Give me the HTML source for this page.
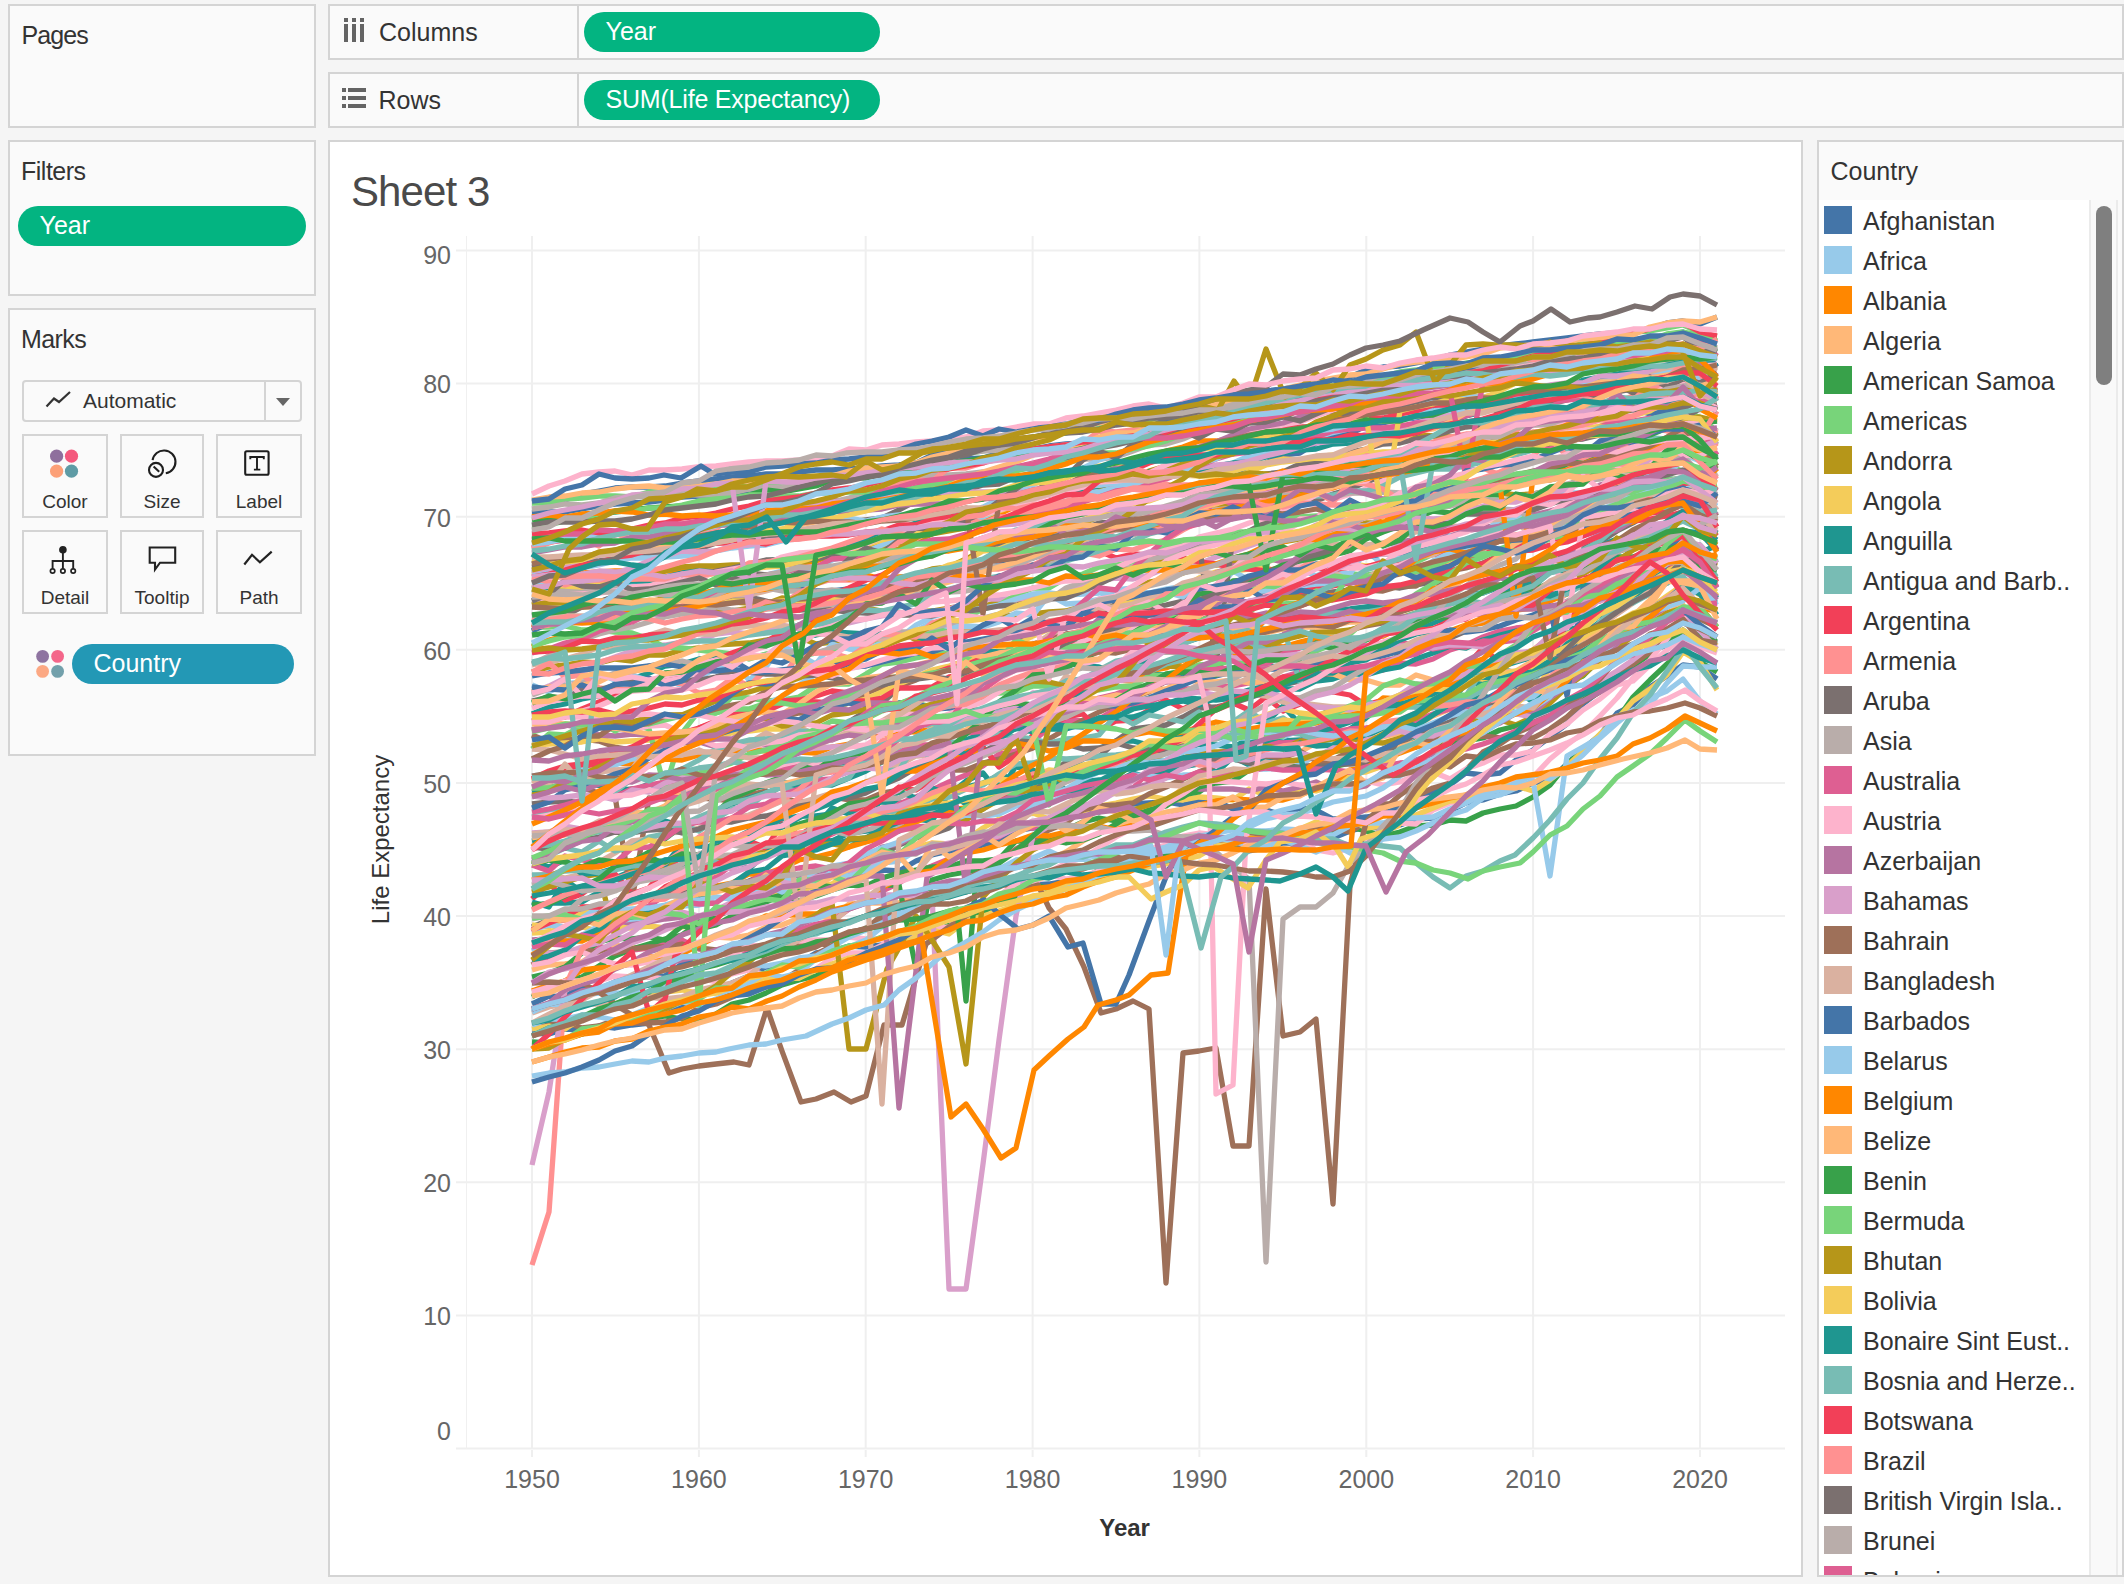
<!DOCTYPE html>
<html><head><meta charset="utf-8"><title>Sheet 3</title>
<style>
html,body{margin:0;padding:0;}
body{width:2124px;height:1584px;background:#f5f5f5;position:relative;overflow:hidden;font-family:"Liberation Sans",sans-serif;}
.b{position:absolute;}
.t{position:absolute;line-height:1;white-space:nowrap;}
svg{position:absolute;}
</style></head><body>
<div class="b" style="left:8px;top:4px;width:304px;height:120px;background:#fafafa;border:2px solid #d4d4d4;"></div>
<div class="t" style="left:21.5px;top:22.8px;font-size:25px;color:#333;letter-spacing:-0.9px;">Pages</div>
<div class="b" style="left:8px;top:140px;width:304px;height:152px;background:#fafafa;border:2px solid #d4d4d4;"></div>
<div class="t" style="left:21.0px;top:159.3px;font-size:25px;color:#333;letter-spacing:-0.5px;">Filters</div>
<div class="b" style="left:18px;top:206px;width:288px;height:40px;background:#03b481;border-radius:20px;"></div>
<div class="t" style="left:39.5px;top:212.8px;font-size:25px;color:#fff;">Year</div>
<div class="b" style="left:8px;top:308px;width:304px;height:444px;background:#fafafa;border:2px solid #d4d4d4;"></div>
<div class="t" style="left:21.0px;top:327.0px;font-size:25px;color:#333;letter-spacing:-0.6px;">Marks</div>
<div class="b" style="left:22px;top:380px;width:276px;height:38px;background:#fafafa;border:2px solid #d4d4d4;border-radius:4px;"></div>
<div class="b" style="left:264px;top:382px;width:2px;height:38px;background:#d4d4d4;"></div>
<svg style="left:275px;top:397px" width="16" height="10"><path d="M1 1 L15 1 L8 9 Z" fill="#666"/></svg>
<svg style="left:44px;top:389px" width="28" height="20"><path d="M2.5 17.5 L10 9.5 L15 13 L26 3" fill="none" stroke="#333" stroke-width="2.2"/></svg>
<div class="t" style="left:83.0px;top:390.2px;font-size:21px;color:#333;">Automatic</div>
<div class="b" style="left:22px;top:434px;width:82px;height:80px;background:#fafafa;border:2px solid #d4d4d4;"></div>
<div class="t" style="left:-435.0px;width:1000px;text-align:center;top:491.9px;font-size:19px;color:#333;">Color</div>
<div class="b" style="left:120px;top:434px;width:80px;height:80px;background:#fafafa;border:2px solid #d4d4d4;"></div>
<div class="t" style="left:-338.0px;width:1000px;text-align:center;top:491.9px;font-size:19px;color:#333;">Size</div>
<div class="b" style="left:216px;top:434px;width:82px;height:80px;background:#fafafa;border:2px solid #d4d4d4;"></div>
<div class="t" style="left:-241.0px;width:1000px;text-align:center;top:491.9px;font-size:19px;color:#333;">Label</div>
<div class="b" style="left:22px;top:530px;width:82px;height:80px;background:#fafafa;border:2px solid #d4d4d4;"></div>
<div class="t" style="left:-435.0px;width:1000px;text-align:center;top:588.2px;font-size:19px;color:#333;">Detail</div>
<div class="b" style="left:120px;top:530px;width:80px;height:80px;background:#fafafa;border:2px solid #d4d4d4;"></div>
<div class="t" style="left:-338.0px;width:1000px;text-align:center;top:588.2px;font-size:19px;color:#333;">Tooltip</div>
<div class="b" style="left:216px;top:530px;width:82px;height:80px;background:#fafafa;border:2px solid #d4d4d4;"></div>
<div class="t" style="left:-241.0px;width:1000px;text-align:center;top:588.2px;font-size:19px;color:#333;">Path</div>
<svg style="left:40px;top:440px" width="44" height="44">
<circle cx="16.6" cy="16.2" r="6.6" fill="#8e6f9d"/><circle cx="31.5" cy="16.2" r="6.6" fill="#f4587c"/>
<circle cx="16.6" cy="31.2" r="6.6" fill="#fca077"/><circle cx="31.5" cy="31.2" r="6.6" fill="#5e9ba5"/></svg>
<svg style="left:140px;top:440px" width="44" height="44">
<path d="M12.6 20.2 A11.5 11.5 0 1 1 25.8 33.3" fill="none" stroke="#1e1e1e" stroke-width="2.1"/>
<circle cx="16" cy="29.9" r="7" fill="none" stroke="#1e1e1e" stroke-width="2.1"/>
<path d="M13.6 26.6 L19.2 31.8" stroke="#1e1e1e" stroke-width="2.1"/></svg>
<svg style="left:236px;top:440px" width="44" height="44">
<rect x="9.2" y="11.2" width="23.4" height="23.5" rx="1.5" fill="none" stroke="#1e1e1e" stroke-width="2.1"/>
<path d="M14.3 19.3 V17 H27.8 V19.3 M21 17 V29.6 M17.9 29.6 H24.3" fill="none" stroke="#1e1e1e" stroke-width="1.9"/></svg>
<svg style="left:40px;top:536px" width="44" height="44">
<circle cx="22.9" cy="13.8" r="3.8" fill="#222"/>
<path d="M22.9 14 V25 M12.6 32.8 V25 H33.2 V32.8 M22.9 25 V32.8" fill="none" stroke="#222" stroke-width="1.9"/>
<circle cx="12.6" cy="35" r="2.2" fill="#fafafa" stroke="#222" stroke-width="1.7"/>
<circle cx="22.9" cy="35" r="2.2" fill="#fafafa" stroke="#222" stroke-width="1.7"/>
<circle cx="33.2" cy="35" r="2.2" fill="#fafafa" stroke="#222" stroke-width="1.7"/></svg>
<svg style="left:140px;top:536px" width="44" height="44">
<path d="M9.7 11.5 H35.2 V26.7 H20 L15 33.5 V26.7 H9.7 Z" fill="none" stroke="#222" stroke-width="2.1" stroke-linejoin="miter"/></svg>
<svg style="left:236px;top:536px" width="44" height="44">
<path d="M8.3 28.5 L16 18.8 L23.9 26.2 L35.7 15.6" fill="none" stroke="#222" stroke-width="2.2"/></svg>
<svg style="left:30px;top:644px" width="40" height="40">
<circle cx="12.6" cy="12.4" r="6.4" fill="#8e73a0"/><circle cx="27.6" cy="12.4" r="6.4" fill="#f4668a"/>
<circle cx="12.6" cy="27.4" r="6.4" fill="#fca883"/><circle cx="27.6" cy="27.4" r="6.4" fill="#72a0ab"/></svg>
<div class="b" style="left:72px;top:644px;width:222px;height:40px;background:#2398b5;border-radius:20px;"></div>
<div class="t" style="left:93.5px;top:650.6px;font-size:25px;color:#fff;">Country</div>
<div class="b" style="left:328px;top:4px;width:1792px;height:52px;background:#fafafa;border:2px solid #d4d4d4;"></div>
<div class="b" style="left:577px;top:6px;width:2px;height:52px;background:#d4d4d4;"></div>
<svg style="left:340px;top:14px" width="30" height="32" fill="#646464"><rect x="4" y="4" width="4" height="4"/><rect x="12" y="4" width="4" height="4"/><rect x="20" y="4" width="4" height="4"/><rect x="4" y="10" width="4" height="18"/><rect x="12" y="10" width="4" height="18"/><rect x="20" y="10" width="4" height="18"/></svg>
<div class="t" style="left:379.0px;top:20.3px;font-size:25px;color:#333;">Columns</div>
<div class="b" style="left:584px;top:12px;width:296px;height:40px;background:#03b481;border-radius:20px;"></div>
<div class="t" style="left:605.5px;top:18.7px;font-size:25px;color:#fff;">Year</div>
<div class="b" style="left:328px;top:72px;width:1792px;height:52px;background:#fafafa;border:2px solid #d4d4d4;"></div>
<div class="b" style="left:577px;top:74px;width:2px;height:52px;background:#d4d4d4;"></div>
<svg style="left:340px;top:84px" width="30" height="30" fill="#646464"><rect x="2" y="4" width="4" height="4"/><rect x="8" y="4" width="18" height="4"/><rect x="2" y="12" width="4" height="4"/><rect x="8" y="12" width="18" height="4"/><rect x="2" y="20" width="4" height="4"/><rect x="8" y="20" width="18" height="4"/></svg>
<div class="t" style="left:378.5px;top:88.1px;font-size:25px;color:#333;">Rows</div>
<div class="b" style="left:584px;top:80px;width:296px;height:40px;background:#03b481;border-radius:20px;"></div>
<div class="t" style="left:605.5px;top:87.0px;font-size:25px;color:#fff;letter-spacing:-0.2px;">SUM(Life Expectancy)</div>
<div class="b" style="left:328px;top:140px;width:1471px;height:1433px;background:#ffffff;border:2px solid #d4d4d4;"></div>
<div class="t" style="left:351.0px;top:170.7px;font-size:42px;color:#4a4a4a;letter-spacing:-0.9px;">Sheet 3</div>
<svg style="left:330px;top:142px" width="1471" height="1433" viewBox="330 142 1471 1433" font-family="Liberation Sans, sans-serif">
<path d="M456 1448.5H1785M456 1315.4H1785M456 1182.3H1785M456 1049.2H1785M456 916.1H1785M456 783.0H1785M456 649.8H1785M456 516.7H1785M456 383.6H1785M456 250.5H1785M532.0 236V1448M532.0 1450V1457M698.9 236V1448M698.9 1450V1457M865.7 236V1448M865.7 1450V1457M1032.6 236V1448M1032.6 1450V1457M1199.4 236V1448M1199.4 1450V1457M1366.3 236V1448M1366.3 1450V1457M1533.1 236V1448M1533.1 1450V1457M1700.0 236V1448M1700.0 1450V1457" stroke="#efefef" stroke-width="2" fill="none"/>
<path d="M466.5 236V1449" stroke="#f0f0f0" stroke-width="1" fill="none"/>
<text x="451.0" y="1440.0" font-size="25" fill="#666" text-anchor="end" >0</text>
<text x="451.0" y="1325.2" font-size="25" fill="#666" text-anchor="end" >10</text>
<text x="451.0" y="1192.1" font-size="25" fill="#666" text-anchor="end" >20</text>
<text x="451.0" y="1059.0" font-size="25" fill="#666" text-anchor="end" >30</text>
<text x="451.0" y="925.9" font-size="25" fill="#666" text-anchor="end" >40</text>
<text x="451.0" y="792.8" font-size="25" fill="#666" text-anchor="end" >50</text>
<text x="451.0" y="659.6" font-size="25" fill="#666" text-anchor="end" >60</text>
<text x="451.0" y="526.5" font-size="25" fill="#666" text-anchor="end" >70</text>
<text x="451.0" y="393.4" font-size="25" fill="#666" text-anchor="end" >80</text>
<text x="451.0" y="264.2" font-size="25" fill="#666" text-anchor="end" >90</text>
<text x="532.0" y="1488.0" font-size="25" fill="#666" text-anchor="middle" >1950</text>
<text x="698.9" y="1488.0" font-size="25" fill="#666" text-anchor="middle" >1960</text>
<text x="865.7" y="1488.0" font-size="25" fill="#666" text-anchor="middle" >1970</text>
<text x="1032.6" y="1488.0" font-size="25" fill="#666" text-anchor="middle" >1980</text>
<text x="1199.4" y="1488.0" font-size="25" fill="#666" text-anchor="middle" >1990</text>
<text x="1366.3" y="1488.0" font-size="25" fill="#666" text-anchor="middle" >2000</text>
<text x="1533.1" y="1488.0" font-size="25" fill="#666" text-anchor="middle" >2010</text>
<text x="1700.0" y="1488.0" font-size="25" fill="#666" text-anchor="middle" >2020</text>
<text x="1124.6" y="1536.0" font-size="24" fill="#333" text-anchor="middle" font-weight="bold">Year</text>
<text transform="translate(388.5 839.5) rotate(-90)" x="0" y="0" font-size="24" fill="#333" text-anchor="middle">Life Expectancy</text>
<g fill="none" stroke-width="5.3" stroke-linejoin="round" stroke-linecap="butt">
<path stroke="#de5f92" d="M532 548L549 542L565 540L582 539L599 536L615 535L632 532L649 529L665 527L682 524L699 521L716 519L732 519L749 515L766 512L782 509L799 507L816 502L832 500L849 502L866 498L882 496L899 492L916 487L932 485L949 483L966 477L983 474L999 470L1016 467L1033 463L1049 459L1066 453L1083 451L1099 446L1116 444L1133 439L1149 435L1166 428L1183 426L1199 418L1216 413L1233 411L1249 407L1266 403L1283 401L1300 397L1316 392L1333 388L1350 386L1366 384L1383 380L1400 381L1416 379L1433 378L1450 376L1466 377L1483 376L1500 374L1516 371L1533 371L1550 370L1567 367L1583 365L1600 365L1617 363L1633 362L1650 360L1667 358L1683 357L1700 351L1717 349"/>
<path stroke="#1f9690" d="M532 906L549 903L565 903L582 902L599 892L615 878L632 871L649 866L665 868L682 866L699 858L716 847L732 840L749 831L766 826L782 819L799 816L816 816L832 814L849 805L866 801L882 802L899 803L916 804L932 798L949 791L966 787L983 783L999 775L1016 779L1033 784L1049 783L1066 780L1083 776L1099 770L1116 768L1133 769L1149 766L1166 764L1183 767L1199 764L1216 760L1233 759L1249 749L1266 743L1283 741L1300 740L1316 737L1333 737L1350 729L1366 718L1383 705L1400 698L1416 692L1433 687L1450 678L1466 679L1483 669L1500 667L1516 662L1533 657L1550 642L1567 630L1583 626L1600 615L1617 603L1633 592L1650 589L1667 583L1683 572L1700 577L1717 598"/>
<path stroke="#7b706f" d="M532 804L549 802L565 801L582 803L599 798L615 791L632 789L649 791L665 788L682 786L699 779L716 777L732 773L749 768L766 761L782 759L799 750L816 745L832 729L849 722L866 711L882 703L899 688L916 678L932 672L949 667L966 660L983 653L999 653L1016 643L1033 633L1049 629L1066 628L1083 619L1099 613L1116 604L1133 606L1149 608L1166 605L1183 601L1199 592L1216 597L1233 597L1249 591L1266 593L1283 591L1300 594L1316 594L1333 592L1350 590L1366 591L1383 586L1400 588L1416 585L1433 582L1450 586L1466 577L1483 575L1500 571L1516 566L1533 568L1550 563L1567 552L1583 548L1600 542L1617 531L1633 523L1650 512L1667 503L1683 498L1700 497L1717 491"/>
<path stroke="#ff8700" d="M532 575L549 573L565 573L582 573L599 572L615 571L632 571L649 571L665 571L682 570L699 571L716 571L732 568L749 567L766 566L782 565L799 563L816 561L832 555L849 551L866 548L882 543L899 541L916 538L932 531L949 528L966 523L983 520L999 514L1016 506L1033 499L1049 492L1066 487L1083 483L1099 478L1116 469L1133 462L1149 456L1166 451L1183 447L1199 441L1216 441L1233 438L1249 436L1266 433L1283 431L1300 430L1316 423L1333 416L1350 417L1366 413L1383 410L1400 408L1416 404L1433 403L1450 398L1466 397L1483 397L1500 395L1516 396L1533 393L1550 394L1567 392L1583 389L1600 388L1617 383L1633 378L1650 375L1667 376L1683 373L1700 386L1717 391"/>
<path stroke="#9e7059" d="M532 735L549 742L565 740L582 739L599 741L615 747L632 750L649 751L665 741L682 743L699 741L716 735L732 730L749 727L766 724L782 717L799 713L816 712L832 708L849 703L866 693L882 687L899 686L916 680L932 671L949 668L966 663L983 660L999 654L1016 648L1033 644L1049 639L1066 634L1083 632L1099 628L1116 623L1133 621L1149 623L1166 618L1183 615L1199 611L1216 610L1233 604L1249 607L1266 601L1283 598L1300 596L1316 597L1333 595L1350 594L1366 590L1383 591L1400 586L1416 586L1433 575L1450 571L1466 568L1483 563L1500 555L1516 547L1533 540L1550 538L1567 531L1583 523L1600 516L1617 508L1633 503L1650 498L1667 497L1683 491L1700 497L1717 516"/>
<path stroke="#4475a8" d="M532 1033L549 1034L565 1029L582 1030L599 1026L615 1028L632 1025L649 1023L665 1010L682 1005L699 993L716 989L732 983L749 976L766 967L782 966L799 963L816 953L832 951L849 946L866 947L882 945L899 939L916 934L932 926L949 913L966 912L983 905L999 900L1016 892L1033 885L1049 884L1066 881L1083 884L1099 870L1116 868L1133 856L1149 857L1166 855L1183 856L1199 847L1216 845L1233 842L1249 851L1266 848L1283 843L1300 843L1316 839L1333 838L1350 831L1366 827L1383 828L1400 825L1416 819L1433 818L1450 811L1466 803L1483 800L1500 794L1516 791L1533 783L1550 780L1567 764L1583 749L1600 735L1617 713L1633 705L1650 687L1667 676L1683 665L1700 667L1717 679"/>
<path stroke="#de5f92" d="M532 932L549 922L565 920L582 917L599 920L615 914L632 911L649 906L665 895L682 892L699 886L716 877L732 865L749 859L766 850L782 847L799 844L816 841L832 834L849 826L866 825L882 817L899 804L916 797L932 790L949 782L966 775L983 766L999 754L1016 751L1033 741L1049 728L1066 720L1083 721L1099 719L1116 709L1133 707L1149 702L1166 695L1183 689L1199 689L1216 687L1233 686L1249 683L1266 682L1283 677L1300 672L1316 674L1333 674L1350 674L1366 671L1383 670L1400 663L1416 664L1433 659L1450 650L1466 645L1483 637L1500 631L1516 628L1533 626L1550 620L1567 610L1583 603L1600 593L1617 591L1633 584L1650 579L1667 569L1683 555L1700 562L1717 566"/>
<path stroke="#4475a8" d="M532 502L549 499L565 500L582 494L599 491L615 488L632 487L649 487L665 486L682 483L699 481L716 479L732 477L749 476L766 474L782 474L799 472L816 470L832 470L849 469L866 468L882 466L899 465L916 463L932 455L949 450L966 448L983 446L999 445L1016 442L1033 438L1049 433L1066 429L1083 429L1099 424L1116 424L1133 418L1149 415L1166 412L1183 408L1199 402L1216 403L1233 398L1249 395L1266 391L1283 389L1300 387L1316 383L1333 379L1350 377L1366 370L1383 367L1400 366L1416 363L1433 360L1450 355L1466 352L1483 349L1500 346L1516 344L1533 342L1550 340L1567 338L1583 336L1600 334L1617 333L1633 331L1650 329L1667 323L1683 321L1700 324L1717 317"/>
<path stroke="#b69619" d="M532 622L549 619L565 611L582 607L599 606L615 600L632 600L649 602L665 598L682 599L699 602L716 599L732 602L749 603L766 603L782 605L799 604L816 605L832 603L849 607L866 608L882 611L899 613L916 612L932 611L949 608L966 606L983 607L999 601L1016 599L1033 599L1049 596L1066 596L1083 588L1099 582L1116 577L1133 568L1149 564L1166 561L1183 551L1199 548L1216 541L1233 539L1249 534L1266 525L1283 523L1300 521L1316 517L1333 513L1350 513L1366 507L1383 502L1400 499L1416 493L1433 489L1450 485L1466 483L1483 479L1500 482L1516 481L1533 481L1550 480L1567 476L1583 474L1600 472L1617 465L1633 458L1650 449L1667 439L1683 437L1700 430L1717 445"/>
<path stroke="#78d47a" d="M532 503L549 503L565 499L582 498L599 496L615 496L632 497L649 492L665 492L682 492L699 489L716 489L732 488L749 486L766 485L782 483L799 481L816 481L832 480L849 477L866 473L882 472L899 468L916 464L932 461L949 457L966 454L983 451L999 448L1016 443L1033 437L1049 435L1066 433L1083 429L1099 426L1116 424L1133 421L1149 420L1166 415L1183 409L1199 408L1216 406L1233 401L1249 399L1266 395L1283 395L1300 391L1316 387L1333 386L1350 382L1366 379L1383 376L1400 372L1416 370L1433 367L1450 366L1466 363L1483 362L1500 359L1516 354L1533 355L1550 352L1567 349L1583 343L1600 340L1617 335L1633 332L1650 331L1667 328L1683 325L1700 332L1717 341"/>
<path stroke="#ffb878" d="M532 970L549 965L565 964L582 962L599 951L615 945L632 948L649 947L665 941L682 942L699 944L716 937L732 938L749 935L766 927L782 925L799 918L816 916L832 918L849 904L866 903L882 903L899 903L916 896L932 898L949 897L966 890L983 879L999 874L1016 864L1033 867L1049 860L1066 852L1083 841L1099 833L1116 828L1133 819L1149 811L1166 802L1183 788L1199 781L1216 779L1233 775L1249 769L1266 760L1283 757L1300 752L1316 743L1333 738L1350 740L1366 739L1383 737L1400 733L1416 726L1433 716L1450 709L1466 703L1483 702L1500 708L1516 697L1533 684L1550 679L1567 669L1583 662L1600 652L1617 640L1633 633L1650 616L1667 613L1683 605L1700 634L1717 646"/>
<path stroke="#f4cc5a" d="M532 745L549 744L565 743L582 742L599 739L615 742L632 741L649 740L665 740L682 742L699 739L716 737L732 733L749 731L766 729L782 729L799 724L816 714L832 708L849 703L866 699L882 692L899 684L916 677L932 670L949 666L966 661L983 655L999 650L1016 645L1033 636L1049 629L1066 624L1083 618L1099 609L1116 607L1133 600L1149 602L1166 592L1183 587L1199 578L1216 572L1233 571L1249 569L1266 568L1283 573L1300 570L1316 567L1333 564L1350 563L1366 566L1383 565L1400 572L1416 567L1433 564L1450 561L1466 553L1483 548L1500 551L1516 542L1533 540L1550 535L1567 530L1583 518L1600 514L1617 505L1633 496L1650 495L1667 484L1683 479L1700 489L1717 485"/>
<path stroke="#b69619" d="M532 604L549 603L565 603L582 603L599 605L615 606L632 608L649 610L665 611L682 612L699 612L716 611L732 611L749 608L766 604L782 598L799 600L816 599L832 597L849 594L866 589L882 586L899 581L916 574L932 569L949 567L966 559L983 550L999 543L1016 539L1033 533L1049 529L1066 527L1083 523L1099 517L1116 514L1133 512L1149 512L1166 509L1183 508L1199 505L1216 505L1233 504L1249 503L1266 501L1283 500L1300 493L1316 488L1333 486L1350 485L1366 479L1383 475L1400 470L1416 464L1433 461L1450 456L1466 450L1483 447L1500 442L1516 439L1533 440L1550 435L1567 426L1583 418L1600 408L1617 404L1633 398L1650 395L1667 393L1683 391L1700 384L1717 378"/>
<path stroke="#1f9690" d="M532 792L549 789L565 789L582 786L599 785L615 786L632 791L649 784L665 789L682 789L699 780L716 778L732 783L749 788L766 786L782 783L799 783L816 775L832 767L849 764L866 760L882 760L899 760L916 753L932 750L949 745L966 740L983 733L999 724L1016 718L1033 708L1049 705L1066 700L1083 693L1099 683L1116 678L1133 669L1149 659L1166 650L1183 643L1199 638L1216 626L1233 629L1249 624L1266 619L1283 616L1300 613L1316 615L1333 610L1350 609L1366 607L1383 605L1400 606L1416 604L1433 649L1450 602L1466 594L1483 593L1500 587L1516 585L1533 587L1550 572L1567 570L1583 554L1600 546L1617 539L1633 537L1650 534L1667 524L1683 516L1700 530L1717 540"/>
<path stroke="#f24058" d="M532 780L549 777L565 768L582 766L599 764L615 757L632 750L649 747L665 743L682 739L699 728L716 722L732 718L749 715L766 711L782 704L799 701L816 702L832 703L849 701L866 701L882 698L899 688L916 688L932 687L949 677L966 675L983 671L999 671L1016 668L1033 664L1049 660L1066 652L1083 650L1099 643L1116 640L1133 633L1149 633L1166 627L1183 623L1199 621L1216 614L1233 607L1249 602L1266 598L1283 593L1300 592L1316 586L1333 586L1350 583L1366 579L1383 577L1400 570L1416 572L1433 569L1450 566L1466 557L1483 555L1500 551L1516 551L1533 550L1550 545L1567 542L1583 536L1600 530L1617 524L1633 521L1650 519L1667 516L1683 512L1700 521L1717 536"/>
<path stroke="#9e7059" d="M532 788L549 787L565 786L582 788L599 793L615 796L632 901L649 798L665 799L682 800L699 798L716 799L732 801L749 795L766 791L782 798L799 802L816 802L832 797L849 800L866 800L882 793L899 790L916 780L932 780L949 770L966 770L983 763L999 759L1016 754L1033 748L1049 739L1066 729L1083 720L1099 712L1116 704L1133 697L1149 692L1166 681L1183 678L1199 671L1216 666L1233 658L1249 655L1266 653L1283 651L1300 645L1316 643L1333 639L1350 630L1366 626L1383 623L1400 618L1416 621L1433 620L1450 615L1466 606L1483 608L1500 606L1516 607L1533 596L1550 583L1567 577L1583 571L1600 562L1617 550L1633 544L1650 535L1667 529L1683 517L1700 514L1717 515"/>
<path stroke="#b69619" d="M532 672L549 667L565 665L582 662L599 663L615 659L632 661L649 655L665 655L682 650L699 648L716 645L732 644L749 643L766 640L782 637L799 637L816 644L832 642L849 639L866 635L882 635L899 631L916 640L932 638L949 637L966 629L983 627L999 617L1016 615L1033 614L1049 612L1066 611L1083 606L1099 602L1116 599L1133 590L1149 582L1166 579L1183 573L1199 568L1216 565L1233 563L1249 560L1266 550L1283 542L1300 539L1316 536L1333 529L1350 528L1366 523L1383 523L1400 517L1416 511L1433 505L1450 498L1466 493L1483 491L1500 493L1516 495L1533 494L1550 490L1567 487L1583 475L1600 470L1617 465L1633 461L1650 458L1667 453L1683 446L1700 445L1717 432"/>
<path stroke="#b9adaa" d="M532 573L549 568L565 567L582 563L599 555L615 553L632 549L649 542L665 537L682 535L699 530L716 526L732 521L749 518L766 517L782 513L799 507L816 506L832 502L849 498L866 493L882 490L899 486L916 481L932 475L949 475L966 474L983 472L999 471L1016 468L1033 464L1049 462L1066 460L1083 459L1099 459L1116 457L1133 451L1149 445L1166 444L1183 439L1199 432L1216 427L1233 420L1249 417L1266 410L1283 405L1300 400L1316 392L1333 388L1350 384L1366 379L1383 379L1400 377L1416 377L1433 372L1450 369L1466 370L1483 367L1500 365L1516 367L1533 365L1550 364L1567 364L1583 364L1600 364L1617 362L1633 359L1650 359L1667 360L1683 359L1700 373L1717 401"/>
<path stroke="#f24058" d="M532 899L549 883L565 900L582 894L599 881L615 874L632 894L649 888L665 868L682 857L699 864L716 866L732 869L749 841L766 848L782 824L799 835L816 826L832 815L849 811L866 808L882 800L899 787L916 790L932 780L949 769L966 758L983 747L999 767L1016 756L1033 735L1049 727L1066 717L1083 714L1099 730L1116 721L1133 720L1149 710L1166 700L1183 709L1199 702L1216 710L1233 703L1249 710L1266 697L1283 711L1300 704L1316 693L1333 692L1350 695L1366 705L1383 700L1400 700L1416 686L1433 683L1450 675L1466 666L1483 648L1500 663L1516 656L1533 654L1550 655L1567 623L1583 604L1600 601L1617 581L1633 579L1650 568L1667 566L1683 559L1700 574L1717 578"/>
<path stroke="#1f9690" d="M532 902L549 907L565 880L582 892L599 883L615 886L632 882L649 875L665 871L682 865L699 861L716 864L732 859L749 869L766 853L782 843L799 839L816 838L832 841L849 833L866 831L882 829L899 831L916 819L932 821L949 793L966 804L983 800L999 785L1016 792L1033 773L1049 773L1066 771L1083 759L1099 749L1116 741L1133 741L1149 745L1166 746L1183 733L1199 733L1216 729L1233 725L1249 720L1266 723L1283 706L1300 724L1316 718L1333 708L1350 712L1366 712L1383 707L1400 702L1416 707L1433 702L1450 705L1466 703L1483 696L1500 700L1516 690L1533 702L1550 680L1567 670L1583 659L1600 657L1617 642L1633 619L1650 616L1667 598L1683 592L1700 604L1717 599"/>
<path stroke="#d99fca" d="M532 693L549 686L565 678L582 673L599 663L615 657L632 651L649 647L665 645L682 642L699 641L716 634L732 632L749 634L766 631L782 625L799 629L816 623L832 626L849 623L866 619L882 616L899 613L916 611L932 612L949 609L966 603L983 599L999 599L1016 599L1033 599L1049 596L1066 592L1083 587L1099 580L1116 578L1133 579L1149 575L1166 568L1183 567L1199 564L1216 557L1233 552L1249 546L1266 540L1283 535L1300 534L1316 525L1333 522L1350 512L1366 506L1383 502L1400 502L1416 496L1433 490L1450 492L1466 487L1483 484L1500 480L1516 476L1533 475L1550 471L1567 466L1583 463L1600 454L1617 452L1633 456L1650 444L1667 442L1683 440L1700 438L1717 446"/>
<path stroke="#4475a8" d="M532 1004L549 996L565 997L582 986L599 990L615 982L632 976L649 977L665 976L682 964L699 956L716 951L732 947L749 938L766 929L782 918L799 908L816 888L832 887L849 882L866 877L882 870L899 871L916 861L932 855L949 851L966 849L983 845L999 841L1016 831L1033 828L1049 827L1066 819L1083 808L1099 812L1116 805L1133 804L1149 803L1166 802L1183 805L1199 801L1216 801L1233 809L1249 809L1266 810L1283 815L1300 808L1316 810L1333 819L1350 819L1366 817L1383 814L1400 807L1416 796L1433 793L1450 785L1466 773L1483 775L1500 773L1516 760L1533 750L1550 737L1567 724L1583 704L1600 691L1617 673L1633 663L1650 649L1667 646L1683 632L1700 641L1717 644"/>
<path stroke="#b674a1" d="M532 730L549 723L565 725L582 728L599 735L615 736L632 734L649 735L665 734L682 736L699 742L716 747L732 747L749 744L766 745L782 743L799 737L816 739L832 740L849 733L866 731L882 726L899 724L916 714L932 710L949 703L966 691L983 681L999 675L1016 667L1033 658L1049 651L1066 642L1083 634L1099 619L1116 613L1133 608L1149 595L1166 591L1183 589L1199 583L1216 573L1233 566L1249 564L1266 558L1283 562L1300 560L1316 551L1333 550L1350 546L1366 547L1383 544L1400 542L1416 539L1433 534L1450 536L1466 531L1483 528L1500 524L1516 519L1533 515L1550 511L1567 506L1583 495L1600 485L1617 480L1633 479L1650 474L1667 463L1683 461L1700 479L1717 491"/>
<path stroke="#78d47a" d="M532 627L549 627L565 626L582 630L599 630L615 632L632 633L649 639L665 647L682 648L699 650L716 652L732 654L749 659L766 654L782 653L799 657L816 653L832 649L849 647L866 644L882 638L899 636L916 634L932 631L949 628L966 618L983 609L999 605L1016 595L1033 588L1049 588L1066 578L1083 574L1099 567L1116 565L1133 562L1149 555L1166 547L1183 545L1199 539L1216 534L1233 532L1249 532L1266 527L1283 519L1300 517L1316 516L1333 512L1350 507L1366 507L1383 505L1400 500L1416 499L1433 492L1450 494L1466 487L1483 480L1500 480L1516 477L1533 473L1550 466L1567 460L1583 450L1600 447L1617 436L1633 426L1650 421L1667 413L1683 408L1700 418L1717 431"/>
<path stroke="#f4cc5a" d="M532 933L549 932L565 927L582 927L599 931L615 927L632 928L649 926L665 928L682 927L699 924L716 916L732 906L749 898L766 893L782 893L799 891L816 886L832 884L849 873L866 866L882 862L899 853L916 847L932 843L949 844L966 840L983 828L999 819L1016 818L1033 813L1049 819L1066 813L1083 811L1099 806L1116 803L1133 799L1149 796L1166 799L1183 800L1199 797L1216 798L1233 800L1249 789L1266 795L1283 799L1300 788L1316 791L1333 786L1350 773L1366 772L1383 766L1400 752L1416 739L1433 736L1450 732L1466 722L1483 712L1500 712L1516 699L1533 694L1550 668L1567 653L1583 635L1600 624L1617 614L1633 602L1650 587L1667 571L1683 564L1700 558L1717 566"/>
<path stroke="#dab1a0" d="M532 876L549 874L565 878L582 874L599 862L615 853L632 841L649 839L665 833L682 832L699 828L716 822L732 818L749 815L766 808L782 801L799 803L816 798L832 793L849 789L866 782L882 775L899 765L916 756L932 755L949 751L966 748L983 740L999 731L1016 727L1033 724L1049 720L1066 717L1083 708L1099 703L1116 700L1133 700L1149 700L1166 694L1183 693L1199 684L1216 689L1233 693L1249 694L1266 696L1283 702L1300 703L1316 705L1333 707L1350 707L1366 707L1383 703L1400 695L1416 686L1433 680L1450 677L1466 669L1483 672L1500 664L1516 661L1533 656L1550 650L1567 641L1583 634L1600 627L1617 614L1633 603L1650 590L1667 583L1683 572L1700 571L1717 584"/>
<path stroke="#de5f92" d="M532 961L549 957L565 954L582 949L599 946L615 951L632 950L649 948L665 944L682 940L699 949L716 951L732 950L749 951L766 948L782 941L799 930L816 924L832 921L849 909L866 903L882 891L899 883L916 872L932 866L949 859L966 847L983 841L999 837L1016 827L1033 828L1049 818L1066 811L1083 806L1099 801L1116 790L1133 788L1149 772L1166 772L1183 759L1199 755L1216 753L1233 749L1249 741L1266 742L1283 743L1300 742L1316 736L1333 732L1350 729L1366 728L1383 726L1400 727L1416 721L1433 714L1450 709L1466 708L1483 709L1500 702L1516 699L1533 694L1550 685L1567 674L1583 663L1600 646L1617 643L1633 631L1650 618L1667 604L1683 589L1700 581L1717 586"/>
<path stroke="#38a14a" d="M532 977L549 973L565 967L582 953L599 942L615 938L632 939L649 937L665 940L682 926L699 929L716 925L732 916L749 910L766 899L782 895L799 901L816 896L832 890L849 885L866 886L882 885L899 885L916 969L932 880L949 875L966 872L983 869L999 858L1016 852L1033 844L1049 842L1066 830L1083 822L1099 818L1116 821L1133 817L1149 810L1166 806L1183 795L1199 792L1216 780L1233 775L1249 770L1266 765L1283 766L1300 771L1316 769L1333 764L1350 760L1366 758L1383 755L1400 749L1416 747L1433 737L1450 727L1466 720L1483 719L1500 707L1516 713L1533 704L1550 695L1567 682L1583 676L1600 659L1617 649L1633 649L1650 640L1667 630L1683 619L1700 636L1717 642"/>
<path stroke="#7b706f" d="M532 927L549 920L565 914L582 912L599 911L615 901L632 894L649 898L665 893L682 890L699 885L716 886L732 887L749 881L766 874L782 872L799 875L816 872L832 871L849 874L866 865L882 855L899 845L916 838L932 834L949 828L966 815L983 809L999 798L1016 795L1033 787L1049 775L1066 762L1083 758L1099 757L1116 741L1133 729L1149 727L1166 725L1183 717L1199 708L1216 707L1233 703L1249 698L1266 692L1283 685L1300 681L1316 679L1333 675L1350 669L1366 669L1383 668L1400 654L1416 654L1433 644L1450 638L1466 631L1483 620L1500 610L1516 603L1533 600L1550 591L1567 577L1583 572L1600 557L1617 548L1633 542L1650 538L1667 521L1683 511L1700 519L1717 533"/>
<path stroke="#78d47a" d="M532 749L549 734L565 735L582 726L599 722L615 731L632 723L649 729L665 789L682 733L699 711L716 713L732 697L749 698L766 701L782 700L799 697L816 686L832 684L849 684L866 674L882 664L899 662L916 658L932 655L949 653L966 659L983 645L999 661L1016 640L1033 647L1049 647L1066 642L1083 644L1099 630L1116 637L1133 626L1149 635L1166 636L1183 632L1199 621L1216 615L1233 615L1249 612L1266 600L1283 604L1300 603L1316 591L1333 599L1350 574L1366 575L1383 572L1400 565L1416 562L1433 554L1450 541L1466 545L1483 547L1500 523L1516 519L1533 517L1550 520L1567 517L1583 502L1600 496L1617 483L1633 477L1650 467L1667 466L1683 471L1700 469L1717 472"/>
<path stroke="#1f9690" d="M532 841L549 838L565 833L582 829L599 830L615 829L632 828L649 822L665 821L682 826L699 821L716 815L732 804L749 798L766 793L782 787L799 786L816 784L832 785L849 778L866 771L882 762L899 755L916 751L932 753L949 748L966 741L983 738L999 729L1016 729L1033 726L1049 723L1066 726L1083 727L1099 718L1116 718L1133 717L1149 712L1166 704L1183 698L1199 699L1216 700L1233 698L1249 697L1266 692L1283 689L1300 689L1316 681L1333 679L1350 673L1366 675L1383 670L1400 667L1416 659L1433 653L1450 646L1466 648L1483 640L1500 635L1516 631L1533 628L1550 615L1567 607L1583 597L1600 588L1617 582L1633 576L1650 564L1667 556L1683 543L1700 553L1717 545"/>
<path stroke="#1f9690" d="M532 714L549 707L565 704L582 699L599 696L615 684L632 679L649 673L665 666L682 664L699 659L716 658L732 655L749 647L766 641L782 636L799 637L816 635L832 632L849 633L866 634L882 634L899 633L916 636L932 642L949 645L966 648L983 651L999 652L1016 652L1033 655L1049 658L1066 663L1083 666L1099 667L1116 672L1133 671L1149 674L1166 675L1183 673L1199 671L1216 672L1233 674L1249 668L1266 667L1283 666L1300 664L1316 661L1333 658L1350 656L1366 655L1383 651L1400 641L1416 630L1433 623L1450 616L1466 610L1483 605L1500 593L1516 587L1533 581L1550 570L1567 570L1583 561L1600 553L1617 546L1633 539L1650 530L1667 522L1683 512L1700 526L1717 534"/>
<path stroke="#b69619" d="M532 605L549 601L565 599L582 596L599 590L615 587L632 584L649 579L665 571L682 567L699 566L716 566L732 565L749 565L766 562L782 561L799 563L816 559L832 557L849 556L866 549L882 547L899 543L916 541L932 534L949 531L966 528L983 524L999 519L1016 517L1033 512L1049 508L1066 503L1083 496L1099 488L1116 482L1133 481L1149 471L1166 466L1183 464L1199 458L1216 454L1233 452L1249 449L1266 443L1283 443L1300 445L1316 442L1333 442L1350 442L1366 439L1383 435L1400 436L1416 435L1433 436L1450 437L1466 439L1483 438L1500 437L1516 435L1533 435L1550 435L1567 431L1583 431L1600 430L1617 430L1633 426L1650 424L1667 422L1683 419L1700 417L1717 421"/>
<path stroke="#ff8700" d="M532 781L549 777L565 778L582 774L599 768L615 763L632 764L649 765L665 759L682 760L699 755L716 753L732 752L749 749L766 751L782 752L799 752L816 753L832 747L849 744L866 734L882 735L899 731L916 732L932 729L949 725L966 721L983 718L999 713L1016 715L1033 708L1049 701L1066 691L1083 685L1099 682L1116 680L1133 681L1149 671L1166 668L1183 660L1199 654L1216 649L1233 654L1249 651L1266 645L1283 647L1300 642L1316 638L1333 638L1350 641L1366 637L1383 636L1400 628L1416 631L1433 629L1450 631L1466 625L1483 623L1500 617L1516 610L1533 608L1550 601L1567 594L1583 583L1600 578L1617 571L1633 560L1650 554L1667 549L1683 538L1700 560L1717 554"/>
<path stroke="#38a14a" d="M532 1042L549 1043L565 1039L582 1034L599 1028L615 1020L632 1017L649 1019L665 1016L682 1019L699 1020L716 1014L732 1004L749 1000L766 993L782 985L799 980L816 976L832 967L849 961L866 953L882 952L899 947L916 938L932 934L949 925L966 915L983 912L999 903L1016 896L1033 884L1049 889L1066 886L1083 879L1099 870L1116 867L1133 864L1149 863L1166 853L1183 848L1199 843L1216 841L1233 845L1249 838L1266 837L1283 835L1300 840L1316 834L1333 831L1350 827L1366 831L1383 836L1400 832L1416 826L1433 825L1450 820L1466 821L1483 813L1500 809L1516 806L1533 797L1550 785L1567 764L1583 750L1600 735L1617 720L1633 697L1650 680L1667 664L1683 650L1700 662L1717 672"/>
<path stroke="#7b706f" d="M532 567L549 564L565 563L582 562L599 561L615 559L632 554L649 555L665 553L682 551L699 549L716 543L732 541L749 539L766 539L782 536L799 534L816 531L832 527L849 522L866 520L882 518L899 510L916 501L932 498L949 492L966 490L983 485L999 484L1016 477L1033 473L1049 467L1066 462L1083 456L1099 448L1116 445L1133 441L1149 440L1166 436L1183 432L1199 426L1216 420L1233 420L1249 417L1266 414L1283 412L1300 411L1316 413L1333 411L1350 415L1366 413L1383 412L1400 410L1416 407L1433 408L1450 409L1466 409L1483 409L1500 407L1516 405L1533 402L1550 404L1567 400L1583 396L1600 393L1617 392L1633 389L1650 385L1667 381L1683 379L1700 389L1717 394"/>
<path stroke="#4475a8" d="M532 513L549 512L565 512L582 509L599 506L615 504L632 503L649 502L665 500L682 497L699 496L716 495L732 495L749 494L766 493L782 489L799 486L816 484L832 480L849 479L866 476L882 472L899 471L916 470L932 469L949 464L966 459L983 458L999 453L1016 451L1033 449L1049 446L1066 444L1083 443L1099 441L1116 439L1133 434L1149 427L1166 420L1183 418L1199 418L1216 415L1233 413L1249 407L1266 403L1283 400L1300 396L1316 392L1333 391L1350 388L1366 385L1383 382L1400 378L1416 376L1433 373L1450 370L1466 369L1483 363L1500 360L1516 356L1533 356L1550 353L1567 350L1583 349L1600 345L1617 343L1633 340L1650 338L1667 335L1683 332L1700 346L1717 367"/>
<path stroke="#97caea" d="M532 685L549 692L565 684L582 682L599 674L615 680L632 675L649 681L665 678L682 686L699 678L716 668L732 661L749 680L766 667L782 645L799 655L816 664L832 644L849 649L866 650L882 643L899 634L916 631L932 622L949 627L966 626L983 627L999 622L1016 613L1033 615L1049 595L1066 604L1083 603L1099 599L1116 590L1133 588L1149 595L1166 592L1183 597L1199 581L1216 592L1233 571L1249 580L1266 571L1283 569L1300 569L1316 576L1333 569L1350 574L1366 550L1383 565L1400 554L1416 541L1433 549L1450 536L1466 545L1483 535L1500 519L1516 517L1533 507L1550 491L1567 493L1583 493L1600 497L1617 485L1633 482L1650 475L1667 481L1683 454L1700 461L1717 467"/>
<path stroke="#b69619" d="M532 892L549 887L565 882L582 877L599 874L615 937L632 867L649 867L665 865L682 856L699 859L716 857L732 860L749 853L766 853L782 853L799 850L816 845L832 844L849 847L866 838L882 830L899 828L916 829L932 826L949 823L966 820L983 809L999 800L1016 792L1033 790L1049 786L1066 777L1083 768L1099 770L1116 766L1133 760L1149 757L1166 761L1183 758L1199 752L1216 752L1233 752L1249 752L1266 746L1283 749L1300 741L1316 742L1333 739L1350 738L1366 742L1383 743L1400 738L1416 732L1433 728L1450 724L1466 722L1483 720L1500 720L1516 725L1533 717L1550 703L1567 687L1583 675L1600 660L1617 648L1633 636L1650 624L1667 613L1683 608L1700 607L1717 627"/>
<path stroke="#1f9690" d="M532 861L549 867L565 860L582 874L599 873L615 868L632 867L649 856L665 865L682 844L699 846L716 847L732 841L749 841L766 830L782 825L799 825L816 826L832 808L849 814L866 815L882 800L899 792L916 798L932 788L949 795L966 781L983 773L999 793L1016 766L1033 770L1049 779L1066 790L1083 782L1099 780L1116 782L1133 773L1149 778L1166 773L1183 763L1199 755L1216 773L1233 757L1249 765L1266 758L1283 756L1300 743L1316 746L1333 745L1350 737L1366 736L1383 728L1400 721L1416 726L1433 715L1450 704L1466 683L1483 684L1500 677L1516 684L1533 668L1550 662L1567 644L1583 634L1600 622L1617 611L1633 597L1650 584L1667 564L1683 553L1700 591L1717 598"/>
<path stroke="#97caea" d="M532 573L549 571L565 570L582 568L599 565L615 561L632 558L649 558L665 557L682 556L699 554L716 551L732 548L749 546L766 545L782 541L799 538L816 534L832 533L849 534L866 533L882 530L899 529L916 528L932 525L949 525L966 518L983 517L999 510L1016 506L1033 506L1049 502L1066 495L1083 491L1099 492L1116 487L1133 483L1149 481L1166 477L1183 475L1199 473L1216 466L1233 463L1249 456L1266 453L1283 449L1300 445L1316 440L1333 435L1350 429L1366 426L1383 421L1400 414L1416 411L1433 411L1450 407L1466 405L1483 402L1500 400L1516 397L1533 394L1550 388L1567 387L1583 385L1600 382L1617 378L1633 378L1650 374L1667 372L1683 373L1700 369L1717 365"/>
<path stroke="#97caea" d="M532 585L549 585L565 587L582 585L599 584L615 582L632 583L649 580L665 582L682 583L699 585L716 581L732 581L749 578L766 575L782 571L799 569L816 570L832 560L849 556L866 552L882 545L899 537L916 531L932 526L949 521L966 515L983 507L999 499L1016 494L1033 485L1049 477L1066 471L1083 468L1099 460L1116 454L1133 449L1149 442L1166 438L1183 431L1199 424L1216 423L1233 418L1249 418L1266 417L1283 415L1300 410L1316 409L1333 407L1350 408L1366 407L1383 408L1400 405L1416 404L1433 398L1450 399L1466 397L1483 397L1500 397L1516 394L1533 392L1550 392L1567 390L1583 385L1600 385L1617 381L1633 374L1650 372L1667 366L1683 364L1700 374L1717 378"/>
<path stroke="#ff9191" d="M532 549L549 543L565 538L582 539L599 546L615 533L632 540L649 543L665 538L682 530L699 533L716 529L732 515L749 526L766 518L782 511L799 518L816 507L832 503L849 503L866 509L882 490L899 483L916 480L932 481L949 468L966 468L983 463L999 459L1016 456L1033 454L1049 447L1066 445L1083 443L1099 431L1116 432L1133 430L1149 430L1166 426L1183 424L1199 425L1216 428L1233 418L1249 419L1266 416L1283 406L1300 407L1316 405L1333 398L1350 395L1366 393L1383 391L1400 394L1416 387L1433 386L1450 381L1466 375L1483 380L1500 367L1516 371L1533 361L1550 358L1567 357L1583 356L1600 355L1617 359L1633 348L1650 348L1667 345L1683 344L1700 349L1717 357"/>
<path stroke="#4475a8" d="M532 631L549 623L565 619L582 618L599 614L615 608L632 607L649 605L665 600L682 596L699 594L716 592L732 590L749 588L766 588L782 588L799 588L816 591L832 591L849 589L866 587L882 587L899 583L916 583L932 578L949 577L966 574L983 569L999 565L1016 559L1033 558L1049 552L1066 546L1083 543L1099 537L1116 529L1133 522L1149 519L1166 512L1183 503L1199 497L1216 489L1233 479L1249 469L1266 463L1283 455L1300 453L1316 443L1333 438L1350 434L1366 426L1383 423L1400 419L1416 418L1433 415L1450 411L1466 409L1483 409L1500 409L1516 412L1533 413L1550 413L1567 410L1583 411L1600 409L1617 410L1633 409L1650 414L1667 411L1683 407L1700 401L1717 394"/>
<path stroke="#f24058" d="M532 721L549 717L565 717L582 709L599 702L615 696L632 688L649 684L665 678L682 674L699 669L716 660L732 653L749 647L766 642L782 632L799 625L816 620L832 609L849 603L866 603L882 596L899 589L916 585L932 579L949 574L966 567L983 561L999 560L1016 557L1033 554L1049 555L1066 552L1083 548L1099 551L1116 558L1133 554L1149 555L1166 554L1183 558L1199 562L1216 564L1233 568L1249 569L1266 571L1283 567L1300 569L1316 568L1333 570L1350 567L1366 567L1383 562L1400 561L1416 556L1433 554L1450 555L1466 552L1483 553L1500 550L1516 545L1533 543L1550 539L1567 537L1583 532L1600 527L1617 516L1633 516L1650 513L1667 511L1683 505L1700 523L1717 550"/>
<path stroke="#b674a1" d="M532 940L549 939L565 941L582 937L599 930L615 921L632 923L649 922L665 919L682 917L699 919L716 913L732 907L749 897L766 888L782 884L799 876L816 877L832 871L849 868L866 858L882 847L899 844L916 835L932 830L949 815L966 808L983 805L999 798L1016 797L1033 797L1049 789L1066 793L1083 790L1099 788L1116 789L1133 788L1149 784L1166 785L1183 784L1199 789L1216 789L1233 789L1249 791L1266 787L1283 791L1300 787L1316 782L1333 790L1350 789L1366 786L1383 772L1400 766L1416 760L1433 754L1450 745L1466 736L1483 729L1500 723L1516 713L1533 713L1550 698L1567 686L1583 673L1600 658L1617 644L1633 626L1650 617L1667 607L1683 596L1700 584L1717 600"/>
<path stroke="#97caea" d="M532 776L549 774L565 775L582 770L599 772L615 765L632 759L649 755L665 750L682 743L699 735L716 736L732 722L749 715L766 704L782 697L799 685L816 674L832 665L849 660L866 652L882 644L899 638L916 625L932 617L949 612L966 611L983 608L999 605L1016 599L1033 594L1049 593L1066 595L1083 594L1099 593L1116 590L1133 590L1149 593L1166 589L1183 586L1199 587L1216 592L1233 590L1249 591L1266 591L1283 589L1300 586L1316 584L1333 583L1350 577L1366 579L1383 574L1400 572L1416 571L1433 561L1450 553L1466 548L1483 546L1500 538L1516 537L1533 540L1550 529L1567 523L1583 513L1600 510L1617 503L1633 495L1650 491L1667 481L1683 478L1700 497L1717 506"/>
<path stroke="#78bcb4" d="M532 875L549 875L565 871L582 870L599 873L615 870L632 866L649 864L665 860L682 859L699 862L716 862L732 865L749 855L766 855L782 852L799 843L816 836L832 829L849 826L866 818L882 812L899 811L916 807L932 799L949 797L966 789L983 785L999 774L1016 764L1033 763L1049 758L1066 759L1083 758L1099 756L1116 755L1133 753L1149 747L1166 743L1183 739L1199 736L1216 739L1233 734L1249 736L1266 732L1283 732L1300 734L1316 740L1333 737L1350 732L1366 731L1383 725L1400 721L1416 718L1433 704L1450 701L1466 699L1483 690L1500 685L1516 680L1533 680L1550 664L1567 652L1583 639L1600 622L1617 606L1633 601L1650 594L1667 583L1683 568L1700 585L1717 573"/>
<path stroke="#f24058" d="M532 779L549 771L565 766L582 764L599 759L615 753L632 747L649 738L665 735L682 733L699 728L716 721L732 715L749 711L766 704L782 701L799 700L816 696L832 691L849 693L866 688L882 680L899 681L916 678L932 674L949 668L966 665L983 658L999 654L1016 654L1033 653L1049 649L1066 646L1083 643L1099 644L1116 636L1133 639L1149 638L1166 628L1183 624L1199 625L1216 623L1233 615L1249 610L1266 605L1283 607L1300 606L1316 600L1333 600L1350 597L1366 594L1383 587L1400 585L1416 581L1433 577L1450 571L1466 566L1483 564L1500 556L1516 552L1533 548L1550 537L1567 528L1583 519L1600 512L1617 507L1633 498L1650 495L1667 489L1683 484L1700 481L1717 473"/>
<path stroke="#7b706f" d="M532 616L549 614L565 608L582 606L599 602L615 597L632 594L649 591L665 592L682 592L699 593L716 595L732 598L749 597L766 601L782 606L799 610L816 609L832 610L849 612L866 613L882 614L899 615L916 615L932 616L949 611L966 611L983 609L999 606L1016 605L1033 602L1049 599L1066 598L1083 591L1099 584L1116 576L1133 568L1149 561L1166 554L1183 550L1199 542L1216 665L1233 537L1249 531L1266 522L1283 515L1300 505L1316 501L1333 494L1350 489L1366 482L1383 476L1400 475L1416 470L1433 468L1450 466L1466 463L1483 462L1500 457L1516 451L1533 447L1550 445L1567 440L1583 439L1600 435L1617 433L1633 431L1650 428L1667 423L1683 418L1700 409L1717 404"/>
<path stroke="#dab1a0" d="M532 780L549 785L565 764L582 784L599 772L615 770L632 769L649 747L665 752L682 755L699 750L716 757L732 750L749 743L766 733L782 740L799 727L816 735L832 728L849 735L866 731L882 721L899 711L916 717L932 729L949 719L966 715L983 718L999 715L1016 710L1033 706L1049 699L1066 676L1083 684L1099 669L1116 667L1133 658L1149 649L1166 633L1183 621L1199 628L1216 612L1233 603L1249 587L1266 574L1283 582L1300 585L1316 578L1333 572L1350 581L1366 578L1383 569L1400 565L1416 557L1433 555L1450 546L1466 542L1483 551L1500 527L1516 523L1533 535L1550 524L1567 518L1583 506L1600 509L1617 514L1633 499L1650 494L1667 495L1683 491L1700 487L1717 510"/>
<path stroke="#1f9690" d="M532 589L549 587L565 587L582 587L599 587L615 584L632 581L649 581L665 577L682 573L699 571L716 572L732 570L749 569L766 561L782 559L799 557L816 555L832 549L849 544L866 538L882 533L899 529L916 523L932 517L949 515L966 510L983 512L999 506L1016 504L1033 498L1049 495L1066 490L1083 489L1099 486L1116 482L1133 478L1149 472L1166 476L1183 474L1199 470L1216 466L1233 463L1249 462L1266 457L1283 453L1300 450L1316 449L1333 444L1350 443L1366 438L1383 437L1400 435L1416 433L1433 425L1450 423L1466 416L1483 412L1500 405L1516 399L1533 395L1550 393L1567 389L1583 380L1600 377L1617 374L1633 371L1650 369L1667 365L1683 362L1700 358L1717 366"/>
<path stroke="#dab1a0" d="M532 665L549 662L565 659L582 654L599 647L615 648L632 644L649 635L665 630L682 634L699 634L716 634L732 629L749 626L766 625L782 626L799 627L816 634L832 634L849 637L866 638L882 639L899 639L916 636L932 636L949 632L966 632L983 632L999 630L1016 629L1033 627L1049 621L1066 619L1083 617L1099 609L1116 607L1133 604L1149 597L1166 593L1183 583L1199 579L1216 573L1233 568L1249 564L1266 563L1283 555L1300 548L1316 541L1333 534L1350 530L1366 528L1383 521L1400 518L1416 514L1433 508L1450 506L1466 501L1483 493L1500 486L1516 482L1533 478L1550 480L1567 477L1583 469L1600 463L1617 461L1633 462L1650 454L1667 450L1683 448L1700 447L1717 448"/>
<path stroke="#97caea" d="M532 951L549 943L565 940L582 935L599 926L615 921L632 919L649 917L665 910L682 906L699 905L716 902L732 894L749 892L766 886L782 879L799 881L816 871L832 866L849 863L866 854L882 848L899 842L916 834L932 826L949 821L966 815L983 816L999 814L1016 806L1033 803L1049 803L1066 795L1083 787L1099 784L1116 783L1133 775L1149 776L1166 778L1183 775L1199 775L1216 773L1233 776L1249 769L1266 769L1283 768L1300 765L1316 755L1333 759L1350 760L1366 758L1383 751L1400 745L1416 738L1433 728L1450 719L1466 712L1483 718L1500 714L1516 712L1533 708L1550 697L1567 675L1583 662L1600 654L1617 641L1633 625L1650 608L1667 598L1683 588L1700 589L1717 595"/>
<path stroke="#d99fca" d="M532 571L549 568L565 567L582 560L599 555L615 554L632 551L649 546L665 543L682 534L699 530L716 525L732 522L749 519L766 515L782 509L799 504L816 503L832 502L849 502L866 500L882 495L899 496L916 491L932 491L949 493L966 492L983 492L999 492L1016 492L1033 493L1049 488L1066 489L1083 487L1099 485L1116 483L1133 479L1149 473L1166 471L1183 469L1199 468L1216 465L1233 464L1249 461L1266 456L1283 452L1300 447L1316 443L1333 441L1350 440L1366 434L1383 433L1400 430L1416 423L1433 419L1450 414L1466 411L1483 406L1500 399L1516 394L1533 388L1550 385L1567 383L1583 383L1600 376L1617 376L1633 374L1650 372L1667 368L1683 365L1700 379L1717 379"/>
<path stroke="#78bcb4" d="M532 817L549 813L565 806L582 801L599 797L615 792L632 779L649 777L665 774L682 769L699 760L716 749L732 744L749 740L766 739L782 738L799 731L816 732L832 729L849 730L866 729L882 727L899 721L916 724L932 725L949 721L966 716L983 709L999 709L1016 701L1033 694L1049 690L1066 681L1083 679L1099 670L1116 661L1133 658L1149 652L1166 649L1183 644L1199 637L1216 636L1233 632L1249 628L1266 629L1283 626L1300 683L1316 615L1333 613L1350 613L1366 612L1383 609L1400 610L1416 607L1433 609L1450 604L1466 601L1483 603L1500 600L1516 598L1533 602L1550 598L1567 594L1583 585L1600 582L1617 572L1633 563L1650 557L1667 551L1683 543L1700 545L1717 563"/>
<path stroke="#78bcb4" d="M532 863L549 856L565 848L582 852L599 841L615 851L632 847L649 837L665 834L682 825L699 831L716 819L732 809L749 807L766 793L782 787L799 792L816 786L832 784L849 778L866 754L882 771L899 770L916 745L932 759L949 742L966 743L983 738L999 734L1016 737L1033 739L1049 743L1066 739L1083 738L1099 735L1116 715L1133 724L1149 715L1166 718L1183 722L1199 712L1216 730L1233 722L1249 711L1266 723L1283 718L1300 730L1316 714L1333 719L1350 711L1366 700L1383 709L1400 707L1416 707L1433 708L1450 705L1466 696L1483 669L1500 668L1516 673L1533 669L1550 647L1567 634L1583 627L1600 633L1617 590L1633 603L1650 594L1667 578L1683 577L1700 593L1717 576"/>
<path stroke="#b9adaa" d="M532 509L549 507L565 504L582 505L599 503L615 498L632 496L649 497L665 496L682 494L699 495L716 495L732 493L749 489L766 487L782 488L799 483L816 480L832 479L849 477L866 474L882 473L899 468L916 463L932 460L949 457L966 453L983 451L999 450L1016 444L1033 438L1049 434L1066 430L1083 427L1099 422L1116 419L1133 415L1149 413L1166 411L1183 409L1199 407L1216 405L1233 403L1249 400L1266 396L1283 395L1300 392L1316 391L1333 388L1350 385L1366 382L1383 381L1400 381L1416 381L1433 379L1450 379L1466 378L1483 374L1500 368L1516 364L1533 365L1550 362L1567 358L1583 354L1600 352L1617 346L1633 344L1650 340L1667 337L1683 335L1700 342L1717 348"/>
<path stroke="#de5f92" d="M532 812L549 809L565 805L582 800L599 793L615 797L632 789L649 785L665 782L682 781L699 778L716 779L732 777L749 773L766 770L782 769L799 766L816 763L832 759L849 762L866 760L882 752L899 752L916 745L932 745L949 736L966 733L983 731L999 721L1016 715L1033 713L1049 710L1066 703L1083 703L1099 698L1116 694L1133 688L1149 686L1166 681L1183 671L1199 669L1216 669L1233 668L1249 665L1266 665L1283 654L1300 648L1316 644L1333 644L1350 644L1366 646L1383 643L1400 643L1416 645L1433 649L1450 646L1466 647L1483 641L1500 642L1516 640L1533 631L1550 621L1567 609L1583 601L1600 595L1617 586L1633 575L1650 568L1667 554L1683 544L1700 559L1717 570"/>
<path stroke="#ffb878" d="M532 838L549 835L565 835L582 832L599 826L615 823L632 812L649 813L665 806L682 790L699 786L716 789L732 784L749 785L766 785L782 784L799 780L816 775L832 770L849 768L866 757L882 754L899 746L916 738L932 729L949 733L966 730L983 717L999 717L1016 719L1033 713L1049 713L1066 702L1083 698L1099 699L1116 695L1133 697L1149 691L1166 689L1183 680L1199 681L1216 682L1233 680L1249 683L1266 681L1283 679L1300 676L1316 672L1333 674L1350 680L1366 680L1383 685L1400 685L1416 675L1433 680L1450 681L1466 674L1483 669L1500 673L1516 671L1533 661L1550 656L1567 647L1583 639L1600 630L1617 621L1633 616L1650 600L1667 581L1683 581L1700 581L1717 596"/>
<path stroke="#78d47a" d="M532 788L549 788L565 783L582 783L599 780L615 779L632 780L649 776L665 775L682 776L699 773L716 768L732 763L749 754L766 750L782 744L799 737L816 729L832 721L849 723L866 719L882 711L899 703L916 703L932 707L949 706L966 701L983 697L999 693L1016 692L1033 686L1049 686L1066 687L1083 686L1099 690L1116 687L1133 686L1149 676L1166 675L1183 670L1199 665L1216 664L1233 661L1249 662L1266 658L1283 659L1300 656L1316 651L1333 644L1350 634L1366 620L1383 614L1400 609L1416 594L1433 584L1450 574L1466 563L1483 557L1500 549L1516 543L1533 533L1550 527L1567 521L1583 512L1600 504L1617 494L1633 492L1650 486L1667 480L1683 478L1700 489L1717 490"/>
<path stroke="#7b706f" d="M532 626L549 623L565 616L582 607L599 602L615 596L632 588L649 589L665 584L682 580L699 574L716 571L732 568L749 564L766 560L782 560L799 559L816 559L832 555L849 551L866 551L882 552L899 553L916 554L932 552L949 548L966 547L983 547L999 544L1016 542L1033 537L1049 535L1066 532L1083 529L1099 523L1116 522L1133 517L1149 515L1166 508L1183 502L1199 493L1216 488L1233 486L1249 479L1266 474L1283 472L1300 464L1316 462L1333 458L1350 452L1366 449L1383 444L1400 443L1416 439L1433 436L1450 431L1466 427L1483 425L1500 426L1516 425L1533 423L1550 425L1567 423L1583 418L1600 416L1617 413L1633 410L1650 408L1667 406L1683 408L1700 401L1717 410"/>
<path stroke="#4475a8" d="M532 808L549 802L565 790L582 786L599 781L615 774L632 769L649 758L665 750L682 743L699 734L716 735L732 730L749 726L766 719L782 718L799 720L816 710L832 707L849 703L866 705L882 707L899 703L916 703L932 709L949 708L966 708L983 712L999 706L1016 705L1033 708L1049 709L1066 711L1083 708L1099 705L1116 706L1133 703L1149 698L1166 691L1183 685L1199 678L1216 676L1233 672L1249 675L1266 669L1283 669L1300 667L1316 663L1333 660L1350 659L1366 658L1383 656L1400 651L1416 641L1433 635L1450 630L1466 632L1483 630L1500 626L1516 620L1533 615L1550 606L1567 696L1583 588L1600 580L1617 572L1633 564L1650 556L1667 548L1683 538L1700 553L1717 562"/>
<path stroke="#f4cc5a" d="M532 925L549 927L565 917L582 914L599 906L615 902L632 903L649 897L665 889L682 881L699 874L716 872L732 860L749 857L766 854L782 847L799 843L816 831L832 819L849 819L866 814L882 808L899 807L916 804L932 797L949 792L966 789L983 783L999 779L1016 781L1033 777L1049 770L1066 772L1083 767L1099 764L1116 760L1133 755L1149 759L1166 750L1183 745L1199 735L1216 729L1233 726L1249 730L1266 727L1283 720L1300 722L1316 719L1333 710L1350 712L1366 710L1383 702L1400 698L1416 696L1433 698L1450 688L1466 677L1483 679L1500 676L1516 671L1533 667L1550 654L1567 647L1583 637L1600 627L1617 622L1633 613L1650 608L1667 596L1683 585L1700 595L1717 588"/>
<path stroke="#38a14a" d="M532 520L549 518L565 519L582 517L599 515L615 512L632 510L649 508L665 507L682 506L699 504L716 502L732 499L749 495L766 490L782 492L799 489L816 486L832 480L849 477L866 478L882 474L899 472L916 467L932 466L949 463L966 461L983 458L999 456L1016 456L1033 452L1049 448L1066 446L1083 445L1099 442L1116 438L1133 436L1149 434L1166 429L1183 429L1199 427L1216 427L1233 424L1249 422L1266 420L1283 417L1300 410L1316 407L1333 404L1350 397L1366 393L1383 393L1400 389L1416 387L1433 381L1450 380L1466 377L1483 376L1500 372L1516 370L1533 366L1550 363L1567 360L1583 355L1600 351L1617 348L1633 346L1650 345L1667 342L1683 335L1700 354L1717 348"/>
<path stroke="#d99fca" d="M532 796L549 798L565 797L582 795L599 796L615 800L632 790L649 792L665 783L682 778L699 779L716 779L732 773L749 771L766 768L782 760L799 751L816 748L832 747L849 746L866 746L882 749L899 747L916 737L932 733L949 727L966 720L983 715L999 713L1016 705L1033 693L1049 694L1066 689L1083 682L1099 679L1116 675L1133 664L1149 656L1166 651L1183 647L1199 649L1216 647L1233 658L1249 658L1266 655L1283 656L1300 654L1316 658L1333 657L1350 654L1366 654L1383 648L1400 646L1416 646L1433 648L1450 645L1466 645L1483 647L1500 640L1516 637L1533 626L1550 617L1567 611L1583 601L1600 601L1617 595L1633 582L1650 575L1667 564L1683 554L1700 562L1717 557"/>
<path stroke="#38a14a" d="M532 997L549 988L565 981L582 977L599 966L615 956L632 949L649 944L665 939L682 935L699 923L716 916L732 910L749 908L766 902L782 895L799 887L816 885L832 887L849 885L866 886L882 878L899 873L916 870L932 867L949 867L966 861L983 861L999 859L1016 841L1033 841L1049 840L1066 843L1083 840L1099 834L1116 824L1133 813L1149 812L1166 803L1183 797L1199 787L1216 783L1233 781L1249 770L1266 767L1283 764L1300 768L1316 772L1333 767L1350 763L1366 757L1383 753L1400 750L1416 741L1433 744L1450 745L1466 741L1483 738L1500 730L1516 726L1533 720L1550 715L1567 707L1583 699L1600 686L1617 678L1633 666L1650 654L1667 643L1683 630L1700 643L1717 641"/>
<path stroke="#38a14a" d="M532 905L549 904L565 896L582 887L599 879L615 866L632 862L649 852L665 839L682 826L699 821L716 813L732 798L749 791L766 783L782 777L799 770L816 764L832 761L849 756L866 752L882 745L899 737L916 729L932 719L949 715L966 712L983 709L999 706L1016 703L1033 705L1049 705L1066 702L1083 708L1099 707L1116 700L1133 690L1149 684L1166 674L1183 672L1199 672L1216 675L1233 668L1249 666L1266 660L1283 660L1300 659L1316 643L1333 649L1350 640L1366 640L1383 633L1400 629L1416 623L1433 617L1450 618L1466 610L1483 604L1500 595L1516 592L1533 590L1550 583L1567 579L1583 571L1600 561L1617 557L1633 557L1650 551L1667 549L1683 545L1700 566L1717 570"/>
<path stroke="#b9adaa" d="M532 695L549 689L565 685L582 683L599 679L615 673L632 672L649 666L665 664L682 661L699 665L716 660L732 658L749 658L766 655L782 652L799 652L816 653L832 648L849 643L866 639L882 636L899 632L916 632L932 628L949 624L966 618L983 618L999 614L1016 607L1033 605L1049 600L1066 588L1083 582L1099 576L1116 570L1133 567L1149 560L1166 556L1183 554L1199 548L1216 542L1233 539L1249 539L1266 535L1283 534L1300 533L1316 531L1333 528L1350 525L1366 526L1383 518L1400 515L1416 513L1433 508L1450 506L1466 502L1483 499L1500 501L1516 498L1533 494L1550 490L1567 484L1583 480L1600 479L1617 475L1633 473L1650 471L1667 459L1683 451L1700 445L1717 445"/>
<path stroke="#f4cc5a" d="M532 628L549 624L565 622L582 620L599 616L615 613L632 612L649 610L665 609L682 611L699 608L716 605L732 601L749 601L766 603L782 601L799 600L816 602L832 599L849 598L866 594L882 591L899 584L916 578L932 572L949 565L966 561L983 551L999 549L1016 542L1033 534L1049 529L1066 523L1083 520L1099 514L1116 507L1133 504L1149 501L1166 495L1183 491L1199 487L1216 481L1233 479L1249 472L1266 465L1283 462L1300 460L1316 457L1333 455L1350 455L1366 454L1383 452L1400 452L1416 452L1433 452L1450 452L1466 450L1483 451L1500 447L1516 444L1533 443L1550 440L1567 437L1583 436L1600 435L1617 434L1633 432L1650 430L1667 427L1683 423L1700 424L1717 419"/>
<path stroke="#7b706f" d="M532 847L549 849L565 848L582 840L599 837L615 832L632 833L649 830L665 829L682 833L699 829L716 822L732 822L749 818L766 816L782 812L799 806L816 803L832 798L849 798L866 793L882 785L899 778L916 768L932 762L949 756L966 754L983 752L999 743L1016 741L1033 742L1049 744L1066 744L1083 749L1099 748L1116 743L1133 748L1149 750L1166 751L1183 746L1199 756L1216 760L1233 759L1249 763L1266 767L1283 768L1300 767L1316 765L1333 764L1350 764L1366 763L1383 755L1400 744L1416 734L1433 728L1450 722L1466 713L1483 708L1500 702L1516 693L1533 675L1550 666L1567 649L1583 633L1600 624L1617 612L1633 602L1650 593L1667 576L1683 560L1700 562L1717 565"/>
<path stroke="#dab1a0" d="M532 616L549 616L565 616L582 616L599 617L615 616L632 613L649 611L665 607L682 607L699 603L716 601L732 595L749 595L766 591L782 587L799 585L816 578L832 575L849 572L866 567L882 564L899 562L916 558L932 555L949 550L966 547L983 541L999 539L1016 538L1033 533L1049 532L1066 529L1083 530L1099 528L1116 523L1133 520L1149 516L1166 512L1183 504L1199 499L1216 497L1233 493L1249 488L1266 483L1283 479L1300 476L1316 472L1333 467L1350 461L1366 456L1383 456L1400 450L1416 447L1433 444L1450 441L1466 436L1483 430L1500 424L1516 418L1533 410L1550 400L1567 392L1583 389L1600 385L1617 384L1633 380L1650 376L1667 369L1683 365L1700 364L1717 371"/>
<path stroke="#b9adaa" d="M532 919L549 916L565 914L582 899L599 896L615 891L632 883L649 880L665 875L682 869L699 866L716 856L732 855L749 847L766 845L782 841L799 834L816 831L832 831L849 835L866 830L882 826L899 825L916 813L932 811L949 809L966 813L983 816L999 811L1016 803L1033 800L1049 792L1066 782L1083 775L1099 768L1116 762L1133 756L1149 758L1166 754L1183 747L1199 742L1216 739L1233 725L1249 714L1266 705L1283 697L1300 698L1316 691L1333 688L1350 677L1366 668L1383 661L1400 657L1416 648L1433 638L1450 635L1466 630L1483 629L1500 619L1516 617L1533 618L1550 610L1567 601L1583 593L1600 585L1617 580L1633 575L1650 565L1667 563L1683 562L1700 583L1717 580"/>
<path stroke="#fdb3cc" d="M532 717L549 714L565 712L582 715L599 719L615 728L632 730L649 726L665 725L682 733L699 739L716 746L732 744L749 748L766 743L782 741L799 735L816 734L832 731L849 730L866 725L882 721L899 718L916 712L932 704L949 699L966 693L983 688L999 679L1016 670L1033 668L1049 658L1066 650L1083 641L1099 634L1116 629L1133 627L1149 617L1166 615L1183 603L1199 597L1216 599L1233 592L1249 578L1266 574L1283 569L1300 566L1316 567L1333 564L1350 562L1366 568L1383 568L1400 565L1416 556L1433 551L1450 545L1466 539L1483 540L1500 530L1516 526L1533 521L1550 513L1567 502L1583 493L1600 488L1617 478L1633 468L1650 460L1667 451L1683 443L1700 443L1717 428"/>
<path stroke="#ff9191" d="M532 627L549 625L565 621L582 618L599 615L615 611L632 606L649 602L665 602L682 598L699 598L716 594L732 593L749 590L766 587L782 586L799 584L816 580L832 580L849 580L866 579L882 581L899 578L916 575L932 577L949 576L966 573L983 569L999 569L1016 566L1033 565L1049 562L1066 554L1083 553L1099 556L1116 549L1133 550L1149 544L1166 540L1183 530L1199 522L1216 514L1233 511L1249 505L1266 500L1283 492L1300 489L1316 482L1333 476L1350 473L1366 465L1383 460L1400 454L1416 449L1433 442L1450 437L1466 434L1483 434L1500 429L1516 426L1533 420L1550 414L1567 409L1583 408L1600 405L1617 402L1633 396L1650 387L1667 386L1683 384L1700 385L1717 388"/>
<path stroke="#b69619" d="M532 795L549 792L565 782L582 775L599 767L615 760L632 750L649 747L665 741L682 736L699 731L716 730L732 723L749 725L766 720L782 726L799 725L816 723L832 715L849 713L866 709L882 709L899 708L916 709L932 704L949 700L966 695L983 692L999 689L1016 687L1033 681L1049 682L1066 686L1083 688L1099 685L1116 678L1133 676L1149 669L1166 666L1183 667L1199 659L1216 652L1233 648L1249 646L1266 647L1283 640L1300 636L1316 632L1333 632L1350 630L1366 625L1383 621L1400 618L1416 613L1433 612L1450 614L1466 609L1483 603L1500 604L1516 599L1533 593L1550 584L1567 580L1583 574L1600 564L1617 561L1633 550L1650 542L1667 538L1683 530L1700 535L1717 545"/>
<path stroke="#fdb3cc" d="M532 818L549 815L565 813L582 809L599 799L615 796L632 795L649 790L665 793L682 789L699 786L716 780L732 778L749 775L766 770L782 765L799 761L816 764L832 752L849 747L866 745L882 735L899 728L916 727L932 720L949 714L966 708L983 702L999 692L1016 681L1033 675L1049 669L1066 660L1083 664L1099 660L1116 647L1133 635L1149 629L1166 621L1183 613L1199 595L1216 585L1233 569L1249 554L1266 545L1283 532L1300 523L1316 519L1333 500L1350 494L1366 489L1383 481L1400 473L1416 463L1433 454L1450 447L1466 443L1483 441L1500 431L1516 427L1533 425L1550 425L1567 423L1583 417L1600 418L1617 410L1633 403L1650 396L1667 386L1683 383L1700 399L1717 408"/>
<path stroke="#b9adaa" d="M532 590L549 593L565 591L582 589L599 590L615 588L632 588L649 593L665 595L682 594L699 596L716 595L732 593L749 593L766 588L782 591L799 591L816 592L832 590L849 592L866 592L882 590L899 586L916 581L932 577L949 576L966 573L983 567L999 566L1016 565L1033 558L1049 554L1066 547L1083 541L1099 536L1116 530L1133 529L1149 522L1166 518L1183 513L1199 507L1216 503L1233 500L1249 497L1266 491L1283 487L1300 489L1316 486L1333 480L1350 480L1366 476L1383 475L1400 471L1416 462L1433 457L1450 456L1466 453L1483 449L1500 449L1516 446L1533 443L1550 438L1567 434L1583 431L1600 428L1617 426L1633 425L1650 420L1667 416L1683 413L1700 427L1717 444"/>
<path stroke="#ff8700" d="M532 955L549 945L565 941L582 941L599 933L615 925L632 912L649 909L665 908L682 905L699 898L716 886L732 883L749 874L766 874L782 868L799 860L816 857L832 853L849 847L866 842L882 838L899 830L916 822L932 815L949 810L966 808L983 795L999 787L1016 775L1033 765L1049 757L1066 745L1083 734L1099 723L1116 712L1133 698L1149 688L1166 680L1183 667L1199 654L1216 650L1233 647L1249 637L1266 619L1283 609L1300 602L1316 595L1333 596L1350 590L1366 584L1383 577L1400 573L1416 559L1433 552L1450 549L1466 553L1483 547L1500 541L1516 535L1533 535L1550 539L1567 529L1583 532L1600 523L1617 524L1633 522L1650 513L1667 501L1683 496L1700 512L1717 520"/>
<path stroke="#78d47a" d="M532 526L549 525L565 521L582 518L599 514L615 511L632 511L649 508L665 508L682 505L699 501L716 499L732 498L749 495L766 495L782 496L799 496L816 493L832 493L849 492L866 492L882 493L899 491L916 488L932 485L949 483L966 484L983 479L999 476L1016 471L1033 467L1049 465L1066 463L1083 459L1099 453L1116 453L1133 449L1149 446L1166 441L1183 434L1199 431L1216 428L1233 423L1249 419L1266 416L1283 410L1300 405L1316 399L1333 396L1350 389L1366 386L1383 380L1400 379L1416 372L1433 369L1450 368L1466 364L1483 360L1500 358L1516 356L1533 352L1550 350L1567 352L1583 350L1600 347L1617 344L1633 340L1650 340L1667 334L1683 332L1700 335L1717 336"/>
<path stroke="#9e7059" d="M532 965L549 953L565 952L582 950L599 952L615 953L632 949L649 947L665 947L682 944L699 948L716 950L732 948L749 948L766 958L782 953L799 945L816 943L832 946L849 934L866 928L882 920L899 912L916 903L932 898L949 890L966 879L983 871L999 862L1016 849L1033 839L1049 830L1066 823L1083 810L1099 806L1116 805L1133 803L1149 794L1166 787L1183 779L1199 772L1216 765L1233 756L1249 755L1266 756L1283 758L1300 751L1316 761L1333 760L1350 751L1366 757L1383 756L1400 752L1416 745L1433 739L1450 739L1466 737L1483 736L1500 738L1516 737L1533 738L1550 729L1567 717L1583 702L1600 692L1617 679L1633 664L1650 652L1667 636L1683 622L1700 619L1717 627"/>
<path stroke="#b9adaa" d="M532 664L549 656L565 649L582 640L599 634L615 630L632 627L649 622L665 617L682 614L699 613L716 607L732 610L749 611L766 609L782 608L799 608L816 606L832 604L849 605L866 601L882 597L899 595L916 592L932 592L949 592L966 591L983 588L999 582L1016 572L1033 569L1049 563L1066 555L1083 552L1099 545L1116 539L1133 535L1149 531L1166 523L1183 517L1199 513L1216 510L1233 508L1249 505L1266 500L1283 495L1300 496L1316 495L1333 497L1350 493L1366 493L1383 492L1400 493L1416 491L1433 495L1450 501L1466 502L1483 510L1500 509L1516 510L1533 518L1550 519L1567 519L1583 518L1600 514L1617 515L1633 512L1650 505L1667 503L1683 499L1700 508L1717 521"/>
<path stroke="#f4cc5a" d="M532 588L549 586L565 586L582 587L599 581L615 582L632 579L649 577L665 581L682 581L699 577L716 573L732 571L749 569L766 567L782 566L799 562L816 557L832 551L849 550L866 545L882 540L899 536L916 534L932 530L949 524L966 517L983 515L999 511L1016 505L1033 500L1049 493L1066 489L1083 485L1099 485L1116 482L1133 481L1149 477L1166 476L1183 475L1199 476L1216 476L1233 471L1249 467L1266 463L1283 459L1300 460L1316 458L1333 459L1350 458L1366 458L1383 454L1400 452L1416 453L1433 452L1450 451L1466 445L1483 444L1500 441L1516 441L1533 433L1550 430L1567 431L1583 429L1600 426L1617 420L1633 416L1650 411L1667 401L1683 394L1700 386L1717 396"/>
<path stroke="#ff9191" d="M532 945L549 943L565 934L582 922L599 916L615 908L632 902L649 900L665 899L682 889L699 882L716 871L732 861L749 852L766 845L782 837L799 833L816 832L832 827L849 818L866 818L882 812L899 808L916 801L932 793L949 787L966 789L983 791L999 787L1016 781L1033 774L1049 773L1066 771L1083 771L1099 765L1116 766L1133 764L1149 764L1166 766L1183 760L1199 765L1216 764L1233 754L1249 754L1266 750L1283 746L1300 744L1316 741L1333 737L1350 731L1366 732L1383 722L1400 720L1416 713L1433 706L1450 705L1466 702L1483 702L1500 699L1516 692L1533 685L1550 677L1567 662L1583 651L1600 641L1617 633L1633 621L1650 610L1667 598L1683 587L1700 607L1717 605"/>
<path stroke="#dab1a0" d="M532 749L549 750L565 754L582 759L599 756L615 755L632 754L649 757L665 756L682 755L699 752L716 752L732 755L749 758L766 758L782 755L799 747L816 746L832 739L849 732L866 730L882 723L899 715L916 704L932 693L949 682L966 672L983 666L999 662L1016 655L1033 646L1049 635L1066 627L1083 618L1099 610L1116 597L1133 591L1149 585L1166 579L1183 570L1199 571L1216 574L1233 569L1249 561L1266 560L1283 551L1300 544L1316 543L1333 544L1350 546L1366 545L1383 543L1400 537L1416 532L1433 529L1450 526L1466 527L1483 521L1500 519L1516 513L1533 505L1550 501L1567 499L1583 494L1600 488L1617 481L1633 472L1650 465L1667 460L1683 453L1700 459L1717 477"/>
<path stroke="#78bcb4" d="M532 662L549 658L565 659L582 657L599 655L615 650L632 647L649 646L665 646L682 642L699 641L716 641L732 639L749 635L766 633L782 631L799 625L816 625L832 621L849 615L866 610L882 611L899 607L916 604L932 595L949 589L966 585L983 579L999 576L1016 575L1033 566L1049 567L1066 561L1083 556L1099 551L1116 545L1133 541L1149 534L1166 530L1183 528L1199 521L1216 519L1233 513L1249 512L1266 508L1283 503L1300 497L1316 496L1333 495L1350 491L1366 491L1383 486L1400 477L1416 473L1433 469L1450 469L1466 466L1483 462L1500 456L1516 455L1533 450L1550 450L1567 449L1583 448L1600 445L1617 447L1633 444L1650 438L1667 439L1683 434L1700 443L1717 458"/>
<path stroke="#de5f92" d="M532 653L549 649L565 643L582 639L599 631L615 626L632 622L649 614L665 612L682 606L699 599L716 591L732 587L749 580L766 575L782 573L799 568L816 567L832 559L849 558L866 555L882 552L899 550L916 544L932 540L949 539L966 534L983 531L999 525L1016 516L1033 514L1049 513L1066 507L1083 502L1099 497L1116 491L1133 489L1149 484L1166 479L1183 472L1199 466L1216 459L1233 454L1249 452L1266 448L1283 441L1300 438L1316 437L1333 431L1350 429L1366 428L1383 428L1400 426L1416 423L1433 423L1450 419L1466 416L1483 410L1500 408L1516 407L1533 404L1550 403L1567 400L1583 398L1600 402L1617 402L1633 400L1650 400L1667 396L1683 396L1700 402L1717 398"/>
<path stroke="#97caea" d="M532 544L549 542L565 539L582 536L599 534L615 534L632 531L649 528L665 530L682 531L699 530L716 526L732 523L749 521L766 520L782 522L799 520L816 521L832 522L849 518L866 521L882 517L899 515L916 515L932 513L949 513L966 510L983 509L999 508L1016 500L1033 498L1049 494L1066 491L1083 486L1099 485L1116 483L1133 485L1149 478L1166 473L1183 471L1199 464L1216 459L1233 450L1249 447L1266 442L1283 438L1300 434L1316 431L1333 429L1350 425L1366 421L1383 421L1400 420L1416 417L1433 412L1450 410L1466 411L1483 406L1500 403L1516 397L1533 395L1550 389L1567 389L1583 386L1600 384L1617 384L1633 382L1650 377L1667 373L1683 371L1700 379L1717 375"/>
<path stroke="#f24058" d="M532 577L549 574L565 570L582 565L599 563L615 557L632 555L649 550L665 546L682 545L699 546L716 543L732 543L749 542L766 544L782 539L799 536L816 536L832 536L849 535L866 532L882 531L899 525L916 525L932 519L949 517L966 514L983 509L999 505L1016 501L1033 497L1049 492L1066 489L1083 483L1099 478L1116 470L1133 466L1149 462L1166 457L1183 454L1199 449L1216 444L1233 440L1249 436L1266 432L1283 429L1300 427L1316 427L1333 425L1350 419L1366 418L1383 418L1400 414L1416 411L1433 405L1450 405L1466 402L1483 402L1500 399L1516 394L1533 392L1550 390L1567 389L1583 388L1600 384L1617 382L1633 381L1650 380L1667 376L1683 376L1700 384L1717 391"/>
<path stroke="#ffb878" d="M532 724L549 723L565 724L582 725L599 728L615 728L632 731L649 734L665 733L682 732L699 730L716 725L732 718L749 714L766 712L782 714L799 704L816 692L832 684L849 682L866 678L882 676L899 668L916 665L932 661L949 655L966 653L983 657L999 653L1016 651L1033 650L1049 645L1066 638L1083 634L1099 636L1116 634L1133 623L1149 625L1166 626L1183 625L1199 624L1216 624L1233 628L1249 625L1266 633L1283 629L1300 627L1316 627L1333 626L1350 622L1366 622L1383 614L1400 610L1416 601L1433 593L1450 589L1466 578L1483 568L1500 555L1516 543L1533 535L1550 525L1567 520L1583 509L1600 497L1617 486L1633 473L1650 465L1667 460L1683 452L1700 453L1717 469"/>
<path stroke="#d99fca" d="M532 960L549 953L565 953L582 947L599 943L615 935L632 926L649 921L665 915L682 912L699 916L716 910L732 902L749 894L766 891L782 882L799 885L816 877L832 874L849 871L866 867L882 857L899 858L916 850L932 846L949 843L966 840L983 840L999 836L1016 828L1033 821L1049 818L1066 808L1083 806L1099 802L1116 792L1133 791L1149 786L1166 778L1183 768L1199 761L1216 766L1233 759L1249 760L1266 755L1283 755L1300 753L1316 757L1333 748L1350 748L1366 740L1383 736L1400 731L1416 736L1433 736L1450 729L1466 726L1483 723L1500 714L1516 714L1533 717L1550 710L1567 705L1583 694L1600 681L1617 671L1633 660L1650 647L1667 633L1683 616L1700 631L1717 649"/>
<path stroke="#de5f92" d="M532 865L549 871L565 856L582 860L599 863L615 863L632 848L649 847L665 838L682 826L699 822L716 822L732 818L749 807L766 804L782 795L799 789L816 780L832 779L849 764L866 765L882 753L899 739L916 728L932 722L949 722L966 697L983 690L999 678L1016 663L1033 648L1049 638L1066 618L1083 602L1099 588L1116 590L1133 568L1149 554L1166 539L1183 528L1199 524L1216 497L1233 504L1249 500L1266 493L1283 485L1300 484L1316 475L1333 470L1350 465L1366 473L1383 471L1400 472L1416 468L1433 464L1450 457L1466 450L1483 457L1500 443L1516 433L1533 450L1550 449L1567 442L1583 438L1600 427L1617 420L1633 421L1650 418L1667 422L1683 427L1700 430L1717 455"/>
<path stroke="#ffb878" d="M532 559L549 558L565 556L582 557L599 553L615 554L632 550L649 547L665 545L682 545L699 546L716 542L732 540L749 535L766 532L782 530L799 525L816 522L832 519L849 514L866 509L882 507L899 503L916 498L932 494L949 486L966 478L983 472L999 467L1016 462L1033 455L1049 450L1066 447L1083 443L1099 437L1116 433L1133 433L1149 428L1166 427L1183 422L1199 419L1216 418L1233 417L1249 414L1266 409L1283 407L1300 404L1316 401L1333 398L1350 394L1366 388L1383 390L1400 386L1416 385L1433 382L1450 382L1466 378L1483 374L1500 371L1516 371L1533 368L1550 367L1567 365L1583 362L1600 359L1617 358L1633 356L1650 353L1667 350L1683 347L1700 364L1717 379"/>
<path stroke="#fdb3cc" d="M532 600L549 597L565 595L582 594L599 593L615 591L632 587L649 586L665 581L682 580L699 578L716 572L732 569L749 566L766 564L782 557L799 553L816 552L832 550L849 549L866 544L882 537L899 533L916 528L932 524L949 522L966 517L983 515L999 510L1016 505L1033 500L1049 495L1066 492L1083 487L1099 482L1116 481L1133 479L1149 473L1166 465L1183 458L1199 451L1216 446L1233 440L1249 432L1266 429L1283 425L1300 422L1316 416L1333 410L1350 406L1366 401L1383 398L1400 394L1416 388L1433 387L1450 385L1466 380L1483 376L1500 373L1516 368L1533 365L1550 362L1567 360L1583 356L1600 359L1617 359L1633 355L1650 353L1667 352L1683 351L1700 366L1717 365"/>
<path stroke="#1f9690" d="M532 960L549 956L565 950L582 936L599 929L615 919L632 917L649 912L665 910L682 904L699 899L716 887L732 884L749 872L766 869L782 856L799 853L816 850L832 844L849 840L866 838L882 829L899 822L916 814L932 815L949 807L966 811L983 805L999 802L1016 800L1033 794L1049 794L1066 791L1083 790L1099 781L1116 772L1133 768L1149 763L1166 761L1183 752L1199 744L1216 745L1233 747L1249 739L1266 741L1283 736L1300 729L1316 732L1333 728L1350 722L1366 716L1383 706L1400 705L1416 699L1433 694L1450 685L1466 681L1483 677L1500 679L1516 674L1533 672L1550 661L1567 658L1583 651L1600 641L1617 635L1633 621L1650 608L1667 600L1683 586L1700 594L1717 615"/>
<path stroke="#b674a1" d="M532 797L549 792L565 787L582 791L599 784L615 781L632 782L649 775L665 776L682 780L699 777L716 775L732 775L749 774L766 766L782 760L799 753L816 745L832 739L849 735L866 737L882 729L899 724L916 714L932 707L949 703L966 699L983 683L999 676L1016 669L1033 658L1049 656L1066 653L1083 646L1099 646L1116 645L1133 640L1149 635L1166 636L1183 634L1199 631L1216 624L1233 617L1249 617L1266 613L1283 615L1300 612L1316 613L1333 608L1350 603L1366 601L1383 603L1400 601L1416 595L1433 594L1450 590L1466 587L1483 587L1500 578L1516 581L1533 578L1550 568L1567 556L1583 543L1600 535L1617 530L1633 520L1650 509L1667 503L1683 496L1700 503L1717 515"/>
<path stroke="#97caea" d="M532 930L549 925L565 927L582 918L599 907L615 910L632 909L649 908L665 905L682 900L699 900L716 897L732 899L749 891L766 885L782 892L799 884L816 883L832 872L849 876L866 871L882 863L899 861L916 851L932 847L949 847L966 841L983 834L999 828L1016 817L1033 805L1049 795L1066 789L1083 779L1099 772L1116 769L1133 762L1149 763L1166 760L1183 752L1199 750L1216 746L1233 738L1249 738L1266 734L1283 737L1300 730L1316 734L1333 736L1350 733L1366 734L1383 727L1400 726L1416 730L1433 723L1450 716L1466 712L1483 711L1500 705L1516 700L1533 697L1550 683L1567 670L1583 654L1600 645L1617 635L1633 621L1650 613L1667 607L1683 601L1700 588L1717 605"/>
<path stroke="#ff8700" d="M532 991L549 985L565 981L582 970L599 968L615 967L632 964L649 957L665 957L682 954L699 945L716 937L732 932L749 924L766 916L782 916L799 914L816 914L832 910L849 906L866 901L882 888L899 878L916 873L932 871L949 859L966 853L983 850L999 845L1016 841L1033 835L1049 836L1066 832L1083 827L1099 826L1116 830L1133 825L1149 824L1166 819L1183 810L1199 805L1216 801L1233 799L1249 800L1266 800L1283 800L1300 795L1316 789L1333 783L1350 770L1366 768L1383 758L1400 753L1416 747L1433 744L1450 737L1466 732L1483 728L1500 719L1516 714L1533 708L1550 694L1567 681L1583 662L1600 652L1617 638L1633 628L1650 617L1667 602L1683 596L1700 607L1717 612"/>
<path stroke="#fdb3cc" d="M532 965L549 962L565 955L582 952L599 959L615 964L632 965L649 962L665 964L682 958L699 957L716 952L732 956L749 945L766 947L782 937L799 941L816 940L832 940L849 937L866 939L882 939L899 935L916 928L932 923L949 920L966 918L983 902L999 896L1016 883L1033 883L1049 875L1066 879L1083 876L1099 871L1116 870L1133 862L1149 849L1166 845L1183 836L1199 833L1216 835L1233 842L1249 844L1266 845L1283 839L1300 840L1316 850L1333 853L1350 848L1366 842L1383 829L1400 823L1416 824L1433 810L1450 803L1466 801L1483 790L1500 784L1516 779L1533 777L1550 759L1567 745L1583 733L1600 716L1617 698L1633 678L1650 660L1667 639L1683 616L1700 615L1717 622"/>
<path stroke="#f24058" d="M532 534L549 533L565 531L582 530L599 533L615 532L632 529L649 525L665 523L682 518L699 516L716 513L732 509L749 506L766 501L782 499L799 497L816 493L832 490L849 488L866 485L882 481L899 477L916 472L932 470L949 469L966 466L983 463L999 456L1016 451L1033 449L1049 447L1066 445L1083 442L1099 441L1116 438L1133 436L1149 436L1166 434L1183 430L1199 425L1216 422L1233 419L1249 414L1266 407L1283 403L1300 401L1316 399L1333 394L1350 392L1366 390L1383 390L1400 388L1416 383L1433 380L1450 377L1466 373L1483 371L1500 365L1516 361L1533 356L1550 353L1567 348L1583 346L1600 341L1617 336L1633 333L1650 329L1667 324L1683 323L1700 332L1717 336"/>
<path stroke="#b674a1" d="M532 553L549 550L565 547L582 547L599 544L615 543L632 537L649 537L665 533L682 530L699 527L716 525L732 525L749 520L766 518L782 518L799 516L816 513L832 511L849 512L866 510L882 509L899 505L916 504L932 504L949 504L966 501L983 499L999 497L1016 495L1033 490L1049 486L1066 484L1083 478L1099 474L1116 468L1133 465L1149 462L1166 456L1183 450L1199 447L1216 442L1233 435L1249 429L1266 426L1283 423L1300 417L1316 407L1333 405L1350 404L1366 400L1383 396L1400 393L1416 389L1433 387L1450 385L1466 381L1483 379L1500 378L1516 374L1533 369L1550 367L1567 365L1583 364L1600 362L1617 361L1633 357L1650 355L1667 351L1683 351L1700 362L1717 376"/>
<path stroke="#ff9191" d="M532 910L549 902L565 895L582 889L599 884L615 879L632 873L649 872L665 863L682 851L699 837L716 828L732 818L749 817L766 808L782 800L799 790L816 774L832 772L849 767L866 757L882 741L899 735L916 720L932 711L949 706L966 704L983 696L999 685L1016 678L1033 672L1049 670L1066 665L1083 658L1099 652L1116 640L1133 634L1149 625L1166 619L1183 615L1199 607L1216 599L1233 590L1249 584L1266 577L1283 577L1300 569L1316 557L1333 553L1350 544L1366 535L1383 520L1400 514L1416 511L1433 503L1450 493L1466 483L1483 478L1500 472L1516 465L1533 462L1550 458L1567 458L1583 453L1600 456L1617 461L1633 459L1650 457L1667 446L1683 444L1700 457L1717 443"/>
<path stroke="#ff9191" d="M532 578L549 582L565 585L582 580L599 580L615 578L632 579L649 579L665 579L682 574L699 576L716 573L732 573L749 563L766 562L782 560L799 557L816 552L832 548L849 542L866 536L882 529L899 533L916 538L932 529L949 524L966 519L983 523L999 517L1016 517L1033 511L1049 508L1066 504L1083 494L1099 497L1116 492L1133 488L1149 488L1166 484L1183 488L1199 484L1216 485L1233 477L1249 481L1266 483L1283 481L1300 469L1316 476L1333 472L1350 464L1366 456L1383 458L1400 457L1416 451L1433 443L1450 439L1466 448L1483 427L1500 432L1516 431L1533 416L1550 411L1567 410L1583 401L1600 391L1617 383L1633 385L1650 377L1667 378L1683 364L1700 373L1717 399"/>
<path stroke="#38a14a" d="M532 864L549 860L565 862L582 867L599 860L615 862L632 861L649 860L665 862L682 854L699 855L716 847L732 845L749 835L766 830L782 827L799 824L816 819L832 813L849 804L866 802L882 797L899 791L916 780L932 767L949 749L966 734L983 719L999 702L1016 690L1033 675L1049 674L1066 668L1083 659L1099 651L1116 641L1133 633L1149 623L1166 621L1183 608L1199 594L1216 593L1233 581L1249 580L1266 573L1283 565L1300 561L1316 558L1333 555L1350 551L1366 539L1383 532L1400 526L1416 518L1433 511L1450 513L1466 505L1483 494L1500 495L1516 484L1533 481L1550 473L1567 464L1583 461L1600 458L1617 453L1633 439L1650 435L1667 428L1683 424L1700 423L1717 421"/>
<path stroke="#ffb878" d="M532 500L549 497L565 496L582 493L599 492L615 489L632 487L649 486L665 488L682 488L699 486L716 484L732 481L749 481L766 480L782 477L799 477L816 479L832 476L849 471L866 468L882 467L899 466L916 463L932 457L949 453L966 451L983 446L999 444L1016 439L1033 438L1049 436L1066 432L1083 427L1099 423L1116 420L1133 420L1149 417L1166 415L1183 412L1199 407L1216 404L1233 399L1249 396L1266 393L1283 389L1300 385L1316 381L1333 378L1350 375L1366 374L1383 369L1400 364L1416 362L1433 361L1450 360L1466 357L1483 354L1500 348L1516 346L1533 345L1550 346L1567 341L1583 339L1600 338L1617 335L1633 335L1650 327L1667 323L1683 321L1700 322L1717 317"/>
<path stroke="#ff8700" d="M532 880L549 876L565 870L582 867L599 867L615 862L632 861L649 856L665 851L682 846L699 843L716 837L732 830L749 826L766 822L782 816L799 809L816 803L832 792L849 788L866 782L882 779L899 771L916 771L932 764L949 758L966 751L983 752L999 749L1016 743L1033 746L1049 751L1066 748L1083 741L1099 741L1116 742L1133 735L1149 732L1166 735L1183 732L1199 727L1216 722L1233 725L1249 729L1266 726L1283 725L1300 724L1316 723L1333 718L1350 715L1366 712L1383 698L1400 699L1416 694L1433 686L1450 685L1466 671L1483 667L1500 662L1516 657L1533 650L1550 637L1567 621L1583 611L1600 598L1617 590L1633 584L1650 576L1667 562L1683 561L1700 573L1717 580"/>
<path stroke="#78bcb4" d="M532 846L549 845L565 841L582 835L599 832L615 829L632 830L649 826L665 825L682 825L699 817L716 810L732 803L749 799L766 793L782 787L799 782L816 777L832 769L849 767L866 763L882 756L899 747L916 737L932 730L949 725L966 714L983 708L999 702L1016 697L1033 694L1049 690L1066 689L1083 685L1099 684L1116 676L1133 669L1149 672L1166 664L1183 660L1199 655L1216 652L1233 648L1249 642L1266 650L1283 648L1300 647L1316 649L1333 642L1350 638L1366 638L1383 628L1400 619L1416 613L1433 608L1450 604L1466 596L1483 593L1500 585L1516 582L1533 572L1550 565L1567 560L1583 550L1600 541L1617 526L1633 519L1650 508L1667 507L1683 506L1700 513L1717 510"/>
<path stroke="#ff9191" d="M532 672L549 663L565 677L582 675L599 688L615 690L632 689L649 683L665 681L682 684L699 693L716 690L732 678L749 686L766 670L782 678L799 654L816 653L832 653L849 658L866 646L882 634L899 635L916 637L932 623L949 618L966 600L983 587L999 581L1016 579L1033 565L1049 557L1066 551L1083 549L1099 541L1116 528L1133 530L1149 530L1166 524L1183 515L1199 504L1216 518L1233 512L1249 504L1266 500L1283 515L1300 483L1316 491L1333 502L1350 482L1366 484L1383 489L1400 500L1416 490L1433 493L1450 477L1466 474L1483 468L1500 475L1516 467L1533 456L1550 439L1567 456L1583 458L1600 451L1617 445L1633 446L1650 428L1667 431L1683 432L1700 437L1717 411"/>
<path stroke="#7b706f" d="M532 601L549 594L565 580L582 586L599 587L615 582L632 590L649 589L665 586L682 582L699 578L716 585L732 579L749 573L766 575L782 580L799 573L816 574L832 575L849 559L866 548L882 553L899 540L916 528L932 529L949 528L966 520L983 513L999 501L1016 489L1033 477L1049 490L1066 477L1083 460L1099 451L1116 458L1133 444L1149 435L1166 438L1183 431L1199 438L1216 429L1233 431L1249 423L1266 422L1283 417L1300 421L1316 414L1333 407L1350 413L1366 408L1383 409L1400 407L1416 402L1433 397L1450 398L1466 407L1483 404L1500 413L1516 409L1533 399L1550 401L1567 394L1583 392L1600 397L1617 385L1633 393L1650 377L1667 387L1683 379L1700 383L1717 373"/>
<path stroke="#9e7059" d="M532 1023L549 1023L565 1022L582 1028L599 1026L615 1020L632 1023L649 1023L665 1022L682 1018L699 1008L716 1004L732 997L749 990L766 987L782 981L799 970L816 954L832 946L849 932L866 929L882 915L899 913L916 906L932 906L949 893L966 892L983 888L999 884L1016 887L1033 878L1049 872L1066 870L1083 869L1099 863L1116 857L1133 860L1149 863L1166 860L1183 853L1199 848L1216 845L1233 837L1249 835L1266 834L1283 834L1300 833L1316 829L1333 829L1350 832L1366 822L1383 804L1400 804L1416 796L1433 788L1450 783L1466 770L1483 752L1500 744L1516 733L1533 726L1550 718L1567 705L1583 694L1600 679L1617 659L1633 648L1650 634L1667 629L1683 619L1700 640L1717 643"/>
<path stroke="#78d47a" d="M532 732L549 728L565 724L582 725L599 724L615 726L632 724L649 724L665 720L682 716L699 712L716 713L732 709L749 709L766 703L782 703L799 706L816 705L832 701L849 695L866 685L882 680L899 676L916 676L932 673L949 670L966 666L983 661L999 658L1016 650L1033 645L1049 646L1066 647L1083 646L1099 645L1116 637L1133 633L1149 626L1166 617L1183 610L1199 604L1216 602L1233 596L1249 589L1266 586L1283 587L1300 583L1316 580L1333 576L1350 578L1366 577L1383 577L1400 572L1416 572L1433 567L1450 559L1466 555L1483 554L1500 553L1516 551L1533 545L1550 539L1567 534L1583 519L1600 511L1617 504L1633 497L1650 493L1667 488L1683 481L1700 485L1717 484"/>
<path stroke="#7b706f" d="M532 701L549 697L565 698L582 690L599 690L615 685L632 682L649 680L665 680L682 680L699 680L716 677L732 671L749 672L766 674L782 674L799 676L816 675L832 678L849 681L866 683L882 685L899 681L916 679L932 677L949 679L966 673L983 669L999 669L1016 664L1033 658L1049 652L1066 643L1083 635L1099 632L1116 628L1133 622L1149 615L1166 614L1183 610L1199 600L1216 594L1233 587L1249 578L1266 571L1283 570L1300 559L1316 555L1333 550L1350 543L1366 534L1383 529L1400 528L1416 527L1433 526L1450 522L1466 514L1483 514L1500 514L1516 510L1533 510L1550 504L1567 499L1583 495L1600 491L1617 488L1633 486L1650 479L1667 475L1683 470L1700 474L1717 475"/>
<path stroke="#b9adaa" d="M532 885L549 881L565 886L582 891L599 889L615 890L632 886L649 875L665 870L682 864L699 854L716 848L732 845L749 847L766 846L782 845L799 837L816 826L832 818L849 808L866 804L882 799L899 798L916 789L932 776L949 769L966 763L983 756L999 749L1016 739L1033 727L1049 723L1066 717L1083 709L1099 707L1116 704L1133 700L1149 699L1166 695L1183 692L1199 686L1216 684L1233 679L1249 671L1266 669L1283 665L1300 658L1316 656L1333 652L1350 646L1366 639L1383 635L1400 624L1416 616L1433 616L1450 596L1466 586L1483 574L1500 565L1516 559L1533 542L1550 531L1567 520L1583 514L1600 503L1617 499L1633 488L1650 477L1667 466L1683 456L1700 473L1717 473"/>
<path stroke="#fdb3cc" d="M532 718L549 717L565 715L582 711L599 706L615 699L632 691L649 683L665 681L682 678L699 672L716 664L732 659L749 652L766 646L782 638L799 634L816 631L832 626L849 620L866 619L882 615L899 613L916 612L932 602L949 601L966 599L983 596L999 595L1016 592L1033 588L1049 584L1066 581L1083 580L1099 575L1116 568L1133 560L1149 555L1166 550L1183 546L1199 537L1216 533L1233 529L1249 523L1266 518L1283 512L1300 504L1316 495L1333 488L1350 482L1366 481L1383 470L1400 464L1416 458L1433 455L1450 452L1466 449L1483 447L1500 445L1516 440L1533 435L1550 434L1567 433L1583 430L1600 430L1617 428L1633 429L1650 425L1667 426L1683 424L1700 423L1717 441"/>
<path stroke="#b9adaa" d="M532 597L549 596L565 594L582 595L599 592L615 592L632 594L649 591L665 587L682 585L699 584L716 581L732 583L749 578L766 575L782 572L799 567L816 568L832 566L849 563L866 560L882 559L899 557L916 552L932 551L949 548L966 548L983 544L999 540L1016 535L1033 532L1049 524L1066 523L1083 520L1099 518L1116 514L1133 514L1149 512L1166 506L1183 501L1199 495L1216 493L1233 489L1249 486L1266 483L1283 483L1300 480L1316 477L1333 471L1350 468L1366 464L1383 459L1400 458L1416 452L1433 449L1450 446L1466 442L1483 437L1500 437L1516 428L1533 425L1550 424L1567 418L1583 413L1600 405L1617 403L1633 398L1650 397L1667 389L1683 386L1700 385L1717 390"/>
<path stroke="#4475a8" d="M532 676L549 673L565 672L582 670L599 668L615 668L632 668L649 666L665 664L682 667L699 670L716 671L732 669L749 672L766 672L782 670L799 668L816 669L832 669L849 667L866 666L882 662L899 658L916 653L932 652L949 646L966 642L983 639L999 636L1016 631L1033 627L1049 626L1066 621L1083 613L1099 602L1116 600L1133 597L1149 593L1166 590L1183 588L1199 589L1216 586L1233 583L1249 576L1266 572L1283 570L1300 570L1316 564L1333 566L1350 561L1366 557L1383 554L1400 553L1416 551L1433 548L1450 548L1466 546L1483 543L1500 541L1516 540L1533 539L1550 532L1567 528L1583 527L1600 521L1617 517L1633 512L1650 503L1667 492L1683 488L1700 495L1717 499"/>
<path stroke="#9e7059" d="M532 759L549 751L565 746L582 736L599 736L615 725L632 727L649 723L665 716L682 715L699 714L716 709L732 705L749 702L766 691L782 687L799 686L816 685L832 684L849 681L866 680L882 678L899 677L916 676L932 675L949 670L966 671L983 665L999 660L1016 656L1033 662L1049 653L1066 655L1083 656L1099 652L1116 653L1133 649L1149 648L1166 641L1183 638L1199 630L1216 629L1233 625L1249 621L1266 617L1283 612L1300 606L1316 600L1333 597L1350 591L1366 586L1383 578L1400 574L1416 567L1433 562L1450 558L1466 553L1483 548L1500 541L1516 539L1533 537L1550 532L1567 533L1583 524L1600 520L1617 511L1633 507L1650 502L1667 499L1683 494L1700 491L1717 498"/>
<path stroke="#ffb878" d="M532 692L549 687L565 687L582 685L599 682L615 674L632 670L649 667L665 661L682 655L699 648L716 646L732 638L749 632L766 627L782 621L799 617L816 614L832 610L849 606L866 600L882 599L899 596L916 589L932 587L949 582L966 577L983 572L999 567L1016 562L1033 556L1049 549L1066 541L1083 540L1099 533L1116 529L1133 525L1149 521L1166 516L1183 515L1199 508L1216 504L1233 498L1249 493L1266 488L1283 484L1300 477L1316 470L1333 468L1350 454L1366 449L1383 441L1400 439L1416 432L1433 429L1450 422L1466 413L1483 410L1500 406L1516 403L1533 401L1550 399L1567 391L1583 388L1600 382L1617 382L1633 376L1650 378L1667 375L1683 376L1700 386L1717 381"/>
<path stroke="#1f9690" d="M532 896L549 893L565 890L582 886L599 885L615 880L632 874L649 869L665 860L682 859L699 857L716 841L732 839L749 834L766 831L782 827L799 818L816 809L832 803L849 794L866 789L882 786L899 774L916 764L932 758L949 750L966 754L983 744L999 739L1016 728L1033 732L1049 729L1066 729L1083 724L1099 718L1116 717L1133 709L1149 706L1166 703L1183 701L1199 705L1216 698L1233 695L1249 690L1266 686L1283 685L1300 679L1316 673L1333 673L1350 663L1366 660L1383 649L1400 640L1416 634L1433 631L1450 623L1466 614L1483 609L1500 597L1516 595L1533 594L1550 596L1567 589L1583 584L1600 568L1617 552L1633 546L1650 539L1667 538L1683 531L1700 533L1717 551"/>
<path stroke="#fdb3cc" d="M532 992L549 987L565 981L582 981L599 981L615 976L632 977L649 977L665 979L682 978L699 978L716 982L732 974L749 970L766 975L782 979L799 978L816 969L832 958L849 953L866 953L882 945L899 934L916 936L932 929L949 927L966 916L983 905L999 896L1016 884L1033 878L1049 872L1066 863L1083 858L1099 848L1116 837L1133 828L1149 819L1166 804L1183 794L1199 783L1216 781L1233 782L1249 783L1266 784L1283 782L1300 785L1316 786L1333 783L1350 789L1366 781L1383 785L1400 782L1416 775L1433 772L1450 779L1466 769L1483 763L1500 755L1516 755L1533 751L1550 734L1567 724L1583 710L1600 699L1617 685L1633 681L1650 665L1667 650L1683 637L1700 647L1717 653"/>
<path stroke="#ff8700" d="M532 647L549 640L565 636L582 635L599 624L615 616L632 612L649 609L665 606L682 599L699 594L716 590L732 584L749 583L766 584L782 581L799 579L816 578L832 576L849 579L866 575L882 579L899 577L916 576L932 574L949 574L966 576L983 577L999 580L1016 580L1033 580L1049 583L1066 576L1083 577L1099 575L1116 571L1133 570L1149 570L1166 570L1183 569L1199 567L1216 564L1233 558L1249 554L1266 546L1283 542L1300 537L1316 540L1333 535L1350 529L1366 527L1383 521L1400 517L1416 511L1433 506L1450 501L1466 496L1483 490L1500 485L1516 616L1533 477L1550 474L1567 470L1583 464L1600 458L1617 451L1633 450L1650 448L1667 445L1683 443L1700 453L1717 472"/>
<path stroke="#f4cc5a" d="M532 560L549 563L565 562L582 560L599 554L615 554L632 550L649 545L665 541L682 544L699 540L716 538L732 534L749 532L766 531L782 529L799 523L816 520L832 518L849 515L866 511L882 507L899 504L916 502L932 499L949 497L966 494L983 493L999 491L1016 485L1033 483L1049 482L1066 478L1083 471L1099 466L1116 463L1133 462L1149 459L1166 457L1183 454L1199 449L1216 448L1233 445L1249 441L1266 437L1283 435L1300 432L1316 429L1333 426L1350 420L1366 416L1383 517L1400 411L1416 407L1433 404L1450 399L1466 400L1483 398L1500 391L1516 383L1533 375L1550 374L1567 371L1583 367L1600 366L1617 361L1633 360L1650 357L1667 357L1683 354L1700 357L1717 356"/>
<path stroke="#9e7059" d="M532 564L549 559L565 557L582 557L599 553L615 550L632 547L649 543L665 540L682 539L699 536L716 533L732 531L749 527L766 525L782 522L799 523L816 521L832 522L849 522L866 524L882 521L899 520L916 518L932 514L949 512L966 508L983 614L999 502L1016 499L1033 498L1049 491L1066 485L1083 476L1099 474L1116 471L1133 463L1149 460L1166 455L1183 450L1199 448L1216 442L1233 439L1249 435L1266 432L1283 431L1300 428L1316 426L1333 421L1350 417L1366 415L1383 412L1400 410L1416 407L1433 403L1450 403L1466 400L1483 398L1500 398L1516 392L1533 391L1550 389L1567 387L1583 387L1600 385L1617 383L1633 381L1650 380L1667 377L1683 370L1700 369L1717 365"/>
<path stroke="#f4cc5a" d="M532 1029L549 1026L565 1029L582 1018L599 1010L615 1009L632 1005L649 993L665 992L682 990L699 993L716 993L732 989L749 984L766 980L782 979L799 978L816 970L832 964L849 958L866 955L882 950L899 945L916 937L932 930L949 934L966 921L983 916L999 911L1016 905L1033 898L1049 892L1066 884L1083 881L1099 880L1116 871L1133 868L1149 867L1166 864L1183 860L1199 856L1216 846L1233 844L1249 838L1266 840L1283 838L1300 829L1316 822L1333 826L1350 819L1366 828L1383 826L1400 816L1416 815L1433 808L1450 801L1466 800L1483 794L1500 785L1516 786L1533 791L1550 780L1567 766L1583 751L1600 734L1617 719L1633 701L1650 689L1667 675L1683 652L1700 662L1717 690"/>
<path stroke="#9e7059" d="M532 607L549 608L565 609L582 607L599 606L615 607L632 606L649 607L665 607L682 607L699 604L716 605L732 603L749 601L766 602L782 602L799 599L816 598L832 594L849 596L866 593L882 589L899 584L916 581L932 575L949 573L966 565L983 563L999 560L1016 558L1033 552L1049 549L1066 542L1083 536L1099 533L1116 529L1133 529L1149 526L1166 522L1183 521L1199 518L1216 517L1233 515L1249 510L1266 511L1283 514L1300 512L1316 509L1333 513L1350 512L1366 511L1383 511L1400 506L1416 502L1433 496L1450 491L1466 486L1483 483L1500 479L1516 475L1533 471L1550 468L1567 463L1583 464L1600 459L1617 455L1633 451L1650 446L1667 437L1683 428L1700 444L1717 466"/>
<path stroke="#ff8700" d="M532 628L549 622L565 622L582 623L599 622L615 618L632 617L649 612L665 611L682 609L699 606L716 601L732 594L749 591L766 589L782 586L799 585L816 577L832 575L849 569L866 567L882 566L899 562L916 557L932 551L949 551L966 548L983 546L999 541L1016 539L1033 537L1049 533L1066 526L1083 526L1099 527L1116 523L1133 524L1149 526L1166 522L1183 519L1199 514L1216 511L1233 508L1249 505L1266 502L1283 498L1300 496L1316 491L1333 488L1350 482L1366 479L1383 475L1400 473L1416 470L1433 464L1450 460L1466 452L1483 449L1500 442L1516 440L1533 433L1550 432L1567 425L1583 424L1600 412L1617 405L1633 402L1650 397L1667 397L1683 394L1700 409L1717 418"/>
<path stroke="#dab1a0" d="M532 557L549 557L565 556L582 555L599 555L615 554L632 552L649 551L665 549L682 547L699 545L716 543L732 540L749 536L766 534L782 533L799 530L816 527L832 524L849 523L866 523L882 520L899 518L916 518L932 515L949 512L966 508L983 508L999 506L1016 502L1033 499L1049 494L1066 489L1083 485L1099 480L1116 480L1133 480L1149 481L1166 477L1183 475L1199 475L1216 470L1233 468L1249 464L1266 463L1283 461L1300 459L1316 456L1333 455L1350 448L1366 442L1383 438L1400 433L1416 427L1433 421L1450 417L1466 413L1483 413L1500 408L1516 403L1533 400L1550 397L1567 396L1583 395L1600 390L1617 388L1633 384L1650 384L1667 381L1683 376L1700 394L1717 401"/>
<path stroke="#ff9191" d="M532 621L549 620L565 617L582 617L599 619L615 618L632 616L649 619L665 623L682 619L699 616L716 615L732 612L749 610L766 602L782 606L799 606L816 605L832 603L849 599L866 598L882 593L899 586L916 577L932 575L949 574L966 567L983 560L999 556L1016 554L1033 550L1049 543L1066 541L1083 535L1099 532L1116 527L1133 524L1149 517L1166 512L1183 510L1199 507L1216 502L1233 500L1249 501L1266 506L1283 507L1300 503L1316 504L1333 505L1350 505L1366 505L1383 503L1400 498L1416 496L1433 495L1450 492L1466 489L1483 486L1500 487L1516 484L1533 480L1550 477L1567 476L1583 474L1600 470L1617 468L1633 460L1650 453L1667 449L1683 444L1700 441L1717 430"/>
<path stroke="#ff8700" d="M532 517L549 515L565 517L582 514L599 513L615 511L632 512L649 515L665 514L682 516L699 515L716 516L732 515L749 514L766 511L782 509L799 509L816 508L832 504L849 502L866 502L882 500L899 497L916 493L932 490L949 486L966 480L983 479L999 477L1016 476L1033 474L1049 469L1066 464L1083 457L1099 457L1116 454L1133 448L1149 442L1166 438L1183 433L1199 430L1216 427L1233 425L1249 421L1266 418L1283 415L1300 411L1316 410L1333 409L1350 406L1366 404L1383 402L1400 397L1416 395L1433 394L1450 390L1466 384L1483 384L1500 384L1516 381L1533 379L1550 374L1567 371L1583 369L1600 366L1617 365L1633 363L1650 359L1667 352L1683 353L1700 359L1717 377"/>
<path stroke="#b674a1" d="M532 860L549 854L565 848L582 841L599 839L615 826L632 822L649 816L665 809L682 796L699 790L716 787L732 779L749 771L766 775L782 774L799 772L816 768L832 765L849 760L866 758L882 753L899 754L916 748L932 749L949 743L966 891L983 730L999 728L1016 726L1033 720L1049 717L1066 712L1083 706L1099 702L1116 703L1133 698L1149 687L1166 682L1183 680L1199 667L1216 660L1233 651L1249 642L1266 642L1283 635L1300 627L1316 621L1333 617L1350 611L1366 615L1383 614L1400 617L1416 617L1433 614L1450 615L1466 613L1483 615L1500 610L1516 609L1533 609L1550 606L1567 603L1583 595L1600 589L1617 579L1633 570L1650 562L1667 558L1683 548L1700 560L1717 588"/>
<path stroke="#de5f92" d="M532 540L549 537L565 534L582 534L599 530L615 531L632 529L649 528L665 524L682 524L699 522L716 525L732 523L749 519L766 517L782 514L799 511L816 509L832 508L849 502L866 498L882 491L899 487L916 482L932 480L949 478L966 476L983 474L999 471L1016 467L1033 464L1049 460L1066 454L1083 449L1099 447L1116 442L1133 438L1149 438L1166 438L1183 436L1199 433L1216 429L1233 427L1249 421L1266 418L1283 414L1300 412L1316 409L1333 406L1350 404L1366 397L1383 398L1400 398L1416 394L1433 393L1450 391L1466 478L1483 382L1500 377L1516 374L1533 372L1550 369L1567 363L1583 360L1600 358L1617 358L1633 356L1650 353L1667 351L1683 346L1700 339L1717 356"/>
<path stroke="#4475a8" d="M532 687L549 689L565 690L582 685L599 692L615 684L632 684L649 678L665 686L682 681L699 667L716 663L732 660L749 670L766 660L782 663L799 655L816 645L832 639L849 639L866 631L882 627L899 604L916 614L932 611L949 611L966 601L983 586L999 576L1016 573L1033 565L1049 569L1066 559L1083 557L1099 545L1116 549L1133 533L1149 530L1166 533L1183 521L1199 513L1216 514L1233 507L1249 513L1266 515L1283 516L1300 506L1316 503L1333 513L1350 500L1366 508L1383 508L1400 502L1416 501L1433 489L1450 489L1466 471L1483 469L1500 465L1516 464L1533 460L1550 453L1567 446L1583 455L1600 441L1617 439L1633 444L1650 433L1667 429L1683 429L1700 425L1717 437"/>
<path stroke="#7b706f" d="M532 525L549 522L565 522L582 522L599 521L615 521L632 519L649 515L665 510L682 508L699 506L716 504L732 500L749 497L766 496L782 492L799 487L816 483L832 479L849 476L866 474L882 472L899 469L916 465L932 462L949 458L966 455L983 449L999 445L1016 443L1033 438L1049 433L1066 433L1083 432L1099 429L1116 425L1133 423L1149 418L1166 418L1183 415L1199 412L1216 411L1233 412L1249 410L1266 407L1283 406L1300 404L1316 401L1333 398L1350 396L1366 392L1383 389L1400 389L1416 387L1433 385L1450 380L1466 376L1483 373L1500 371L1516 369L1533 366L1550 361L1567 359L1583 358L1600 354L1617 350L1633 347L1650 346L1667 341L1683 337L1700 348L1717 351"/>
<path stroke="#97caea" d="M532 1025L549 1019L565 1019L582 1015L599 1017L615 1020L632 1015L649 1008L665 1009L682 1002L699 1006L716 999L732 991L749 983L766 973L782 977L799 973L816 959L832 950L849 947L866 940L882 927L899 916L916 906L932 895L949 894L966 883L983 878L999 872L1016 865L1033 863L1049 860L1066 860L1083 859L1099 865L1116 864L1133 857L1149 851L1166 847L1183 840L1199 835L1216 838L1233 841L1249 845L1266 847L1283 840L1300 846L1316 852L1333 844L1350 853L1366 852L1383 839L1400 837L1416 831L1433 823L1450 815L1466 810L1483 798L1500 795L1516 788L1533 781L1550 876L1567 756L1583 747L1600 737L1617 716L1633 712L1650 698L1667 691L1683 679L1700 701L1717 714"/>
<path stroke="#b69619" d="M532 746L549 741L565 736L582 731L599 726L615 720L632 722L649 717L665 715L682 715L699 708L716 701L732 695L749 692L766 687L782 684L799 678L816 670L832 662L849 658L866 652L882 647L899 640L916 634L932 626L949 617L966 610L983 597L999 587L1016 578L1033 570L1049 559L1066 554L1083 539L1099 531L1116 523L1133 511L1149 499L1166 488L1183 479L1199 466L1216 457L1233 454L1249 446L1266 442L1283 437L1300 432L1316 422L1333 416L1350 409L1366 408L1383 402L1400 401L1416 399L1433 395L1450 396L1466 393L1483 390L1500 388L1516 383L1533 385L1550 387L1567 386L1583 389L1600 388L1617 389L1633 389L1650 391L1667 392L1683 389L1700 394L1717 389"/>
<path stroke="#ff9191" d="M532 673L549 674L565 668L582 664L599 662L615 658L632 656L649 651L665 649L682 641L699 633L716 629L732 620L749 616L766 609L782 604L799 593L816 584L832 579L849 571L866 562L882 555L899 542L916 539L932 530L949 521L966 517L983 515L999 507L1016 509L1033 505L1049 505L1066 501L1083 499L1099 499L1116 494L1133 489L1149 491L1166 487L1183 485L1199 485L1216 485L1233 482L1249 478L1266 478L1283 482L1300 478L1316 475L1333 478L1350 476L1366 473L1383 470L1400 466L1416 464L1433 459L1450 461L1466 455L1483 451L1500 447L1516 440L1533 432L1550 431L1567 427L1583 425L1600 420L1617 418L1633 416L1650 409L1667 405L1683 401L1700 392L1717 398"/>
<path stroke="#de5f92" d="M532 947L549 944L565 945L582 935L599 938L615 927L632 915L649 916L665 910L682 902L699 904L716 903L732 891L749 882L766 873L782 871L799 868L816 866L832 869L849 863L866 849L882 841L899 831L916 827L932 826L949 823L966 824L983 821L999 821L1016 813L1033 800L1049 796L1066 791L1083 786L1099 783L1116 780L1133 775L1149 780L1166 775L1183 778L1199 772L1216 776L1233 773L1249 771L1266 768L1283 770L1300 770L1316 769L1333 770L1350 772L1366 767L1383 766L1400 763L1416 762L1433 761L1450 750L1466 749L1483 744L1500 738L1516 731L1533 723L1550 716L1567 700L1583 691L1600 677L1617 660L1633 655L1650 637L1667 622L1683 614L1700 605L1717 603"/>
<path stroke="#f24058" d="M532 652L549 651L565 648L582 641L599 642L615 638L632 638L649 635L665 634L682 633L699 630L716 629L732 624L749 622L766 618L782 612L799 610L816 603L832 595L849 588L866 580L882 575L899 565L916 557L932 556L949 547L966 536L983 528L999 520L1016 513L1033 506L1049 501L1066 495L1083 494L1099 481L1116 475L1133 470L1149 463L1166 458L1183 455L1199 455L1216 455L1233 448L1249 444L1266 441L1283 442L1300 442L1316 440L1333 440L1350 435L1366 436L1383 435L1400 436L1416 433L1433 427L1450 424L1466 422L1483 419L1500 414L1516 410L1533 402L1550 400L1567 397L1583 394L1600 393L1617 387L1633 382L1650 380L1667 377L1683 373L1700 373L1717 386"/>
<path stroke="#fdb3cc" d="M532 708L549 702L565 699L582 696L599 696L615 691L632 691L649 690L665 689L682 690L699 685L716 678L732 677L749 672L766 670L782 671L799 670L816 674L832 676L849 669L866 665L882 660L899 655L916 653L932 648L949 647L966 645L983 643L999 638L1016 636L1033 630L1049 628L1066 619L1083 608L1099 599L1116 596L1133 586L1149 576L1166 561L1183 554L1199 549L1216 545L1233 540L1249 535L1266 534L1283 529L1300 519L1316 519L1333 516L1350 513L1366 509L1383 503L1400 493L1416 487L1433 479L1450 477L1466 473L1483 467L1500 464L1516 460L1533 456L1550 461L1567 454L1583 452L1600 450L1617 452L1633 447L1650 443L1667 440L1683 439L1700 438L1717 436"/>
<path stroke="#b69619" d="M532 650L549 648L565 650L582 649L599 647L615 643L632 640L649 640L665 637L682 635L699 629L716 626L732 621L749 617L766 607L782 604L799 596L816 584L832 577L849 569L866 564L882 557L899 549L916 538L932 529L949 522L966 512L983 509L999 505L1016 501L1033 495L1049 492L1066 485L1083 481L1099 480L1116 478L1133 474L1149 476L1166 473L1183 473L1199 476L1216 474L1233 476L1249 473L1266 474L1283 476L1300 474L1316 475L1333 470L1350 472L1366 469L1383 469L1400 467L1416 463L1433 460L1450 462L1466 457L1483 450L1500 442L1516 435L1533 433L1550 429L1567 426L1583 421L1600 419L1617 416L1633 408L1650 407L1667 407L1683 403L1700 403L1717 410"/>
<path stroke="#fdb3cc" d="M532 722L549 722L565 717L582 717L599 719L615 717L632 715L649 714L665 716L682 717L699 715L716 719L732 721L749 724L766 724L782 721L799 723L816 726L832 728L849 728L866 730L882 732L899 729L916 723L932 721L949 721L966 714L983 711L999 706L1016 702L1033 696L1049 694L1066 688L1083 682L1099 675L1116 667L1133 651L1149 646L1166 639L1183 635L1199 626L1216 620L1233 609L1249 602L1266 596L1283 589L1300 577L1316 569L1333 563L1350 556L1366 554L1383 554L1400 553L1416 547L1433 543L1450 541L1466 541L1483 535L1500 534L1516 535L1533 530L1550 526L1567 628L1583 517L1600 515L1617 512L1633 509L1650 504L1667 494L1683 490L1700 493L1717 492"/>
<path stroke="#d99fca" d="M532 833L549 832L565 826L582 829L599 826L615 831L632 831L649 828L665 824L682 823L699 821L716 813L732 811L749 801L766 796L782 795L799 794L816 786L832 778L849 772L866 768L882 769L899 760L916 755L932 753L949 749L966 744L983 743L999 742L1016 739L1033 725L1049 718L1066 709L1083 707L1099 702L1116 703L1133 699L1149 700L1166 695L1183 695L1199 692L1216 695L1233 691L1249 692L1266 692L1283 697L1300 703L1316 707L1333 708L1350 710L1366 705L1383 702L1400 695L1416 684L1433 686L1450 680L1466 674L1483 663L1500 659L1516 653L1533 651L1550 635L1567 627L1583 615L1600 599L1617 592L1633 587L1650 569L1667 558L1683 541L1700 545L1717 563"/>
<path stroke="#f24058" d="M532 930L549 923L565 917L582 907L599 907L615 910L632 898L649 900L665 887L682 879L699 873L716 865L732 856L749 852L766 843L782 842L799 838L816 830L832 826L849 833L866 823L882 823L899 822L916 820L932 815L949 816L966 813L983 804L999 796L1016 789L1033 778L1049 774L1066 770L1083 774L1099 768L1116 762L1133 755L1149 753L1166 747L1183 739L1199 724L1216 709L1233 701L1249 694L1266 686L1283 677L1300 677L1316 669L1333 659L1350 651L1366 648L1383 634L1400 632L1416 631L1433 629L1450 621L1466 619L1483 609L1500 610L1516 606L1533 605L1550 590L1567 583L1583 579L1600 573L1617 560L1633 558L1650 547L1667 542L1683 536L1700 557L1717 582"/>
<path stroke="#4475a8" d="M532 740L549 737L565 748L582 736L599 728L615 727L632 729L649 721L665 714L682 717L699 714L716 707L732 694L749 683L766 684L782 682L799 672L816 668L832 666L849 663L866 659L882 651L899 650L916 649L932 638L949 649L966 636L983 625L999 618L1016 628L1033 618L1049 624L1066 628L1083 613L1099 615L1116 619L1133 614L1149 615L1166 612L1183 612L1199 600L1216 607L1233 607L1249 589L1266 600L1283 598L1300 590L1316 593L1333 598L1350 592L1366 587L1383 584L1400 571L1416 578L1433 571L1450 566L1466 557L1483 546L1500 549L1516 553L1533 548L1550 537L1567 527L1583 515L1600 508L1617 508L1633 505L1650 509L1667 499L1683 501L1700 506L1717 493"/>
<path stroke="#78d47a" d="M532 858L549 851L565 843L582 837L599 830L615 826L632 820L649 810L665 809L682 800L699 797L716 794L732 781L749 769L766 757L782 749L799 738L816 734L832 730L849 724L866 723L882 723L899 720L916 718L932 717L949 716L966 711L983 717L999 716L1016 721L1033 725L1049 805L1066 726L1083 726L1099 727L1116 729L1133 733L1149 728L1166 731L1183 731L1199 730L1216 732L1233 729L1249 733L1266 730L1283 729L1300 729L1316 722L1333 718L1350 716L1366 716L1383 713L1400 712L1416 701L1433 700L1450 696L1466 695L1483 685L1500 681L1516 678L1533 674L1550 668L1567 659L1583 653L1600 640L1617 632L1633 625L1650 622L1667 617L1683 607L1700 608L1717 627"/>
<path stroke="#9e7059" d="M532 776L549 773L565 773L582 772L599 777L615 779L632 775L649 777L665 776L682 769L699 775L716 778L732 777L749 775L766 774L782 772L799 775L816 773L832 768L849 769L866 766L882 762L899 755L916 753L932 743L949 738L966 732L983 727L999 723L1016 721L1033 711L1049 705L1066 696L1083 688L1099 684L1116 678L1133 673L1149 672L1166 662L1183 656L1199 649L1216 641L1233 641L1249 634L1266 632L1283 628L1300 625L1316 625L1333 627L1350 620L1366 619L1383 614L1400 612L1416 607L1433 604L1450 600L1466 594L1483 585L1500 585L1516 583L1533 578L1550 658L1567 564L1583 554L1600 546L1617 541L1633 530L1650 522L1667 512L1683 504L1700 515L1717 522"/>
<path stroke="#d99fca" d="M532 577L549 575L565 574L582 574L599 571L615 572L632 572L649 574L665 577L682 574L699 571L716 573L732 571L749 579L766 578L782 577L799 579L816 578L832 578L849 578L866 578L882 580L899 583L916 585L932 582L949 580L966 581L983 580L999 580L1016 574L1033 571L1049 569L1066 566L1083 567L1099 563L1116 560L1133 557L1149 552L1166 553L1183 548L1199 542L1216 540L1233 538L1249 533L1266 532L1283 535L1300 535L1316 531L1333 528L1350 529L1366 530L1383 528L1400 524L1416 518L1433 519L1450 518L1466 512L1483 506L1500 502L1516 502L1533 496L1550 493L1567 489L1583 482L1600 476L1617 470L1633 471L1650 461L1667 455L1683 446L1700 447L1717 441"/>
<path stroke="#fdb3cc" d="M532 693L549 689L565 679L582 696L599 675L615 679L632 677L649 680L665 676L682 673L699 663L716 660L732 667L749 655L766 656L782 643L799 645L816 633L832 636L849 644L866 644L882 634L899 628L916 617L932 615L949 613L966 616L983 618L999 619L1016 620L1033 609L1049 679L1066 612L1083 608L1099 604L1116 613L1133 608L1149 602L1166 612L1183 607L1199 584L1216 590L1233 587L1249 585L1266 581L1283 574L1300 580L1316 580L1333 567L1350 568L1366 568L1383 564L1400 551L1416 547L1433 541L1450 537L1466 532L1483 524L1500 514L1516 515L1533 502L1550 505L1567 494L1583 476L1600 489L1617 469L1633 471L1650 466L1667 446L1683 455L1700 456L1717 447"/>
<path stroke="#b674a1" d="M532 787L549 780L565 782L582 775L599 771L615 761L632 755L649 747L665 745L682 742L699 741L716 739L732 739L749 730L766 724L782 717L799 710L816 714L832 709L849 710L866 703L882 703L899 704L916 698L932 699L949 695L966 690L983 683L999 677L1016 670L1033 667L1049 663L1066 660L1083 654L1099 646L1116 641L1133 638L1149 635L1166 626L1183 618L1199 608L1216 604L1233 592L1249 586L1266 578L1283 568L1300 556L1316 546L1333 537L1350 535L1366 534L1383 528L1400 519L1416 511L1433 506L1450 502L1466 495L1483 491L1500 486L1516 480L1533 472L1550 464L1567 461L1583 455L1600 454L1617 446L1633 440L1650 433L1667 424L1683 424L1700 430L1717 428"/>
<path stroke="#d99fca" d="M532 588L549 586L565 582L582 581L599 579L615 573L632 568L649 561L665 556L682 551L699 552L716 551L732 546L749 545L766 541L782 540L799 539L816 536L832 534L849 534L866 532L882 532L899 529L916 528L932 525L949 524L966 526L983 524L999 525L1016 524L1033 521L1049 521L1066 519L1083 514L1099 510L1116 509L1133 509L1149 508L1166 507L1183 505L1199 497L1216 496L1233 497L1249 495L1266 494L1283 489L1300 484L1316 480L1333 477L1350 468L1366 465L1383 462L1400 457L1416 451L1433 446L1450 441L1466 435L1483 432L1500 427L1516 422L1533 421L1550 417L1567 415L1583 412L1600 409L1617 404L1633 400L1650 399L1667 399L1683 396L1700 390L1717 400"/>
<path stroke="#ff8700" d="M532 824L549 817L565 810L582 802L599 791L615 783L632 772L649 766L665 759L682 750L699 743L716 736L732 728L749 718L766 708L782 696L799 685L816 681L832 674L849 669L866 656L882 652L899 654L916 651L932 657L949 655L966 648L983 647L999 645L1016 644L1033 644L1049 641L1066 640L1083 633L1099 638L1116 635L1133 639L1149 642L1166 640L1183 638L1199 638L1216 636L1233 637L1249 633L1266 629L1283 625L1300 620L1316 623L1333 622L1350 617L1366 614L1383 610L1400 602L1416 602L1433 589L1450 584L1466 579L1483 575L1500 571L1516 567L1533 560L1550 550L1567 537L1583 532L1600 525L1617 522L1633 520L1650 513L1667 505L1683 503L1700 527L1717 552"/>
<path stroke="#78d47a" d="M532 918L549 916L565 915L582 919L599 923L615 916L632 917L649 917L665 913L682 915L699 924L716 907L732 909L749 904L766 899L782 901L799 880L816 880L832 876L849 883L866 866L882 850L899 855L916 838L932 828L949 822L966 807L983 802L999 792L1016 793L1033 784L1049 776L1066 779L1083 772L1099 765L1116 759L1133 751L1149 744L1166 747L1183 749L1199 737L1216 733L1233 739L1249 736L1266 738L1283 736L1300 717L1316 717L1333 714L1350 706L1366 700L1383 686L1400 680L1416 684L1433 686L1450 675L1466 666L1483 666L1500 655L1516 645L1533 628L1550 614L1567 612L1583 597L1600 595L1617 584L1633 578L1650 566L1667 544L1683 531L1700 553L1717 559"/>
<path stroke="#38a14a" d="M532 703L549 696L565 699L582 694L599 690L615 701L632 690L649 689L665 673L682 672L699 667L716 662L732 660L749 645L766 646L782 640L799 634L816 632L832 628L849 619L866 604L882 603L899 594L916 604L932 580L949 592L966 584L983 588L999 586L1016 584L1033 581L1049 572L1066 567L1083 578L1099 575L1116 568L1133 575L1149 568L1166 564L1183 567L1199 556L1216 552L1233 558L1249 554L1266 550L1283 547L1300 555L1316 545L1333 549L1350 539L1366 534L1383 546L1400 540L1416 525L1433 529L1450 523L1466 514L1483 508L1500 508L1516 494L1533 497L1550 487L1567 485L1583 484L1600 469L1617 475L1633 480L1650 468L1667 450L1683 450L1700 460L1717 469"/>
<path stroke="#ffb878" d="M532 931L549 919L565 920L582 920L599 925L615 914L632 913L649 918L665 907L682 898L699 894L716 892L732 888L749 890L766 875L782 887L799 886L816 886L832 877L849 869L866 860L882 852L899 856L916 875L932 843L949 857L966 850L983 835L999 845L1016 834L1033 825L1049 821L1066 831L1083 822L1099 808L1116 812L1133 821L1149 818L1166 812L1183 809L1199 805L1216 805L1233 797L1249 808L1266 807L1283 797L1300 796L1316 787L1333 778L1350 770L1366 783L1383 778L1400 747L1416 742L1433 747L1450 731L1466 729L1483 720L1500 701L1516 684L1533 690L1550 693L1567 671L1583 669L1600 646L1617 627L1633 627L1650 606L1667 581L1683 583L1700 586L1717 619"/>
<path stroke="#dab1a0" d="M532 834L549 832L565 830L582 830L599 821L615 821L632 817L649 815L665 812L682 806L699 801L716 794L732 790L749 784L766 786L782 783L799 924L816 775L832 770L849 769L866 765L882 757L899 746L916 743L932 736L949 736L966 722L983 722L999 715L1016 711L1033 710L1049 702L1066 692L1083 687L1099 685L1116 679L1133 680L1149 679L1166 680L1183 679L1199 676L1216 674L1233 674L1249 674L1266 680L1283 670L1300 664L1316 660L1333 656L1350 658L1366 658L1383 653L1400 648L1416 640L1433 635L1450 636L1466 625L1483 620L1500 610L1516 603L1533 594L1550 581L1567 574L1583 563L1600 553L1617 544L1633 540L1650 533L1667 524L1683 516L1700 518L1717 530"/>
<path stroke="#d99fca" d="M532 518L549 513L565 510L582 507L599 503L615 501L632 495L649 494L665 493L682 489L699 488L716 484L732 483L749 610L766 481L782 482L799 482L816 478L832 476L849 475L866 473L882 471L899 468L916 467L932 466L949 463L966 462L983 462L999 460L1016 459L1033 455L1049 453L1066 452L1083 449L1099 444L1116 441L1133 437L1149 434L1166 430L1183 426L1199 421L1216 420L1233 415L1249 412L1266 410L1283 403L1300 401L1316 395L1333 392L1350 391L1366 388L1383 385L1400 384L1416 385L1433 384L1450 382L1466 381L1483 376L1500 375L1516 373L1533 371L1550 371L1567 370L1583 368L1600 365L1617 363L1633 361L1650 361L1667 358L1683 356L1700 355L1717 359"/>
<path stroke="#ffb878" d="M532 702L549 701L565 695L582 676L599 673L615 676L632 671L649 669L665 674L682 671L699 660L716 653L732 661L749 658L766 656L782 655L799 663L816 667L832 665L849 679L866 689L882 796L899 670L916 674L932 677L949 681L966 662L983 675L999 664L1016 656L1033 658L1049 655L1066 658L1083 661L1099 659L1116 647L1133 635L1149 635L1166 629L1183 617L1199 616L1216 600L1233 596L1249 594L1266 583L1283 583L1300 573L1316 565L1333 558L1350 541L1366 550L1383 544L1400 533L1416 522L1433 522L1450 516L1466 507L1483 500L1500 506L1516 497L1533 502L1550 492L1567 476L1583 480L1600 476L1617 473L1633 464L1650 457L1667 462L1683 445L1700 450L1717 448"/>
<path stroke="#78bcb4" d="M532 664L549 658L565 652L582 801L599 647L615 643L632 642L649 639L665 636L682 630L699 627L716 623L732 618L749 612L766 608L782 605L799 598L816 595L832 592L849 591L866 588L882 583L899 578L916 573L932 570L949 568L966 563L983 559L999 550L1016 544L1033 544L1049 545L1066 541L1083 538L1099 536L1116 537L1133 531L1149 526L1166 520L1183 516L1199 505L1216 497L1233 492L1249 487L1266 484L1283 480L1300 471L1316 468L1333 463L1350 462L1366 459L1383 456L1400 453L1416 445L1433 436L1450 426L1466 422L1483 423L1500 417L1516 415L1533 408L1550 406L1567 408L1583 405L1600 404L1617 397L1633 399L1650 394L1667 393L1683 393L1700 390L1717 392"/>
<path stroke="#b674a1" d="M532 628L549 624L565 624L582 620L599 619L615 612L632 616L649 614L665 614L682 609L699 612L716 613L732 618L749 614L766 616L782 616L799 617L816 613L832 611L849 607L866 605L882 602L899 599L916 596L932 593L949 590L966 584L983 581L999 577L1016 569L1033 566L1049 558L1066 556L1083 546L1099 542L1116 539L1133 533L1149 533L1166 530L1183 524L1199 524L1216 520L1233 519L1249 516L1266 518L1283 521L1300 521L1316 517L1333 522L1350 525L1366 530L1383 529L1400 527L1416 528L1433 532L1450 528L1466 529L1483 529L1500 526L1516 526L1533 526L1550 521L1567 515L1583 506L1600 495L1617 489L1633 480L1650 477L1667 465L1683 459L1700 472L1717 479"/>
<path stroke="#f24058" d="M532 715L549 712L565 711L582 712L599 710L615 714L632 711L649 708L665 704L682 705L699 700L716 699L732 691L749 684L766 682L782 679L799 674L816 671L832 669L849 662L866 651L882 652L899 646L916 644L932 643L949 638L966 636L983 632L999 633L1016 626L1033 628L1049 622L1066 618L1083 620L1099 613L1116 616L1133 613L1149 613L1166 611L1183 612L1199 613L1216 612L1233 611L1249 614L1266 618L1283 620L1300 617L1316 618L1333 620L1350 619L1366 620L1383 610L1400 609L1416 607L1433 599L1450 593L1466 586L1483 581L1500 576L1516 569L1533 565L1550 556L1567 551L1583 543L1600 536L1617 525L1633 515L1650 507L1667 503L1683 496L1700 500L1717 527"/>
<path stroke="#b674a1" d="M532 731L549 728L565 726L582 722L599 721L615 717L632 717L649 701L665 693L682 690L699 676L716 665L732 658L749 649L766 641L782 638L799 625L816 615L832 612L849 599L866 592L882 588L899 569L916 559L932 546L949 549L966 544L983 538L999 533L1016 535L1033 532L1049 523L1066 535L1083 531L1099 528L1116 517L1133 522L1149 517L1166 526L1183 528L1199 519L1216 527L1233 518L1249 504L1266 512L1283 502L1300 489L1316 492L1333 499L1350 490L1366 494L1383 499L1400 501L1416 487L1433 484L1450 475L1466 458L1483 461L1500 444L1516 439L1533 424L1550 421L1567 419L1583 421L1600 411L1617 393L1633 409L1650 401L1667 403L1683 387L1700 407L1717 409"/>
<path stroke="#b9adaa" d="M532 836L549 835L565 834L582 835L599 830L615 828L632 828L649 821L665 815L682 812L699 811L716 801L732 794L749 788L766 783L782 779L799 766L816 758L832 753L849 744L866 736L882 728L899 727L916 718L932 709L949 706L966 699L983 694L999 688L1016 686L1033 679L1049 676L1066 672L1083 668L1099 669L1116 665L1133 657L1149 653L1166 652L1183 653L1199 651L1216 651L1233 651L1249 652L1266 651L1283 648L1300 647L1316 644L1333 642L1350 648L1366 638L1383 632L1400 629L1416 625L1433 618L1450 612L1466 604L1483 605L1500 601L1516 599L1533 594L1550 585L1567 576L1583 572L1600 562L1617 552L1633 546L1650 539L1667 528L1683 520L1700 525L1717 515"/>
<path stroke="#38a14a" d="M532 615L549 613L565 611L582 605L599 601L615 603L632 597L649 594L665 591L682 588L699 586L716 582L732 584L749 581L766 579L782 577L799 576L816 576L832 576L849 572L866 571L882 567L899 564L916 559L932 556L949 549L966 547L983 541L999 538L1016 531L1033 528L1049 524L1066 517L1083 514L1099 509L1116 503L1133 499L1149 496L1166 492L1183 489L1199 488L1216 485L1233 484L1249 485L1266 570L1283 474L1300 476L1316 471L1333 469L1350 465L1366 465L1383 464L1400 463L1416 463L1433 459L1450 457L1466 451L1483 448L1500 448L1516 446L1533 443L1550 443L1567 438L1583 435L1600 434L1617 434L1633 431L1650 431L1667 427L1683 426L1700 440L1717 460"/>
<path stroke="#b674a1" d="M532 760L549 761L565 756L582 754L599 751L615 749L632 749L649 747L665 745L682 741L699 737L716 735L732 727L749 725L766 717L782 713L799 710L816 706L832 697L849 691L866 685L882 676L899 667L916 665L932 662L949 659L966 654L983 651L999 640L1016 637L1033 634L1049 629L1066 628L1083 625L1099 623L1116 625L1133 624L1149 622L1166 615L1183 609L1199 606L1216 598L1233 601L1249 602L1266 597L1283 595L1300 585L1316 581L1333 581L1350 583L1366 581L1383 573L1400 567L1416 558L1433 551L1450 547L1466 543L1483 540L1500 535L1516 528L1533 521L1550 516L1567 510L1583 501L1600 496L1617 490L1633 483L1650 482L1667 471L1683 472L1700 479L1717 467"/>
<path stroke="#dab1a0" d="M532 1013L549 1007L565 1004L582 1004L599 1004L615 1004L632 998L649 997L665 999L682 997L699 990L716 986L732 983L749 976L766 960L782 950L799 940L816 931L832 923L849 908L866 898L882 886L899 878L916 873L932 854L949 849L966 844L983 836L999 824L1016 825L1033 811L1049 812L1066 804L1083 796L1099 791L1116 794L1133 792L1149 787L1166 785L1183 786L1199 776L1216 773L1233 769L1249 770L1266 762L1283 765L1300 759L1316 757L1333 759L1350 758L1366 760L1383 754L1400 752L1416 742L1433 730L1450 725L1466 718L1483 714L1500 709L1516 706L1533 708L1550 690L1567 674L1583 663L1600 650L1617 632L1633 619L1650 609L1667 599L1683 588L1700 605L1717 610"/>
<path stroke="#78bcb4" d="M532 778L549 778L565 776L582 782L599 782L615 781L632 775L649 781L665 773L682 772L699 768L716 766L732 762L749 765L766 766L782 762L799 759L816 760L832 758L849 754L866 749L882 745L899 739L916 739L932 735L949 730L966 724L983 720L999 719L1016 713L1033 705L1049 698L1066 689L1083 681L1099 681L1116 674L1133 667L1149 666L1166 661L1183 655L1199 651L1216 647L1233 642L1249 638L1266 638L1283 636L1300 631L1316 636L1333 639L1350 640L1366 636L1383 630L1400 628L1416 617L1433 613L1450 610L1466 608L1483 604L1500 597L1516 592L1533 586L1550 573L1567 568L1583 561L1600 555L1617 551L1633 543L1650 537L1667 528L1683 521L1700 529L1717 534"/>
<path stroke="#f4cc5a" d="M532 717L549 717L565 713L582 711L599 715L615 714L632 704L649 701L665 697L682 698L699 695L716 693L732 689L749 684L766 681L782 679L799 671L816 665L832 661L849 657L866 650L882 645L899 637L916 630L932 627L949 620L966 621L983 619L999 614L1016 606L1033 600L1049 595L1066 593L1083 589L1099 580L1116 574L1133 568L1149 565L1166 564L1183 561L1199 553L1216 551L1233 544L1249 539L1266 539L1283 534L1300 531L1316 526L1333 516L1350 514L1366 513L1383 508L1400 501L1416 493L1433 487L1450 483L1466 477L1483 466L1500 459L1516 452L1533 447L1550 443L1567 443L1583 437L1600 427L1617 429L1633 425L1650 425L1667 420L1683 417L1700 419L1717 442"/>
<path stroke="#f4cc5a" d="M532 864L549 859L565 857L582 855L599 851L615 848L632 848L649 840L665 844L682 841L699 839L716 838L732 837L749 839L766 833L782 833L799 827L816 823L832 822L849 818L866 813L882 818L899 816L916 808L932 805L949 803L966 800L983 796L999 791L1016 785L1033 781L1049 773L1066 772L1083 765L1099 761L1116 757L1133 751L1149 741L1166 741L1183 739L1199 729L1216 728L1233 722L1249 721L1266 715L1283 709L1300 713L1316 715L1333 711L1350 707L1366 709L1383 702L1400 695L1416 691L1433 689L1450 690L1466 683L1483 676L1500 665L1516 655L1533 653L1550 643L1567 634L1583 629L1600 614L1617 606L1633 595L1650 582L1667 572L1683 569L1700 574L1717 596"/>
<path stroke="#78bcb4" d="M532 623L549 622L565 622L582 619L599 612L615 608L632 608L649 604L665 600L682 599L699 597L716 590L732 590L749 588L766 588L782 586L799 585L816 582L832 576L849 573L866 572L882 566L899 561L916 554L932 552L949 549L966 545L983 544L999 537L1016 530L1033 527L1049 519L1066 511L1083 508L1099 505L1116 502L1133 501L1149 496L1166 492L1183 489L1199 487L1216 483L1233 481L1249 478L1266 476L1283 474L1300 474L1316 475L1333 473L1350 474L1366 470L1383 464L1400 463L1416 559L1433 462L1450 460L1466 460L1483 456L1500 452L1516 447L1533 442L1550 439L1567 438L1583 434L1600 428L1617 426L1633 422L1650 419L1667 415L1683 412L1700 409L1717 398"/>
<path stroke="#78d47a" d="M532 646L549 641L565 637L582 635L599 627L615 622L632 613L649 608L665 605L682 593L699 587L716 578L732 574L749 567L766 564L782 560L799 558L816 556L832 551L849 554L866 553L882 551L899 551L916 544L932 544L949 544L966 547L983 549L999 550L1016 552L1033 550L1049 547L1066 547L1083 548L1099 548L1116 546L1133 543L1149 541L1166 543L1183 540L1199 539L1216 538L1233 537L1249 531L1266 528L1283 527L1300 524L1316 519L1333 512L1350 507L1366 505L1383 500L1400 498L1416 494L1433 488L1450 482L1466 484L1483 483L1500 477L1516 474L1533 472L1550 472L1567 472L1583 471L1600 471L1617 471L1633 470L1650 466L1667 464L1683 463L1700 468L1717 461"/>
<path stroke="#78bcb4" d="M532 551L549 549L565 546L582 544L599 538L615 535L632 532L649 532L665 529L682 529L699 526L716 525L732 523L749 521L766 519L782 515L799 515L816 512L832 511L849 509L866 507L882 501L899 498L916 497L932 492L949 488L966 483L983 481L999 475L1016 468L1033 469L1049 464L1066 457L1083 453L1099 448L1116 443L1133 440L1149 436L1166 426L1183 423L1199 420L1216 418L1233 411L1249 407L1266 403L1283 399L1300 395L1316 393L1333 390L1350 387L1366 386L1383 381L1400 380L1416 380L1433 378L1450 376L1466 373L1483 374L1500 377L1516 377L1533 374L1550 376L1567 374L1583 370L1600 369L1617 368L1633 368L1650 366L1667 366L1683 363L1700 359L1717 358"/>
<path stroke="#b69619" d="M532 960L549 946L565 934L582 937L599 941L615 921L632 912L649 915L665 908L682 907L699 883L716 886L732 892L749 886L766 888L782 878L799 849L816 857L832 860L849 839L866 838L882 833L899 814L916 809L932 807L949 791L966 784L983 763L999 763L1016 738L1033 789L1049 727L1066 707L1083 698L1099 689L1116 683L1133 664L1149 643L1166 646L1183 631L1199 625L1216 635L1233 616L1249 623L1266 617L1283 598L1300 597L1316 606L1333 599L1350 588L1366 591L1383 561L1400 573L1416 568L1433 577L1450 580L1466 559L1483 570L1500 576L1516 567L1533 567L1550 555L1567 567L1583 564L1600 559L1617 538L1633 546L1650 549L1667 536L1683 516L1700 530L1717 535"/>
<path stroke="#ffb878" d="M532 594L549 599L565 600L582 599L599 601L615 601L632 603L649 600L665 601L682 601L699 602L716 600L732 595L749 592L766 588L782 582L799 579L816 573L832 570L849 564L866 559L882 554L899 552L916 551L932 549L949 547L966 542L983 540L999 538L1016 533L1033 531L1049 530L1066 528L1083 525L1099 526L1116 526L1133 524L1149 520L1166 521L1183 521L1199 516L1216 512L1233 512L1249 511L1266 510L1283 505L1300 499L1316 494L1333 487L1350 484L1366 478L1383 470L1400 467L1416 460L1433 454L1450 444L1466 438L1483 428L1500 422L1516 418L1533 415L1550 412L1567 408L1583 406L1600 398L1617 391L1633 387L1650 384L1667 378L1683 377L1700 387L1717 396"/>
<path stroke="#d99fca" d="M532 880L549 880L565 879L582 878L599 886L615 886L632 881L649 877L665 878L682 877L699 876L716 869L732 868L749 861L766 858L782 851L799 841L816 837L832 833L849 819L866 813L882 808L899 806L916 799L932 784L949 770L966 761L983 753L999 747L1016 736L1033 727L1049 715L1066 706L1083 696L1099 685L1116 681L1133 679L1149 662L1166 650L1183 639L1199 632L1216 631L1233 626L1249 625L1266 621L1283 626L1300 623L1316 622L1333 621L1350 618L1366 620L1383 618L1400 619L1416 615L1433 612L1450 609L1466 611L1483 609L1500 605L1516 609L1533 599L1550 587L1567 581L1583 565L1600 553L1617 545L1633 535L1650 531L1667 524L1683 515L1700 527L1717 532"/>
<path stroke="#38a14a" d="M532 539L549 538L565 541L582 541L599 541L615 541L632 541L649 543L665 542L682 542L699 539L716 537L732 535L749 535L766 533L782 532L799 532L816 532L832 529L849 525L866 522L882 520L899 516L916 511L932 508L949 501L966 501L983 499L999 491L1016 487L1033 481L1049 478L1066 475L1083 473L1099 467L1116 463L1133 458L1149 454L1166 451L1183 449L1199 448L1216 443L1233 440L1249 436L1266 432L1283 431L1300 429L1316 425L1333 424L1350 424L1366 420L1383 421L1400 421L1416 416L1433 415L1450 409L1466 405L1483 401L1500 396L1516 391L1533 387L1550 386L1567 383L1583 374L1600 371L1617 369L1633 366L1650 361L1667 359L1683 357L1700 359L1717 357"/>
<path stroke="#de5f92" d="M532 817L549 819L565 815L582 811L599 814L615 811L632 809L649 803L665 797L682 798L699 791L716 789L732 780L749 777L766 768L782 755L799 747L816 739L832 732L849 726L866 713L882 704L899 704L916 698L932 691L949 686L966 678L983 671L999 663L1016 663L1033 660L1049 652L1066 655L1083 654L1099 649L1116 649L1133 647L1149 648L1166 651L1183 652L1199 656L1216 658L1233 661L1249 670L1266 669L1283 666L1300 666L1316 668L1333 671L1350 668L1366 666L1383 661L1400 658L1416 654L1433 645L1450 642L1466 643L1483 644L1500 638L1516 634L1533 627L1550 614L1567 603L1583 594L1600 585L1617 575L1633 566L1650 560L1667 556L1683 550L1700 562L1717 587"/>
<path stroke="#ff9191" d="M532 580L549 577L565 577L582 576L599 576L615 577L632 575L649 571L665 567L682 562L699 558L716 551L732 547L749 542L766 542L782 540L799 539L816 537L832 532L849 529L866 524L882 520L899 517L916 515L932 510L949 507L966 502L983 498L999 497L1016 495L1033 490L1049 487L1066 483L1083 479L1099 477L1116 474L1133 468L1149 473L1166 472L1183 467L1199 462L1216 453L1233 450L1249 443L1266 444L1283 442L1300 433L1316 427L1333 423L1350 419L1366 411L1383 407L1400 404L1416 400L1433 395L1450 391L1466 388L1483 384L1500 381L1516 376L1533 371L1550 366L1567 364L1583 361L1600 359L1617 354L1633 353L1650 348L1667 345L1683 346L1700 349L1717 339"/>
<path stroke="#97caea" d="M532 1012L549 1004L565 1005L582 995L599 993L615 993L632 994L649 984L665 986L682 980L699 979L716 975L732 971L749 964L766 966L782 963L799 958L816 956L832 947L849 937L866 930L882 923L899 913L916 910L932 896L949 888L966 887L983 879L999 869L1016 860L1033 858L1049 851L1066 859L1083 855L1099 857L1116 848L1133 852L1149 853L1166 851L1183 850L1199 841L1216 837L1233 838L1249 831L1266 831L1283 829L1300 830L1316 835L1333 835L1350 826L1366 823L1383 823L1400 818L1416 818L1433 817L1450 809L1466 803L1483 794L1500 790L1516 783L1533 775L1550 779L1567 768L1583 755L1600 738L1617 723L1633 710L1650 705L1667 683L1683 666L1700 667L1717 667"/>
<path stroke="#ff9191" d="M532 1265L549 1212L565 987L582 949L599 937L615 924L632 913L649 899L665 889L682 876L699 863L716 850L732 839L749 832L766 822L782 810L799 798L816 787L832 781L849 765L866 756L882 747L899 736L916 724L932 713L949 703L966 693L983 680L999 672L1016 661L1033 650L1049 643L1066 635L1083 630L1099 624L1116 615L1133 608L1149 606L1166 594L1183 593L1199 583L1216 578L1233 570L1249 563L1266 556L1283 551L1300 545L1316 536L1333 528L1350 525L1366 517L1383 516L1400 510L1416 507L1433 502L1450 494L1466 492L1483 488L1500 485L1516 480L1533 477L1550 474L1567 471L1583 466L1600 464L1617 459L1633 454L1650 453L1667 445L1683 444L1700 462L1717 479"/>
<path stroke="#d99fca" d="M532 1165L549 1092L565 987L582 963L599 950L615 942L632 933L649 919L665 912L682 900L699 889L716 881L732 873L749 867L766 857L782 847L799 838L816 833L832 828L849 819L866 810L882 798L899 790L916 777L932 767L949 758L966 746L983 737L999 725L1016 715L1033 703L1049 695L1066 688L1083 677L1099 673L1116 663L1133 656L1149 647L1166 639L1183 629L1199 623L1216 617L1233 610L1249 601L1266 599L1283 589L1300 585L1316 578L1333 571L1350 562L1366 557L1383 552L1400 546L1416 542L1433 537L1450 529L1466 524L1483 521L1500 514L1516 509L1533 503L1550 499L1567 498L1583 496L1600 489L1617 489L1633 482L1650 481L1667 482L1683 477L1700 490L1717 503"/>
<path stroke="#d99fca" d="M532 983L549 972L565 969L582 965L599 957L615 951L632 943L649 937L665 930L682 922L699 916L716 913L732 912L749 911L766 907L782 905L799 903L816 903L832 899L849 899L866 896L882 895L899 895L916 896L932 893L949 1289L966 1289L983 1164L999 1040L1016 916L1033 836L1049 826L1066 819L1083 808L1099 797L1116 791L1133 781L1149 770L1166 761L1183 750L1199 743L1216 737L1233 726L1249 723L1266 716L1283 709L1300 703L1316 696L1333 692L1350 685L1366 676L1383 664L1400 657L1416 645L1433 635L1450 621L1466 611L1483 602L1500 591L1516 581L1533 570L1550 562L1567 557L1583 551L1600 546L1617 543L1633 536L1650 525L1667 523L1683 517L1700 518L1717 523"/>
<path stroke="#9e7059" d="M532 983L549 982L565 983L582 983L599 992L622 1009L649 1025L669 1073L682 1069L699 1066L716 1064L734 1062L749 1065L767 1008L782 1051L801 1102L816 1099L834 1092L851 1102L866 1096L884 1025L902 1025L926 944L949 927L966 916L983 907L999 896L1016 891L1038 885L1049 908L1066 929L1084 967L1101 1013L1116 1009L1133 1001L1149 1009L1166 1283L1183 1053L1199 1051L1216 1048L1233 1146L1249 1146L1266 889L1283 1036L1300 1032L1316 1019L1333 1204L1350 885L1366 823L1383 810L1400 795L1416 784L1433 767L1450 756L1466 744L1483 726L1500 709L1516 694L1533 676L1550 667L1567 654L1583 645L1600 635L1617 623L1633 617L1650 610L1667 602L1683 597L1700 604L1717 610"/>
<path stroke="#b9adaa" d="M532 916L549 916L565 909L582 909L599 904L615 903L632 901L649 896L665 896L682 896L699 889L716 888L732 883L749 882L766 877L782 876L799 874L816 871L832 866L849 866L866 863L882 855L899 854L916 854L932 844L949 845L966 836L983 832L999 833L1016 828L1033 823L1049 827L1066 825L1083 827L1099 827L1116 831L1133 831L1149 830L1166 835L1183 837L1199 836L1216 852L1233 867L1249 879L1266 1262L1283 919L1300 907L1316 907L1333 893L1350 863L1366 846L1383 826L1400 810L1416 783L1433 762L1450 737L1466 717L1483 695L1500 669L1516 646L1533 623L1550 614L1567 604L1583 591L1600 581L1617 567L1633 562L1650 549L1667 539L1683 530L1700 550L1717 570"/>
<path stroke="#fdb3cc" d="M532 943L549 935L565 926L582 919L599 914L615 901L632 895L649 888L665 880L682 873L699 863L716 855L732 845L749 839L766 829L782 826L799 816L816 807L832 797L849 792L866 783L882 777L899 769L916 763L932 758L949 748L966 743L983 739L999 728L1016 723L1033 716L1049 712L1066 707L1083 707L1099 699L1116 701L1133 692L1149 689L1166 681L1183 681L1199 676L1208 716L1216 1094L1233 1085L1246 840L1266 703L1283 695L1300 686L1316 679L1333 668L1350 658L1366 650L1383 642L1400 637L1416 633L1433 630L1450 624L1466 618L1483 612L1500 609L1516 601L1533 597L1550 588L1567 588L1583 580L1600 580L1617 573L1633 569L1650 567L1667 560L1683 557L1700 572L1717 583"/>
<path stroke="#b69619" d="M532 1049L549 1048L565 1039L582 1034L599 1029L615 1023L632 1015L649 1012L665 1009L682 1001L699 996L716 986L732 972L749 962L766 947L782 937L799 924L816 915L832 903L849 1049L866 1049L887 969L899 948L916 916L932 940L949 967L966 1064L983 897L999 880L1016 863L1033 850L1049 842L1066 836L1083 831L1099 823L1116 816L1133 810L1149 805L1166 799L1183 790L1199 783L1216 780L1233 775L1249 771L1266 766L1283 761L1300 760L1316 754L1333 752L1350 749L1366 743L1383 734L1400 724L1416 718L1433 706L1450 696L1466 686L1483 675L1500 671L1516 659L1533 650L1550 644L1567 637L1583 632L1600 626L1617 622L1633 614L1650 609L1667 600L1683 597L1700 601L1717 610"/>
<path stroke="#dab1a0" d="M532 1023L549 1014L565 1006L582 1000L599 991L615 983L632 975L649 967L665 959L682 951L699 943L716 935L732 929L749 925L766 918L782 912L799 903L816 895L832 890L849 884L866 879L882 1104L899 840L916 832L932 823L949 821L966 811L983 804L999 796L1016 787L1033 783L1049 774L1066 766L1083 759L1099 750L1116 745L1133 735L1149 728L1166 718L1183 710L1199 703L1216 695L1233 685L1249 678L1266 671L1283 663L1300 655L1316 646L1333 638L1350 632L1366 623L1383 617L1400 606L1416 600L1433 591L1450 581L1466 576L1483 569L1500 559L1516 551L1533 543L1550 537L1567 531L1583 524L1600 522L1617 517L1633 506L1650 502L1667 497L1683 490L1700 496L1717 503"/>
<path stroke="#b674a1" d="M532 1009L549 1003L565 990L582 984L599 979L615 969L632 962L649 952L665 947L682 935L699 929L716 923L732 920L749 913L766 909L782 903L799 894L816 893L832 887L849 880L866 876L882 876L899 1108L916 971L927 877L949 863L966 852L983 842L999 830L1016 817L1033 810L1049 804L1066 797L1083 793L1099 788L1116 785L1133 780L1149 772L1166 767L1183 764L1199 756L1216 755L1233 750L1249 745L1266 739L1283 735L1300 731L1316 729L1333 722L1350 721L1366 716L1383 707L1400 697L1416 689L1433 680L1450 672L1466 661L1483 652L1500 642L1516 632L1533 623L1550 617L1567 608L1583 605L1600 599L1617 595L1633 588L1650 580L1667 576L1683 570L1700 583L1717 597"/>
<path stroke="#38a14a" d="M532 1036L549 1028L565 1023L582 1017L599 1009L615 1004L632 997L649 992L665 981L682 979L699 969L716 965L732 960L749 959L766 954L782 949L799 948L816 942L832 940L849 934L866 929L882 926L899 920L916 919L932 916L957 909L966 1001L976 879L999 863L1016 851L1033 836L1049 822L1066 813L1083 801L1099 789L1116 777L1133 764L1149 753L1166 739L1183 729L1199 716L1216 710L1233 702L1249 697L1266 691L1283 683L1300 675L1316 669L1333 665L1350 658L1366 650L1383 645L1400 636L1416 626L1433 618L1450 611L1466 603L1483 592L1500 586L1516 576L1533 570L1550 568L1567 564L1583 558L1600 549L1617 546L1633 543L1650 540L1667 532L1683 530L1700 536L1717 543"/>
<path stroke="#f24058" d="M532 1049L549 1034L565 1017L582 999L599 983L615 967L632 952L649 1013L665 999L675 956L699 932L716 920L732 903L749 891L766 881L782 867L799 855L816 845L832 832L849 822L866 810L882 799L899 788L916 782L932 773L949 764L966 756L983 743L999 737L1016 724L1033 716L1049 707L1066 699L1083 687L1099 678L1116 669L1133 661L1149 652L1166 643L1183 633L1199 623L1216 619L1233 614L1249 603L1266 600L1283 591L1300 584L1316 577L1333 569L1350 561L1366 557L1383 553L1400 547L1416 539L1433 535L1450 530L1466 526L1483 517L1500 514L1516 511L1533 503L1550 497L1567 496L1583 492L1600 488L1617 482L1633 475L1650 471L1667 466L1683 463L1700 477L1717 490"/>
<path stroke="#78d47a" d="M532 889L549 881L565 869L582 859L599 853L615 841L632 829L649 816L665 810L682 796L699 1005L716 796L732 786L749 778L766 772L782 762L799 749L816 742L832 734L849 724L866 716L882 706L899 704L916 697L932 689L949 683L966 678L983 671L999 662L1016 657L1033 650L1049 644L1066 635L1083 632L1099 623L1116 619L1133 609L1149 605L1166 599L1183 587L1199 583L1216 578L1233 572L1249 566L1266 562L1283 556L1300 551L1316 545L1333 540L1350 537L1366 530L1383 526L1400 521L1416 513L1433 509L1450 505L1466 496L1483 492L1500 490L1516 482L1533 477L1550 473L1567 472L1583 468L1600 468L1617 464L1633 459L1650 455L1667 455L1683 450L1700 458L1717 463"/>
<path stroke="#b9adaa" d="M532 863L549 859L565 843L582 836L599 825L615 819L632 810L649 799L665 789L682 783L699 889L716 770L732 760L749 747L766 742L782 734L799 726L816 716L832 704L849 700L866 690L882 682L899 677L916 671L932 664L949 654L966 646L983 641L999 637L1016 628L1033 623L1049 614L1066 612L1083 606L1099 600L1116 597L1133 591L1149 586L1166 582L1183 573L1199 570L1216 565L1233 558L1249 557L1266 546L1283 541L1300 538L1316 531L1333 527L1350 523L1366 517L1383 513L1400 508L1416 506L1433 497L1450 490L1466 485L1483 479L1500 475L1516 468L1533 463L1550 458L1567 457L1583 447L1600 447L1617 440L1633 435L1650 429L1667 426L1683 424L1700 428L1717 437"/>
<path stroke="#97caea" d="M532 1076L549 1073L565 1072L582 1068L599 1067L615 1064L632 1061L649 1062L665 1058L682 1056L699 1053L716 1052L729 1049L749 1045L766 1044L782 1040L806 1036L832 1024L849 1018L866 1010L884 1005L899 990L916 978L941 956L966 942L983 932L999 920L1018 909L1033 902L1049 895L1066 889L1083 883L1099 876L1116 867L1129 863L1149 855L1166 849L1183 844L1199 836L1216 833L1233 830L1249 827L1266 819L1283 815L1300 814L1316 808L1333 802L1350 799L1366 796L1383 788L1400 776L1416 768L1433 759L1450 749L1466 742L1483 733L1500 722L1516 713L1533 703L1550 695L1567 687L1583 685L1600 674L1617 663L1633 654L1650 650L1667 645L1683 637L1700 644L1717 650"/>
<path stroke="#4475a8" d="M532 1082L549 1077L565 1073L582 1067L599 1060L615 1051L632 1046L649 1034L665 1026L682 1016L699 1011L716 1001L729 996L749 994L766 987L782 984L799 975L816 969L832 968L846 963L866 953L882 947L899 940L916 930L932 923L949 916L966 908L984 900L999 914L1018 929L1033 925L1049 916L1068 947L1083 943L1101 1004L1116 1004L1129 975L1149 921L1169 869L1189 850L1216 830L1233 817L1249 810L1266 790L1283 783L1300 776L1316 774L1333 764L1350 762L1366 756L1383 749L1400 741L1416 732L1433 725L1450 715L1466 705L1483 701L1500 691L1516 685L1533 676L1550 670L1567 660L1583 656L1600 648L1617 641L1633 632L1650 627L1667 617L1683 610L1700 625L1717 637"/>
<path stroke="#ff8700" d="M532 1062L549 1057L565 1052L582 1048L599 1047L615 1041L632 1039L649 1031L665 1027L682 1024L699 1017L716 1014L732 1007L749 1009L767 1001L782 996L799 987L816 980L832 972L846 967L866 960L882 955L899 948L922 940L951 1117L966 1104L983 1129L1001 1158L1016 1148L1034 1070L1049 1056L1068 1039L1084 1027L1098 1005L1116 1000L1129 995L1151 975L1168 973L1186 855L1199 843L1216 834L1233 819L1249 807L1266 795L1283 783L1300 774L1316 762L1333 752L1350 738L1366 730L1383 719L1400 709L1416 701L1433 690L1450 680L1466 665L1483 659L1500 644L1516 632L1533 623L1550 618L1567 610L1583 610L1600 598L1617 594L1633 587L1650 581L1667 577L1683 570L1700 577L1717 583"/>
<path stroke="#78bcb4" d="M532 1036L549 1028L565 1023L582 1015L599 1015L615 1005L632 1001L649 991L665 989L682 982L699 975L716 973L732 966L749 957L766 951L782 944L799 937L816 934L832 927L849 921L866 916L882 911L899 906L916 904L932 898L949 891L966 889L983 881L999 880L1016 876L1033 869L1049 865L1066 856L1083 857L1099 852L1116 845L1133 845L1149 839L1166 832L1183 827L1199 823L1216 824L1233 826L1249 831L1266 832L1283 833L1300 837L1316 839L1333 839L1350 846L1366 844L1383 846L1400 848L1416 863L1433 877L1450 888L1466 876L1483 871L1500 861L1515 855L1533 838L1550 820L1567 799L1583 783L1600 759L1617 738L1633 713L1650 695L1667 671L1685 646L1700 667L1717 688"/>
<path stroke="#78d47a" d="M532 1049L549 1043L565 1040L582 1029L599 1027L615 1022L632 1019L649 1014L665 1006L682 1002L699 999L716 988L732 988L749 977L766 973L782 965L799 967L816 959L832 951L849 946L866 943L882 937L899 932L916 926L932 918L949 911L966 908L983 904L999 894L1016 890L1033 880L1049 876L1066 868L1083 866L1099 860L1116 853L1133 847L1149 842L1166 836L1183 829L1199 823L1216 827L1233 827L1249 831L1266 833L1283 834L1300 836L1316 842L1333 846L1350 847L1366 850L1383 853L1400 861L1416 863L1433 870L1450 873L1468 879L1483 871L1500 867L1520 863L1533 852L1550 835L1567 826L1583 809L1600 796L1617 777L1633 766L1650 754L1667 738L1685 720L1700 731L1717 742"/>
<path stroke="#ff8700" d="M532 1049L549 1044L565 1040L582 1034L599 1032L615 1024L632 1023L649 1017L665 1014L682 1010L699 1003L716 1000L732 995L749 988L766 983L782 980L799 973L816 970L832 968L849 960L866 956L882 951L899 945L916 941L932 935L949 930L966 922L983 920L999 913L1016 907L1033 904L1049 898L1066 895L1083 887L1099 881L1116 877L1133 870L1149 864L1166 861L1183 856L1199 850L1216 849L1233 844L1249 839L1266 839L1283 837L1300 833L1316 832L1333 827L1350 825L1366 823L1383 816L1400 815L1416 808L1433 803L1450 798L1466 795L1483 787L1500 783L1516 777L1538 774L1550 772L1567 768L1583 763L1600 760L1617 756L1633 744L1650 738L1667 729L1685 716L1700 723L1717 731"/>
<path stroke="#ffb878" d="M532 1062L549 1057L565 1054L582 1050L599 1045L615 1041L632 1038L649 1034L665 1030L682 1029L699 1023L716 1018L732 1013L749 1010L766 1008L782 1006L799 998L816 992L832 990L849 986L866 983L882 975L899 970L916 966L932 957L949 953L966 947L983 937L999 932L1016 930L1033 925L1049 918L1066 908L1083 904L1099 900L1116 893L1133 888L1149 884L1166 874L1183 870L1199 863L1216 860L1233 853L1249 845L1266 841L1283 835L1300 828L1316 825L1333 821L1350 812L1366 810L1383 808L1400 803L1416 803L1433 799L1450 797L1466 795L1483 790L1500 787L1516 788L1533 783L1550 774L1567 773L1583 770L1600 765L1623 759L1650 753L1667 748L1685 740L1700 749L1717 750"/>
<path stroke="#9e7059" d="M532 1009L549 1004L565 1000L582 996L599 992L615 988L632 982L649 975L665 970L682 967L699 962L716 957L732 951L749 948L766 944L782 938L799 934L816 927L832 922L849 922L866 916L882 909L899 905L916 900L932 893L949 890L966 883L983 879L999 875L1016 867L1033 865L1049 857L1066 853L1083 850L1099 842L1116 835L1133 829L1149 827L1166 821L1183 815L1199 810L1216 809L1233 806L1249 802L1266 796L1283 795L1300 794L1316 788L1333 784L1350 784L1366 783L1383 776L1400 775L1416 771L1433 764L1450 767L1466 756L1483 758L1500 750L1516 744L1533 743L1550 740L1567 733L1583 730L1600 721L1617 716L1633 712L1650 711L1667 708L1685 703L1700 708L1717 716"/>
<path stroke="#fdb3cc" d="M532 996L549 991L565 986L582 980L599 975L615 967L632 963L649 958L665 954L682 950L699 942L716 938L732 935L749 926L766 922L782 919L799 909L816 907L832 902L849 893L866 889L882 883L899 882L916 876L932 873L949 870L966 867L983 866L999 857L1016 853L1033 848L1049 846L1066 839L1083 839L1099 833L1116 830L1133 827L1149 820L1166 817L1183 814L1199 810L1216 812L1233 814L1249 812L1266 812L1283 818L1300 816L1316 817L1333 820L1350 820L1366 823L1383 813L1400 813L1416 800L1433 797L1450 789L1466 784L1483 775L1500 765L1516 762L1533 756L1550 750L1567 743L1583 735L1600 725L1617 718L1633 715L1650 706L1667 699L1685 690L1700 701L1717 711"/>
<path stroke="#f24058" d="M532 850L549 841L565 834L582 828L599 823L615 816L632 809L649 799L665 796L682 788L699 780L716 776L732 770L749 764L766 756L782 748L799 742L816 738L832 729L849 724L866 716L882 710L899 708L916 696L932 693L949 689L966 678L983 672L999 666L1016 660L1033 656L1049 647L1066 640L1083 636L1099 629L1116 623L1133 619L1149 622L1166 620L1183 622L1199 623L1216 638L1233 648L1249 663L1266 675L1283 690L1300 702L1316 713L1333 726L1350 743L1366 756L1393 775L1416 762L1433 751L1450 743L1466 724L1483 707L1500 690L1516 674L1533 664L1550 650L1567 637L1583 623L1600 610L1617 594L1633 578L1650 562L1667 573L1683 595L1700 613L1717 630"/>
<path stroke="#b69619" d="M532 570L549 566L565 561L582 559L599 552L615 550L632 545L649 542L665 538L682 534L699 530L716 525L732 520L749 520L766 513L782 512L799 504L816 501L832 497L849 491L866 490L882 486L899 479L916 476L932 470L949 468L966 465L983 458L999 455L1016 448L1033 444L1049 440L1066 432L1083 426L1099 417L1116 414L1129 410L1149 409L1166 409L1183 407L1199 405L1218 410L1234 381L1249 402L1266 349L1285 397L1300 388L1316 373L1333 390L1350 365L1366 359L1383 350L1400 345L1416 332L1435 382L1450 365L1466 345L1483 344L1495 345L1516 345L1533 346L1550 342L1567 346L1583 345L1600 343L1617 347L1633 345L1650 342L1667 344L1680 345L1700 396L1717 377"/>
<path stroke="#7b706f" d="M532 583L549 576L565 575L582 568L599 562L615 559L632 549L649 546L665 540L682 537L699 530L716 521L732 519L749 512L766 505L782 503L799 499L816 493L832 484L849 481L866 477L882 475L899 468L916 464L932 460L949 457L966 451L983 446L999 445L1016 439L1033 437L1049 434L1066 431L1083 428L1099 422L1116 418L1133 416L1149 410L1166 410L1183 410L1199 404L1216 399L1233 393L1249 390L1266 387L1283 374L1300 375L1316 369L1333 364L1350 355L1366 348L1383 345L1400 341L1423 330L1450 318L1468 322L1483 332L1500 342L1520 326L1533 321L1551 309L1570 322L1588 318L1600 317L1617 312L1635 306L1652 309L1670 297L1683 294L1700 296L1717 305"/>
<path stroke="#fdb3cc" d="M532 494L549 486L565 481L582 474L599 472L615 471L632 475L649 470L665 470L682 469L697 467L716 466L732 464L749 462L766 461L782 461L799 460L816 458L832 456L849 449L866 450L882 445L899 444L916 442L932 441L949 439L966 437L983 431L999 430L1016 427L1033 424L1049 424L1066 418L1083 416L1099 413L1116 410L1133 406L1149 404L1166 408L1183 403L1199 397L1216 397L1233 390L1249 384L1266 385L1283 381L1300 379L1316 378L1333 370L1350 369L1366 366L1383 368L1400 363L1416 360L1433 358L1450 355L1466 355L1483 350L1500 347L1516 349L1533 344L1550 343L1567 341L1583 336L1600 334L1617 332L1633 329L1650 329L1667 325L1683 324L1700 329L1717 330"/>
<path stroke="#4475a8" d="M532 501L549 499L565 489L582 485L599 474L615 478L632 479L649 478L664 475L681 478L701 466L714 474L732 472L749 472L766 467L782 466L799 464L816 463L832 460L849 459L866 457L882 455L899 450L916 444L932 441L949 437L966 430L983 436L999 429L1016 432L1038 428L1049 427L1076 422L1099 420L1116 414L1133 410L1149 408L1166 407L1183 404L1199 400L1216 398L1233 395L1249 394L1266 392L1283 389L1300 386L1316 384L1333 380L1350 382L1366 377L1383 375L1400 373L1416 371L1433 364L1450 363L1466 364L1483 358L1500 357L1516 354L1533 350L1550 350L1567 348L1583 347L1600 345L1617 339L1633 340L1650 336L1667 336L1683 333L1700 338L1717 344"/>
<path stroke="#b9adaa" d="M532 530L549 527L565 518L582 518L599 510L615 503L632 498L649 494L665 492L682 483L699 481L716 471L729 469L749 467L766 463L782 462L799 460L816 455L832 456L846 453L866 452L882 452L899 450L916 449L932 446L949 442L966 439L983 438L999 436L1016 433L1033 430L1049 429L1066 424L1083 423L1099 419L1116 418L1133 419L1149 416L1166 414L1183 413L1199 410L1216 410L1233 407L1249 403L1266 398L1283 397L1300 393L1316 395L1333 387L1350 386L1366 384L1383 383L1400 380L1416 375L1433 372L1450 369L1466 366L1483 364L1500 362L1516 362L1533 357L1550 357L1567 354L1583 351L1600 349L1617 349L1633 345L1650 345L1667 338L1683 337L1700 344L1717 350"/>
<path stroke="#b69619" d="M532 543L549 538L565 532L582 524L599 519L615 511L632 508L649 499L665 498L691 495L716 491L732 484L749 480L766 477L782 476L799 477L816 476L832 475L846 477L866 461L882 470L899 466L922 453L949 447L966 444L983 439L999 439L1016 434L1033 430L1049 427L1066 425L1083 419L1099 418L1116 418L1133 414L1149 413L1166 411L1183 407L1199 404L1216 399L1233 399L1249 399L1266 396L1283 391L1300 393L1316 388L1333 386L1350 383L1366 384L1383 384L1400 378L1416 372L1433 373L1450 371L1466 367L1483 361L1500 361L1516 361L1533 357L1550 357L1567 352L1583 352L1600 350L1617 351L1633 348L1650 346L1667 348L1683 344L1700 351L1717 357"/>
<path stroke="#b69619" d="M532 589L549 594L569 549L582 537L599 525L615 524L632 529L647 529L665 502L682 497L697 489L716 491L732 487L747 487L766 480L784 473L799 467L816 464L832 462L849 465L866 459L882 459L899 453L916 453L932 449L949 448L966 446L983 444L999 443L1016 439L1033 437L1049 435L1066 432L1083 430L1099 430L1116 422L1133 425L1149 424L1166 424L1183 420L1199 417L1216 413L1233 415L1249 411L1266 408L1283 406L1300 405L1316 405L1333 400L1350 401L1366 397L1383 393L1400 394L1416 389L1433 386L1450 383L1466 381L1483 378L1500 376L1516 371L1533 370L1550 369L1567 369L1583 368L1600 363L1617 364L1633 361L1650 360L1667 357L1683 357L1700 368L1717 377"/>
<path stroke="#1f9690" d="M532 554L549 565L565 573L582 568L599 563L615 562L632 565L649 567L665 553L682 545L699 537L716 533L732 530L749 533L766 526L782 523L799 518L816 516L832 513L849 507L866 503L882 503L899 498L916 494L932 494L949 489L966 489L983 481L999 479L1016 480L1033 477L1049 473L1066 471L1083 469L1099 467L1116 461L1133 463L1149 459L1166 454L1183 453L1199 450L1216 445L1233 445L1249 441L1266 441L1283 438L1300 437L1316 432L1333 426L1350 425L1366 424L1383 420L1400 420L1416 416L1433 413L1450 409L1466 406L1483 406L1500 403L1516 400L1533 397L1550 394L1567 393L1583 390L1600 387L1617 383L1633 382L1650 379L1667 380L1683 377L1700 386L1717 397"/>
<path stroke="#38a14a" d="M532 635L549 633L565 634L582 633L599 625L615 628L632 618L647 617L665 608L682 596L697 591L716 582L731 574L749 572L766 565L782 565L799 667L816 555L832 552L849 548L866 543L882 537L899 536L916 536L932 534L949 529L966 528L983 523L999 521L1016 518L1033 517L1049 516L1066 511L1083 508L1099 507L1116 502L1133 500L1149 498L1166 495L1183 493L1199 490L1216 486L1233 486L1249 488L1266 486L1283 483L1300 481L1316 478L1333 479L1350 482L1366 477L1383 474L1400 471L1416 470L1433 468L1450 463L1466 459L1483 457L1500 457L1516 451L1533 450L1550 451L1567 446L1583 447L1600 447L1617 443L1633 440L1650 442L1667 438L1683 437L1700 448L1717 457"/>
<path stroke="#1f9690" d="M532 623L549 613L565 607L582 600L599 593L615 583L632 573L649 565L665 557L682 547L699 545L716 538L732 527L749 525L767 517L786 542L806 517L832 509L849 503L866 497L882 494L899 490L916 492L932 490L949 487L966 486L983 484L999 480L1016 479L1033 477L1049 473L1066 472L1083 468L1099 471L1116 470L1133 466L1149 461L1166 461L1183 459L1199 457L1216 452L1233 452L1249 452L1266 449L1283 447L1300 447L1316 441L1333 441L1350 440L1366 437L1383 434L1400 433L1416 430L1433 426L1450 425L1466 422L1483 420L1500 417L1516 411L1533 410L1550 407L1567 408L1583 401L1600 403L1617 402L1633 402L1650 401L1667 401L1683 397L1700 405L1717 410"/>
<path stroke="#ff8700" d="M532 847L549 834L565 821L582 808L599 794L614 784L632 770L649 752L665 737L682 721L709 699L732 684L749 672L766 663L782 646L804 633L816 621L832 615L849 598L866 589L882 576L899 563L916 557L932 548L949 543L966 537L983 530L994 525L1016 520L1033 517L1049 514L1066 511L1083 507L1099 505L1119 499L1133 497L1149 494L1166 491L1183 487L1199 483L1216 481L1233 480L1249 477L1266 478L1283 471L1300 474L1316 468L1333 468L1350 466L1366 463L1383 461L1400 460L1416 456L1433 452L1450 450L1466 447L1483 442L1500 445L1516 440L1533 437L1550 435L1567 434L1583 433L1600 431L1617 430L1633 427L1650 425L1667 426L1683 424L1700 431L1717 437"/>
<path stroke="#9e7059" d="M532 956L549 945L565 935L582 927L599 914L614 907L632 882L649 858L665 833L677 815L699 786L716 765L732 743L749 723L772 690L799 666L816 647L832 636L849 621L867 605L882 600L899 592L916 589L932 582L949 573L966 570L983 565L999 555L1016 550L1033 543L1049 539L1066 535L1083 533L1099 528L1116 522L1133 520L1149 518L1166 514L1183 509L1199 503L1216 500L1233 497L1249 496L1266 495L1283 490L1300 486L1316 487L1333 485L1350 478L1366 477L1383 474L1400 472L1416 465L1433 460L1450 462L1466 462L1483 454L1500 450L1516 444L1533 444L1550 439L1567 443L1583 437L1600 431L1617 432L1633 429L1650 425L1667 426L1683 424L1700 430L1717 437"/>
<path stroke="#ffb878" d="M532 996L549 993L565 986L582 980L599 974L615 968L632 963L649 959L665 951L682 949L699 943L716 936L732 930L749 921L766 917L782 909L799 903L816 894L832 890L849 882L866 876L882 866L899 854L916 845L932 834L949 822L962 815L983 795L999 778L1024 752L1049 715L1066 687L1088 651L1099 633L1119 601L1133 595L1149 585L1166 574L1183 567L1199 557L1216 551L1233 549L1249 544L1266 538L1283 536L1300 533L1316 530L1333 525L1350 519L1366 517L1383 512L1400 508L1416 507L1433 503L1450 497L1466 496L1483 495L1500 487L1516 487L1533 483L1550 480L1567 475L1583 478L1600 476L1617 471L1633 469L1650 466L1667 464L1683 463L1700 475L1717 483"/>
<path stroke="#fdb3cc" d="M532 850L549 834L565 824L582 811L599 801L615 789L632 779L649 766L665 753L682 744L699 730L716 721L732 710L749 699L766 695L782 683L799 675L816 664L832 657L849 644L866 637L882 627L899 616L916 610L932 599L946 593L957 704L966 543L983 538L999 532L1016 531L1033 523L1049 518L1066 516L1083 513L1099 512L1116 505L1133 503L1149 500L1166 495L1183 495L1199 490L1216 487L1233 482L1249 481L1266 476L1283 473L1300 469L1316 467L1333 463L1350 459L1366 457L1383 454L1400 451L1416 443L1433 444L1450 440L1466 435L1483 432L1500 432L1516 425L1533 424L1550 419L1567 417L1583 416L1600 413L1617 408L1633 409L1650 404L1667 400L1683 397L1700 406L1717 410"/>
<path stroke="#f4cc5a" d="M532 1049L549 1042L565 1040L582 1033L599 1028L615 1023L632 1016L649 1010L665 1004L682 1000L699 996L716 993L732 987L749 978L766 975L782 968L799 964L816 958L832 955L849 948L866 943L882 938L899 934L916 932L932 926L949 920L966 915L983 908L999 905L1016 901L1033 896L1049 894L1066 889L1083 885L1099 882L1116 877L1129 877L1151 899L1166 892L1183 885L1199 870L1214 867L1233 879L1248 888L1266 860L1280 842L1300 839L1316 832L1336 848L1348 867L1361 839L1383 832L1398 826L1416 797L1428 782L1450 762L1466 747L1483 731L1500 717L1516 704L1533 690L1550 685L1567 678L1583 669L1600 666L1617 657L1633 649L1650 644L1667 636L1683 630L1700 642L1717 650"/>
<path stroke="#9e7059" d="M532 1036L549 1031L565 1026L582 1021L599 1014L615 1009L632 1006L649 999L665 993L682 987L699 983L716 978L732 973L749 967L766 960L782 955L799 952L816 947L832 939L849 932L866 929L882 925L899 920L916 911L932 904L949 904L966 901L983 893L999 887L1016 879L1033 876L1049 871L1066 866L1083 866L1099 861L1116 861L1129 856L1149 859L1166 860L1183 862L1199 864L1216 865L1238 869L1249 871L1266 871L1283 872L1300 874L1316 877L1333 877L1350 871L1366 856L1383 834L1400 812L1416 789L1428 775L1450 758L1466 740L1483 725L1500 714L1516 698L1533 683L1550 678L1567 669L1583 663L1600 656L1617 650L1633 644L1650 635L1667 631L1683 623L1700 629L1717 637"/>
<path stroke="#1f9690" d="M532 1023L549 1020L565 1012L582 1007L599 1002L615 997L632 987L649 985L665 978L682 973L699 969L716 963L732 960L749 954L766 949L782 941L799 938L816 932L832 929L849 922L866 916L882 911L899 908L916 903L932 900L949 897L966 892L983 887L999 886L1016 880L1033 876L1049 878L1066 872L1083 875L1099 874L1116 872L1133 869L1149 873L1166 874L1183 876L1199 877L1216 875L1233 878L1249 879L1266 880L1280 881L1300 874L1316 867L1333 877L1348 891L1366 848L1383 835L1400 822L1416 808L1433 796L1450 784L1466 771L1483 755L1500 741L1516 733L1533 716L1550 709L1567 700L1583 694L1600 686L1617 677L1633 670L1650 666L1667 656L1683 650L1700 658L1717 663"/>
<path stroke="#b674a1" d="M532 1009L549 1003L565 999L582 991L599 989L615 982L632 977L649 970L665 964L682 960L699 956L716 950L732 945L749 941L766 935L782 931L799 925L816 918L832 911L849 909L866 903L882 901L899 896L916 893L932 885L949 881L966 881L983 876L999 871L1016 866L1033 863L1049 859L1066 856L1083 853L1099 854L1116 849L1133 847L1149 840L1166 840L1183 841L1199 836L1216 838L1233 838L1249 840L1266 839L1283 838L1300 841L1316 843L1333 843L1350 845L1366 846L1386 892L1406 852L1428 835L1450 812L1466 796L1483 781L1500 762L1516 747L1533 730L1550 720L1567 708L1583 701L1600 692L1617 682L1633 671L1650 661L1667 658L1683 643L1700 652L1717 663"/>
<path stroke="#1f9690" d="M532 943L549 937L565 932L582 921L599 917L615 909L632 900L649 895L665 891L682 883L699 876L716 871L732 865L749 861L766 856L782 847L799 847L816 839L832 832L849 828L866 823L882 818L899 817L916 811L932 808L949 805L966 798L983 794L999 791L1016 788L1033 783L1049 779L1066 775L1083 777L1099 772L1116 771L1133 767L1149 764L1166 763L1183 758L1199 756L1216 755L1233 754L1249 750L1266 748L1283 749L1298 748L1316 814L1336 766L1350 755L1366 746L1383 735L1400 720L1416 713L1433 700L1450 690L1466 679L1483 666L1500 654L1516 648L1533 637L1550 631L1567 622L1583 617L1600 608L1617 600L1633 593L1650 586L1667 578L1683 570L1700 577L1717 583"/>
<path stroke="#78bcb4" d="M532 1023L549 1018L565 1011L582 1005L599 1001L615 996L632 990L649 984L665 978L682 974L699 969L716 963L732 958L749 955L766 947L782 941L799 938L816 932L832 927L849 923L866 916L882 913L899 906L916 902L932 901L949 896L966 891L983 889L999 885L1016 878L1033 876L1049 872L1066 870L1083 868L1099 866L1116 866L1133 863L1149 863L1166 861L1178 856L1201 948L1221 877L1233 867L1249 850L1266 840L1283 823L1300 814L1316 802L1333 792L1350 779L1366 770L1383 760L1400 749L1416 743L1433 731L1450 726L1466 714L1483 703L1500 695L1516 683L1533 676L1550 668L1567 665L1583 655L1600 647L1617 637L1633 632L1650 627L1667 616L1683 610L1700 615L1717 623"/>
<path stroke="#78bcb4" d="M532 889L549 878L565 868L582 859L599 853L615 841L632 834L649 825L665 816L682 805L699 796L716 787L732 782L749 773L766 763L782 754L799 747L816 739L832 732L849 721L866 716L882 710L899 707L916 699L932 692L949 689L966 684L983 679L999 671L1016 665L1033 663L1049 660L1066 656L1083 656L1099 647L1116 643L1133 643L1149 640L1166 635L1183 629L1199 630L1226 621L1236 760L1246 756L1258 621L1283 609L1300 603L1316 593L1333 585L1350 580L1366 570L1383 564L1400 559L1416 553L1433 548L1450 543L1466 539L1483 533L1500 528L1516 522L1533 517L1550 513L1567 510L1583 503L1600 498L1617 493L1633 488L1650 487L1667 483L1683 477L1700 484L1717 490"/>
<path stroke="#97caea" d="M532 1009L549 1004L565 1000L582 993L599 988L615 982L632 977L649 973L665 965L682 957L699 956L716 952L732 944L749 942L766 935L782 934L799 922L816 919L832 912L849 908L866 903L882 901L899 893L916 891L932 887L949 886L966 880L983 872L999 868L1016 868L1033 863L1049 860L1066 860L1083 855L1099 852L1116 852L1133 851L1151 846L1166 955L1178 856L1199 846L1216 841L1233 835L1249 822L1266 815L1283 810L1300 806L1316 798L1333 791L1350 791L1366 783L1383 773L1400 766L1416 754L1433 744L1450 736L1466 729L1483 720L1500 707L1516 697L1533 690L1550 682L1567 674L1583 666L1600 659L1617 656L1633 644L1650 635L1667 632L1683 623L1700 628L1717 637"/>
<path stroke="#b674a1" d="M532 983L549 974L565 968L582 963L599 958L615 949L632 940L649 935L665 926L682 923L699 916L716 913L732 905L749 898L766 895L782 887L799 885L816 878L832 875L849 867L866 863L882 858L899 855L916 853L932 847L949 844L966 839L983 836L999 830L1016 823L1033 823L1049 822L1066 818L1083 816L1099 812L1116 810L1129 807L1151 820L1166 877L1183 842L1199 849L1216 856L1233 864L1249 952L1266 860L1283 853L1300 845L1316 836L1333 828L1345 820L1376 804L1400 790L1416 775L1433 762L1450 750L1466 738L1483 725L1500 715L1516 702L1533 690L1550 681L1567 674L1583 663L1600 651L1617 642L1633 637L1650 627L1667 621L1683 610L1700 617L1717 623"/>
<path stroke="#ff8700" d="M532 1049L549 1042L565 1038L582 1033L599 1029L615 1020L632 1015L649 1010L665 1006L682 1002L699 996L716 990L732 988L749 976L766 974L782 970L799 961L816 960L832 955L849 948L866 943L882 938L899 931L916 928L932 922L949 916L966 909L983 905L999 899L1016 894L1033 889L1049 887L1066 881L1083 879L1099 873L1116 869L1133 866L1149 862L1166 858L1183 853L1199 850L1216 848L1233 849L1249 850L1266 850L1283 849L1300 850L1316 850L1333 847L1351 846L1366 674L1383 665L1400 659L1416 649L1433 642L1450 637L1466 625L1483 618L1500 614L1516 606L1533 597L1550 589L1567 583L1583 581L1600 573L1617 569L1633 561L1650 556L1667 553L1683 543L1700 552L1717 557"/>
<path stroke="#97caea" d="M532 643L557 630L590 613L615 594L632 577L649 569L665 555L682 541L699 529L716 521L732 516L747 511L766 505L782 505L799 501L816 494L832 492L849 489L866 483L882 480L899 474L916 473L932 469L949 468L966 464L983 461L999 458L1016 453L1033 450L1049 449L1066 447L1083 439L1099 440L1116 437L1133 437L1149 428L1166 428L1183 427L1199 424L1216 422L1233 417L1249 415L1266 414L1283 412L1300 406L1316 407L1333 401L1350 396L1366 397L1383 394L1400 390L1416 387L1433 385L1450 384L1466 379L1483 381L1500 374L1516 372L1533 370L1550 365L1567 367L1583 363L1600 361L1617 359L1633 353L1650 353L1667 349L1683 350L1700 355L1717 357"/>
</g>
</svg>
<div class="b" style="left:1817px;top:140px;width:303px;height:1433px;background:#fafafa;border:2px solid #d4d4d4;"></div>
<div class="t" style="left:1830.5px;top:159.1px;font-size:25px;color:#333;">Country</div>
<div class="b" style="left:1819px;top:200px;width:303px;height:1375px;overflow:hidden;">
<div class="b" style="left:0px;top:0px;width:270px;height:1375px;background:#ffffff;"></div>
<div class="b" style="left:270px;top:0px;width:2px;height:1375px;background:#ebebeb;"></div>
<div class="b" style="left:272px;top:0px;width:26px;height:1375px;background:#f9f9f9;"></div>
<div class="b" style="left:297px;top:0px;width:2px;height:1375px;background:#ebebeb;"></div>
<div class="b" style="left:277px;top:6px;width:16px;height:179px;background:#7f7f7f;border-radius:8px;"></div>
<div class="b" style="left:5px;top:6px;width:28px;height:28px;background:#4475a8;"></div>
<div class="t" style="left:44.0px;top:9.2px;font-size:25px;color:#333;">Afghanistan</div>
<div class="b" style="left:5px;top:46px;width:28px;height:28px;background:#97caea;"></div>
<div class="t" style="left:44.0px;top:49.2px;font-size:25px;color:#333;">Africa</div>
<div class="b" style="left:5px;top:86px;width:28px;height:28px;background:#ff8700;"></div>
<div class="t" style="left:44.0px;top:89.2px;font-size:25px;color:#333;">Albania</div>
<div class="b" style="left:5px;top:126px;width:28px;height:28px;background:#ffb878;"></div>
<div class="t" style="left:44.0px;top:129.2px;font-size:25px;color:#333;">Algeria</div>
<div class="b" style="left:5px;top:166px;width:28px;height:28px;background:#38a14a;"></div>
<div class="t" style="left:44.0px;top:169.2px;font-size:25px;color:#333;">American Samoa</div>
<div class="b" style="left:5px;top:206px;width:28px;height:28px;background:#78d47a;"></div>
<div class="t" style="left:44.0px;top:209.2px;font-size:25px;color:#333;">Americas</div>
<div class="b" style="left:5px;top:246px;width:28px;height:28px;background:#b69619;"></div>
<div class="t" style="left:44.0px;top:249.2px;font-size:25px;color:#333;">Andorra</div>
<div class="b" style="left:5px;top:286px;width:28px;height:28px;background:#f4cc5a;"></div>
<div class="t" style="left:44.0px;top:289.2px;font-size:25px;color:#333;">Angola</div>
<div class="b" style="left:5px;top:326px;width:28px;height:28px;background:#1f9690;"></div>
<div class="t" style="left:44.0px;top:329.2px;font-size:25px;color:#333;">Anguilla</div>
<div class="b" style="left:5px;top:366px;width:28px;height:28px;background:#78bcb4;"></div>
<div class="t" style="left:44.0px;top:369.2px;font-size:25px;color:#333;">Antigua and Barb..</div>
<div class="b" style="left:5px;top:406px;width:28px;height:28px;background:#f24058;"></div>
<div class="t" style="left:44.0px;top:409.2px;font-size:25px;color:#333;">Argentina</div>
<div class="b" style="left:5px;top:446px;width:28px;height:28px;background:#ff9191;"></div>
<div class="t" style="left:44.0px;top:449.2px;font-size:25px;color:#333;">Armenia</div>
<div class="b" style="left:5px;top:486px;width:28px;height:28px;background:#7b706f;"></div>
<div class="t" style="left:44.0px;top:489.2px;font-size:25px;color:#333;">Aruba</div>
<div class="b" style="left:5px;top:526px;width:28px;height:28px;background:#b9adaa;"></div>
<div class="t" style="left:44.0px;top:529.2px;font-size:25px;color:#333;">Asia</div>
<div class="b" style="left:5px;top:566px;width:28px;height:28px;background:#de5f92;"></div>
<div class="t" style="left:44.0px;top:569.2px;font-size:25px;color:#333;">Australia</div>
<div class="b" style="left:5px;top:606px;width:28px;height:28px;background:#fdb3cc;"></div>
<div class="t" style="left:44.0px;top:609.2px;font-size:25px;color:#333;">Austria</div>
<div class="b" style="left:5px;top:646px;width:28px;height:28px;background:#b674a1;"></div>
<div class="t" style="left:44.0px;top:649.2px;font-size:25px;color:#333;">Azerbaijan</div>
<div class="b" style="left:5px;top:686px;width:28px;height:28px;background:#d99fca;"></div>
<div class="t" style="left:44.0px;top:689.2px;font-size:25px;color:#333;">Bahamas</div>
<div class="b" style="left:5px;top:726px;width:28px;height:28px;background:#9e7059;"></div>
<div class="t" style="left:44.0px;top:729.2px;font-size:25px;color:#333;">Bahrain</div>
<div class="b" style="left:5px;top:766px;width:28px;height:28px;background:#dab1a0;"></div>
<div class="t" style="left:44.0px;top:769.2px;font-size:25px;color:#333;">Bangladesh</div>
<div class="b" style="left:5px;top:806px;width:28px;height:28px;background:#4475a8;"></div>
<div class="t" style="left:44.0px;top:809.2px;font-size:25px;color:#333;">Barbados</div>
<div class="b" style="left:5px;top:846px;width:28px;height:28px;background:#97caea;"></div>
<div class="t" style="left:44.0px;top:849.2px;font-size:25px;color:#333;">Belarus</div>
<div class="b" style="left:5px;top:886px;width:28px;height:28px;background:#ff8700;"></div>
<div class="t" style="left:44.0px;top:889.2px;font-size:25px;color:#333;">Belgium</div>
<div class="b" style="left:5px;top:926px;width:28px;height:28px;background:#ffb878;"></div>
<div class="t" style="left:44.0px;top:929.2px;font-size:25px;color:#333;">Belize</div>
<div class="b" style="left:5px;top:966px;width:28px;height:28px;background:#38a14a;"></div>
<div class="t" style="left:44.0px;top:969.2px;font-size:25px;color:#333;">Benin</div>
<div class="b" style="left:5px;top:1006px;width:28px;height:28px;background:#78d47a;"></div>
<div class="t" style="left:44.0px;top:1009.2px;font-size:25px;color:#333;">Bermuda</div>
<div class="b" style="left:5px;top:1046px;width:28px;height:28px;background:#b69619;"></div>
<div class="t" style="left:44.0px;top:1049.2px;font-size:25px;color:#333;">Bhutan</div>
<div class="b" style="left:5px;top:1086px;width:28px;height:28px;background:#f4cc5a;"></div>
<div class="t" style="left:44.0px;top:1089.2px;font-size:25px;color:#333;">Bolivia</div>
<div class="b" style="left:5px;top:1126px;width:28px;height:28px;background:#1f9690;"></div>
<div class="t" style="left:44.0px;top:1129.2px;font-size:25px;color:#333;">Bonaire Sint Eust..</div>
<div class="b" style="left:5px;top:1166px;width:28px;height:28px;background:#78bcb4;"></div>
<div class="t" style="left:44.0px;top:1169.2px;font-size:25px;color:#333;">Bosnia and Herze..</div>
<div class="b" style="left:5px;top:1206px;width:28px;height:28px;background:#f24058;"></div>
<div class="t" style="left:44.0px;top:1209.2px;font-size:25px;color:#333;">Botswana</div>
<div class="b" style="left:5px;top:1246px;width:28px;height:28px;background:#ff9191;"></div>
<div class="t" style="left:44.0px;top:1249.2px;font-size:25px;color:#333;">Brazil</div>
<div class="b" style="left:5px;top:1286px;width:28px;height:28px;background:#7b706f;"></div>
<div class="t" style="left:44.0px;top:1289.2px;font-size:25px;color:#333;">British Virgin Isla..</div>
<div class="b" style="left:5px;top:1326px;width:28px;height:28px;background:#b9adaa;"></div>
<div class="t" style="left:44.0px;top:1329.2px;font-size:25px;color:#333;">Brunei</div>
<div class="b" style="left:5px;top:1366px;width:28px;height:28px;background:#de5f92;"></div>
<div class="t" style="left:44.0px;top:1369.2px;font-size:25px;color:#333;">Bulgaria</div>
</div>
</body></html>
